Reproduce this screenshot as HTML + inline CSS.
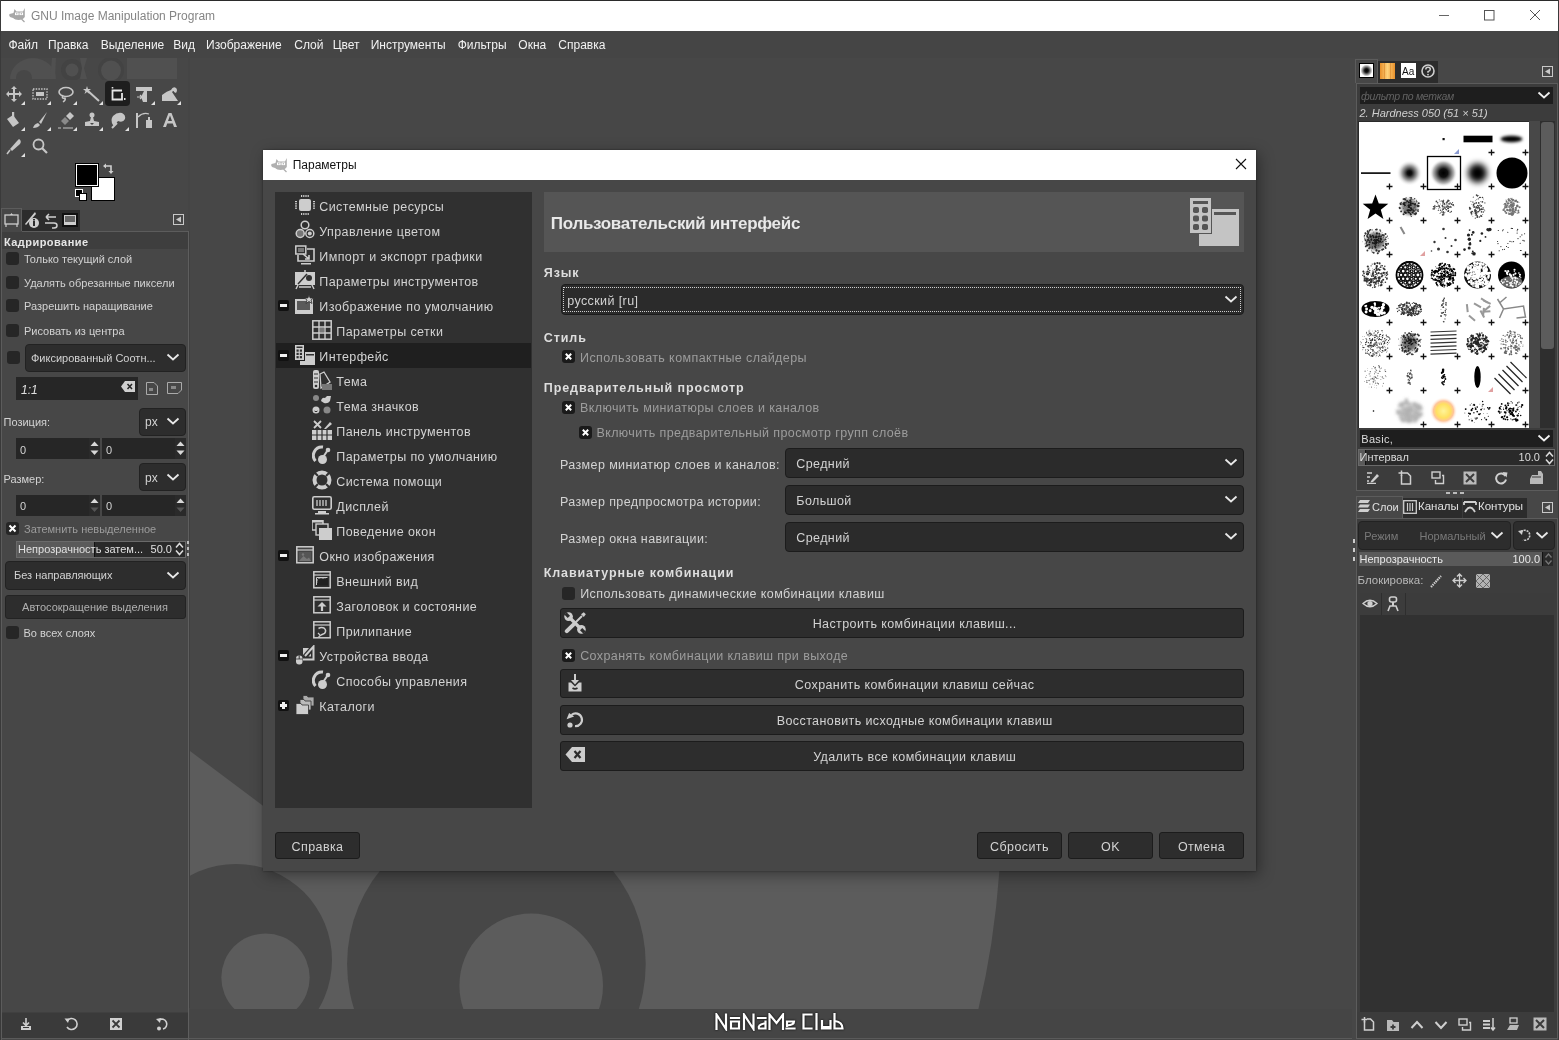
<!DOCTYPE html>
<html><head><meta charset="utf-8"><title>GIMP</title>
<style>
html,body{margin:0;padding:0;width:1559px;height:1040px;overflow:hidden;background:#454545;}
body{position:relative;font-family:"Liberation Sans", sans-serif;}
.t{position:absolute;white-space:pre;line-height:1;font-family:"Liberation Sans", sans-serif;-webkit-font-smoothing:antialiased;}
body{filter:grayscale(0.0001);}
.r{position:absolute;}
</style></head><body>
<div class="r" style="left:0px;top:0px;width:1559px;height:1040px;background:#454545;"></div><div class="r" style="left:0px;top:0px;width:1559px;height:1px;background:#2b2b2b;"></div><div class="r" style="left:0px;top:0px;width:1px;height:1040px;background:#3a3a3a;"></div><div class="r" style="left:1558px;top:0px;width:1px;height:1040px;background:#3a3a3a;"></div><div class="r" style="left:1px;top:1px;width:1557px;height:30px;background:#ffffff;"></div><svg class="r" style="left:8px;top:7px;" width="18" height="16" viewBox="0 0 18 16"><path d="M6.5 2 L8.5 4.5 L15 4.5 L16.8 1 L16.8 10 Q15 13 10.5 13 Q7 13 5 11 L2 10 Q0.5 8 1.5 7 L5.5 6 Z" fill="#a8a8a8"/><rect x="7" y="5.5" width="3.6" height="2.6" fill="#fff"/><rect x="11.5" y="5.5" width="3.6" height="2.6" fill="#fff"/><rect x="8.3" y="6.3" width="1" height="1" fill="#888"/><rect x="12.8" y="6.3" width="1" height="1" fill="#888"/><path d="M6.5 11.5 Q9 10 11 11.5 M13.5 12 L16.5 15" stroke="#a8a8a8" stroke-width="1.3" fill="none"/></svg><div class="t" style="left:31px;top:9.64px;font-size:12px;color:#858585;">GNU Image Manipulation Program</div><div class="r" style="left:1439px;top:15px;width:10px;height:1px;background:#666;"></div><svg class="r" style="left:1484px;top:10px;" width="11" height="11" viewBox="0 0 11 11"><rect x="0.5" y="0.5" width="9.5" height="9.5" fill="none" stroke="#555" stroke-width="1"/></svg><svg class="r" style="left:1529px;top:9px;" width="12" height="12" viewBox="0 0 12 12"><path d="M1 1 L11 11 M11 1 L1 11" stroke="#555" stroke-width="1" fill="none"/></svg><div class="t" style="left:8.5px;top:38.64px;font-size:12px;color:#f2f2f2;">Файл</div><div class="t" style="left:48px;top:38.64px;font-size:12px;color:#f2f2f2;">Правка</div><div class="t" style="left:100.7px;top:38.64px;font-size:12px;color:#f2f2f2;">Выделение</div><div class="t" style="left:173.3px;top:38.64px;font-size:12px;color:#f2f2f2;">Вид</div><div class="t" style="left:206px;top:38.64px;font-size:12px;color:#f2f2f2;">Изображение</div><div class="t" style="left:294.3px;top:38.64px;font-size:12px;color:#f2f2f2;">Слой</div><div class="t" style="left:332.7px;top:38.64px;font-size:12px;color:#f2f2f2;">Цвет</div><div class="t" style="left:370.7px;top:38.64px;font-size:12px;color:#f2f2f2;">Инструменты</div><div class="t" style="left:457.7px;top:38.64px;font-size:12px;color:#f2f2f2;">Фильтры</div><div class="t" style="left:518.3px;top:38.64px;font-size:12px;color:#f2f2f2;">Окна</div><div class="t" style="left:558.3px;top:38.64px;font-size:12px;color:#f2f2f2;">Справка</div><div class="r" style="left:1px;top:58px;width:187px;height:982px;background:#474747;"></div><div class="r" style="left:188px;top:231px;width:1px;height:809px;background:#5e5e5e;"></div><svg class="r" style="left:10px;top:58px;" width="170" height="22" viewBox="0 0 170 22"><g fill="#434343"><circle cx="62" cy="12" r="11"/><circle cx="101" cy="12" r="13"/></g><g fill="#505050">
<path d="M0 21 A22 20 0 0 1 46 21 Z"/>
<path d="M42 0 L46 0 L45 21 L40 21 Z"/>
<circle cx="62" cy="12" r="6.5"/>
<path d="M70 0 L77 0 L74 10 L77 21 L70 21 L72 10 Z"/>
<circle cx="101" cy="12.5" r="10"/>
<rect x="117" y="0" width="50" height="21"/>
</g><g fill="#474747"><circle cx="14" cy="20" r="8"/></g></svg><div class="r" style="left:105px;top:81px;width:25px;height:25px;background:#1e1e1e;border-radius:4px;"></div><svg class="r" style="left:5px;top:85px;" width="18" height="18" viewBox="0 0 18 18"><path d="M9 1 L12 4 L10 4 L10 8 L14 8 L14 6 L17 9 L14 12 L14 10 L10 10 L10 14 L12 14 L9 17 L6 14 L8 14 L8 10 L4 10 L4 12 L1 9 L4 6 L4 8 L8 8 L8 4 L6 4 Z" fill="#c6c6c6"/></svg><svg class="r" style="left:20.5px;top:100.5px;" width="4" height="4" viewBox="0 0 4 4"><path d="M4 0 L4 4 L0 4 Z" fill="#e0e0e0"/></svg><svg class="r" style="left:31px;top:85px;" width="18" height="18" viewBox="0 0 18 18"><rect x="2" y="4" width="14" height="10" fill="none" stroke="#c6c6c6" stroke-width="1.3" stroke-dasharray="1.5 1.2"/><rect x="5" y="7" width="8" height="4" fill="#c6c6c6"/></svg><svg class="r" style="left:46.5px;top:100.5px;" width="4" height="4" viewBox="0 0 4 4"><path d="M4 0 L4 4 L0 4 Z" fill="#e0e0e0"/></svg><svg class="r" style="left:57px;top:85px;" width="18" height="18" viewBox="0 0 18 18"><ellipse cx="9" cy="7" rx="7" ry="4.5" fill="none" stroke="#c6c6c6" stroke-width="1.6"/><path d="M6 10 Q4 14 8 13 Q9 15 6 17" fill="none" stroke="#c6c6c6" stroke-width="1.5"/></svg><svg class="r" style="left:72.5px;top:100.5px;" width="4" height="4" viewBox="0 0 4 4"><path d="M4 0 L4 4 L0 4 Z" fill="#e0e0e0"/></svg><svg class="r" style="left:83px;top:85px;" width="18" height="18" viewBox="0 0 18 18"><path d="M5 6 L16 16" stroke="#c6c6c6" stroke-width="2"/><path d="M4 1 L5 4 L8 4 L5.5 6 L6.5 9 L4 7 L1.5 9 L2.5 6 L0 4 L3 4 Z" fill="#c6c6c6"/></svg><svg class="r" style="left:98.5px;top:100.5px;" width="4" height="4" viewBox="0 0 4 4"><path d="M4 0 L4 4 L0 4 Z" fill="#e0e0e0"/></svg><svg class="r" style="left:109px;top:85px;" width="18" height="18" viewBox="0 0 18 18"><path d="M3.5 2 L3.5 3.5" stroke="#e6e6e6" stroke-width="1.6"/><path d="M13 5.5 L3.5 5.5 L3.5 14.5 L13 14.5 L13 8" fill="none" stroke="#e6e6e6" stroke-width="1.8"/><rect x="15" y="13" width="1.5" height="2" fill="#e6e6e6"/></svg><svg class="r" style="left:135px;top:85px;" width="18" height="18" viewBox="0 0 18 18"><rect x="1" y="2" width="16" height="4" fill="#c6c6c6"/><path d="M9 6 L12 6 L12 17 L8 17 L6 12 Z" fill="#c6c6c6"/><path d="M2 12 L7 12 M5 10 L7 12 L5 14" stroke="#c6c6c6" stroke-width="1.2" fill="none"/></svg><svg class="r" style="left:150.5px;top:100.5px;" width="4" height="4" viewBox="0 0 4 4"><path d="M4 0 L4 4 L0 4 Z" fill="#e0e0e0"/></svg><svg class="r" style="left:161px;top:85px;" width="18" height="18" viewBox="0 0 18 18"><path d="M1 16 L1 10 Q6 6 10 5 Q12 1 15 3 Q17 5 15 8 L13 7 Q13 5 11 7 L17 16 Z" fill="#c6c6c6"/></svg><svg class="r" style="left:176.5px;top:100.5px;" width="4" height="4" viewBox="0 0 4 4"><path d="M4 0 L4 4 L0 4 Z" fill="#e0e0e0"/></svg><svg class="r" style="left:5px;top:111px;" width="18" height="18" viewBox="0 0 18 18"><path d="M2 8 L8 4 L14 12 L8 16 Z" fill="#c6c6c6"/><rect x="7" y="1" width="2.2" height="9" fill="#c6c6c6"/></svg><svg class="r" style="left:20.5px;top:126.5px;" width="4" height="4" viewBox="0 0 4 4"><path d="M4 0 L4 4 L0 4 Z" fill="#e0e0e0"/></svg><svg class="r" style="left:31px;top:111px;" width="18" height="18" viewBox="0 0 18 18"><path d="M16 1 L8 11 L10 13 Z" fill="#c6c6c6"/><path d="M7 12 Q3 13 2 17 Q7 17 9 14 Z" fill="#c6c6c6"/></svg><svg class="r" style="left:46.5px;top:126.5px;" width="4" height="4" viewBox="0 0 4 4"><path d="M4 0 L4 4 L0 4 Z" fill="#e0e0e0"/></svg><svg class="r" style="left:57px;top:111px;" width="18" height="18" viewBox="0 0 18 18"><path d="M9 5 L13 1 L17 5 L13 9 Z" fill="#c6c6c6"/><path d="M4 10 L8 6 L12 10 L8 14 Z" fill="#8a8a8a"/><path d="M1 17 L4 17 M6 17 L16 17" stroke="#c6c6c6" stroke-width="1.2"/></svg><svg class="r" style="left:72.5px;top:126.5px;" width="4" height="4" viewBox="0 0 4 4"><path d="M4 0 L4 4 L0 4 Z" fill="#e0e0e0"/></svg><svg class="r" style="left:83px;top:111px;" width="18" height="18" viewBox="0 0 18 18"><circle cx="9" cy="4" r="2.5" fill="#c6c6c6"/><path d="M8 6 L10 6 L11 10 L16 11 L16 15 L2 15 L2 11 L7 10 Z" fill="#c6c6c6"/><path d="M7 12 L11 12 L9 14Z" fill="#474747"/></svg><svg class="r" style="left:98.5px;top:126.5px;" width="4" height="4" viewBox="0 0 4 4"><path d="M4 0 L4 4 L0 4 Z" fill="#e0e0e0"/></svg><svg class="r" style="left:109px;top:111px;" width="18" height="18" viewBox="0 0 18 18"><path d="M4 14 Q1 9 4 5 Q8 1 13 2 Q17 4 16 8 Q14 12 9 10 L5 15 Z" fill="#c6c6c6"/><path d="M3 17 L8 12" stroke="#c6c6c6" stroke-width="2"/></svg><svg class="r" style="left:124.5px;top:126.5px;" width="4" height="4" viewBox="0 0 4 4"><path d="M4 0 L4 4 L0 4 Z" fill="#e0e0e0"/></svg><svg class="r" style="left:135px;top:111px;" width="18" height="18" viewBox="0 0 18 18"><rect x="1" y="2" width="2" height="15" fill="#c6c6c6"/><path d="M3 6 Q8 1 14 3" fill="none" stroke="#c6c6c6" stroke-width="1.2"/><rect x="11" y="9" width="6" height="8" fill="#c6c6c6"/><rect x="13" y="6" width="2" height="3" fill="#c6c6c6"/></svg><svg class="r" style="left:161px;top:111px;" width="18" height="18" viewBox="0 0 18 18"><path d="M2 16 L7.5 2 L10.5 2 L16 16 L13 16 L11.8 12.5 L6.2 12.5 L5 16 Z M7 10 L11 10 L9 4.5 Z" fill="#c6c6c6" fill-rule="evenodd"/></svg><svg class="r" style="left:5px;top:137px;" width="18" height="18" viewBox="0 0 18 18"><path d="M14 2 Q17 4 15 7 L7 14 L5 12 L12 4 Z" fill="#c6c6c6"/><path d="M5 13 L2 17" stroke="#c6c6c6" stroke-width="1.5"/></svg><svg class="r" style="left:20.5px;top:152.5px;" width="4" height="4" viewBox="0 0 4 4"><path d="M4 0 L4 4 L0 4 Z" fill="#e0e0e0"/></svg><svg class="r" style="left:31px;top:137px;" width="18" height="18" viewBox="0 0 18 18"><circle cx="7.5" cy="7.5" r="5" fill="none" stroke="#c6c6c6" stroke-width="1.8"/><path d="M11 11 L16 16" stroke="#c6c6c6" stroke-width="2.2"/></svg><div class="r" style="left:91px;top:177px;width:24px;height:24px;background:#000;"></div><div class="r" style="left:92px;top:178px;width:22px;height:22px;background:#fff;"></div><div class="r" style="left:75px;top:163px;width:24px;height:24px;background:#000;"></div><div class="r" style="left:76px;top:164px;width:22px;height:22px;background:#fff;"></div><div class="r" style="left:77px;top:165px;width:20px;height:20px;background:#000;"></div><div class="r" style="left:75px;top:189px;width:8px;height:8px;background:#fff;"></div><div class="r" style="left:76px;top:190px;width:6px;height:6px;background:#000;"></div><div class="r" style="left:79px;top:193px;width:8px;height:8px;background:#000;"></div><div class="r" style="left:80px;top:194px;width:6px;height:6px;background:#fff;"></div><svg class="r" style="left:103px;top:163px;" width="13" height="12" viewBox="0 0 13 12"><path d="M2 3 L8 3 L8 9" fill="none" stroke="#cfcfcf" stroke-width="1.6"/><path d="M0 3 L3 0.5 L3 5.5 Z M5.5 8 L10.5 8 L8 11 Z" fill="#cfcfcf"/></svg><div class="r" style="left:22px;top:210px;width:58px;height:21px;background:#2c2c2c;"></div><div class="r" style="left:1px;top:208px;width:21px;height:1px;background:#5c5c5c;"></div><div class="r" style="left:1px;top:208px;width:1px;height:832px;background:#5c5c5c;"></div><div class="r" style="left:21px;top:208px;width:1px;height:23px;background:#5c5c5c;"></div><div class="r" style="left:22px;top:231px;width:166px;height:1px;background:#5c5c5c;"></div><svg class="r" style="left:3px;top:211px;" width="18" height="18" viewBox="0 0 18 18"><rect x="2" y="4" width="13" height="9" fill="none" stroke="#cfcfcf" stroke-width="1.3"/><path d="M7 4 L8.5 2 L10 4Z" fill="#cfcfcf"/><path d="M3 13 L3 16 M14 13 L14 16" stroke="#cfcfcf" stroke-width="1.2"/></svg><svg class="r" style="left:23px;top:211px;" width="18" height="18" viewBox="0 0 18 18"><path d="M12 1 L2 13 L3 14 L13 3 Z" fill="#cfcfcf"/><circle cx="11" cy="12" r="5" fill="#cfcfcf"/><rect x="10" y="10" width="2" height="5" fill="#2c2c2c"/><rect x="10" y="8" width="2" height="1.5" fill="#2c2c2c"/></svg><svg class="r" style="left:42px;top:211px;" width="18" height="18" viewBox="0 0 18 18"><path d="M14 6 L4 6 M4 6 L7 3 M4 6 L7 9" stroke="#cfcfcf" stroke-width="1.5" fill="none"/><path d="M3 12 L12 12 Q15 12 15 14.5 Q15 17 12 17 L10 17" stroke="#cfcfcf" stroke-width="1.5" fill="none"/></svg><svg class="r" style="left:61px;top:211px;" width="18" height="18" viewBox="0 0 18 18"><rect x="1" y="2" width="16" height="14" fill="#111"/><rect x="3" y="4" width="12" height="10" fill="#cfcfcf"/><rect x="4" y="5" width="10" height="6" fill="#666"/></svg><svg class="r" style="left:173px;top:214px;" width="11" height="11" viewBox="0 0 11 11"><rect x="0.5" y="0.5" width="10" height="10" fill="none" stroke="#c8c8c8"/><path d="M3 5.5 L8 2.5 L8 8.5Z" fill="#c8c8c8"/></svg><div class="r" style="left:2px;top:232px;width:186px;height:17px;background:#3e3e3e;"></div><div class="t" style="left:4px;top:236.69px;font-size:11px;color:#e6e6e6;font-weight:700;letter-spacing:0.45px;">Кадрирование</div><div class="r" style="left:6px;top:252px;width:13px;height:13px;background:#262626;border-radius:3px;"></div><div class="t" style="left:24px;top:254.19px;font-size:11px;color:#d3d3d3;">Только текущий слой</div><div class="r" style="left:6px;top:275.5px;width:13px;height:13px;background:#262626;border-radius:3px;"></div><div class="t" style="left:24px;top:277.69px;font-size:11px;color:#d3d3d3;">Удалять обрезанные пиксели</div><div class="r" style="left:6px;top:298.6px;width:13px;height:13px;background:#262626;border-radius:3px;"></div><div class="t" style="left:24px;top:300.79px;font-size:11px;color:#d3d3d3;">Разрешить наращивание</div><div class="r" style="left:6px;top:323.6px;width:13px;height:13px;background:#262626;border-radius:3px;"></div><div class="t" style="left:24px;top:325.79px;font-size:11px;color:#d3d3d3;">Рисовать из центра</div><div class="r" style="left:7px;top:351px;width:13px;height:13px;background:#262626;border-radius:3px;"></div><div class="r" style="left:25px;top:343.5px;width:161px;height:28px;background:#2d2d2d;border-radius:4px;box-sizing:border-box;border:1px solid #222;"></div><div class="t" style="left:31px;top:352.65px;font-size:11px;color:#d3d3d3;">Фиксированный Соотн...</div><svg class="r" style="left:166px;top:353px;" width="14" height="8" viewBox="0 0 14 8"><path d="M1.5 1.5 L7 6.5 L12.5 1.5" fill="none" stroke="#e8e8e8" stroke-width="1.8"/></svg><div class="r" style="left:16px;top:377px;width:122px;height:23px;background:#262626;"></div><div class="t" style="left:21px;top:383.94px;font-size:12px;color:#e0e0e0;font-style:italic;">1:1</div><svg class="r" style="left:121px;top:381px;" width="14" height="11" viewBox="0 0 14 11"><path d="M4 0 L14 0 L14 11 L4 11 L0 5.5 Z" fill="#d0d0d0"/><path d="M6.5 3 L11 8 M11 3 L6.5 8" stroke="#262626" stroke-width="1.5"/></svg><svg class="r" style="left:146px;top:382px;" width="12" height="13" viewBox="0 0 12 13"><path d="M0.5 0.5 L8 0.5 L11.5 4 L11.5 12.5 L0.5 12.5 Z" fill="none" stroke="#aaa"/><rect x="3" y="6" width="4" height="3" fill="#888"/></svg><svg class="r" style="left:167px;top:382px;" width="15" height="12" viewBox="0 0 15 12"><path d="M0.5 0.5 L14.5 0.5 L14.5 8 L11 11.5 L0.5 11.5 Z" fill="none" stroke="#aaa"/><rect x="4" y="4" width="5" height="3" fill="#888"/></svg><div class="t" style="left:3.5px;top:417.19px;font-size:11px;color:#d3d3d3;">Позиция:</div><div class="r" style="left:139px;top:407.5px;width:47px;height:28px;background:#2d2d2d;border-radius:4px;box-sizing:border-box;border:1px solid #222;"></div><div class="t" style="left:145px;top:416.16px;font-size:12px;color:#d3d3d3;">px</div><svg class="r" style="left:166px;top:417px;" width="14" height="8" viewBox="0 0 14 8"><path d="M1.5 1.5 L7 6.5 L12.5 1.5" fill="none" stroke="#e8e8e8" stroke-width="1.8"/></svg><div class="r" style="left:16px;top:438px;width:84px;height:21px;background:#262626;"></div><div class="t" style="left:20px;top:444.69px;font-size:11px;color:#d3d3d3;">0</div><div class="r" style="left:89px;top:438px;width:11px;height:21px;background:#2a2a2a;"></div><svg class="r" style="left:89px;top:438px;" width="11" height="21" viewBox="0 0 11 21"><path d="M1.5 8 L5.5 3.5 L9.5 8Z" fill="#d8d8d8"/><path d="M1.5 12.5 L5.5 17 L9.5 12.5Z" fill="#d8d8d8"/></svg><div class="r" style="left:102px;top:438px;width:84px;height:21px;background:#262626;"></div><div class="t" style="left:106px;top:444.69px;font-size:11px;color:#d3d3d3;">0</div><div class="r" style="left:175px;top:438px;width:11px;height:21px;background:#2a2a2a;"></div><svg class="r" style="left:175px;top:438px;" width="11" height="21" viewBox="0 0 11 21"><path d="M1.5 8 L5.5 3.5 L9.5 8Z" fill="#d8d8d8"/><path d="M1.5 12.5 L5.5 17 L9.5 12.5Z" fill="#d8d8d8"/></svg><div class="t" style="left:3.5px;top:473.69px;font-size:11px;color:#d3d3d3;">Размер:</div><div class="r" style="left:139px;top:463px;width:47px;height:28px;background:#2d2d2d;border-radius:4px;box-sizing:border-box;border:1px solid #222;"></div><div class="t" style="left:145px;top:471.66px;font-size:12px;color:#d3d3d3;">px</div><svg class="r" style="left:166px;top:473px;" width="14" height="8" viewBox="0 0 14 8"><path d="M1.5 1.5 L7 6.5 L12.5 1.5" fill="none" stroke="#e8e8e8" stroke-width="1.8"/></svg><div class="r" style="left:16px;top:494.5px;width:84px;height:21px;background:#262626;"></div><div class="t" style="left:20px;top:501.19px;font-size:11px;color:#d3d3d3;">0</div><div class="r" style="left:89px;top:494.5px;width:11px;height:21px;background:#2a2a2a;"></div><svg class="r" style="left:89px;top:494.5px;" width="11" height="21" viewBox="0 0 11 21"><path d="M1.5 8 L5.5 3.5 L9.5 8Z" fill="#d8d8d8"/><path d="M1.5 12.5 L5.5 17 L9.5 12.5Z" fill="#555"/></svg><div class="r" style="left:102px;top:494.5px;width:84px;height:21px;background:#262626;"></div><div class="t" style="left:106px;top:501.19px;font-size:11px;color:#d3d3d3;">0</div><div class="r" style="left:175px;top:494.5px;width:11px;height:21px;background:#2a2a2a;"></div><svg class="r" style="left:175px;top:494.5px;" width="11" height="21" viewBox="0 0 11 21"><path d="M1.5 8 L5.5 3.5 L9.5 8Z" fill="#d8d8d8"/><path d="M1.5 12.5 L5.5 17 L9.5 12.5Z" fill="#555"/></svg><div class="r" style="left:6px;top:522px;width:13px;height:13px;background:#262626;border-radius:3px;"></div><svg class="r" style="left:6px;top:522px;" width="13" height="13" viewBox="0 0 13 13"><path d="M3.5 3.5 L9.5 9.5 M9.5 3.5 L3.5 9.5" stroke="#fff" stroke-width="2"/></svg><div class="t" style="left:24px;top:523.79px;font-size:11px;color:#9c9c9c;">Затемнить невыделенное</div><div class="r" style="left:16px;top:540.5px;width:170px;height:17px;background:#2a2a2a;box-sizing:border-box;border:1px solid #6a6a6a;"></div><div class="r" style="left:17px;top:541.5px;width:77px;height:15px;background:#5a5a5a;"></div><div class="r" style="left:94px;top:541.5px;width:1px;height:15px;background:#111;"></div><div class="t" style="left:18px;top:544.19px;font-size:11px;color:#e0e0e0;">Непрозрачность затем...</div><div class="t" style="left:-228px;width:400px;text-align:right;top:544.19px;font-size:11px;color:#e0e0e0;">50.0</div><svg class="r" style="left:174px;top:541px;" width="11" height="16" viewBox="0 0 11 16"><path d="M2 6.5 L5.5 2.5 L9 6.5 M2 9.5 L5.5 13.5 L9 9.5" fill="none" stroke="#ddd" stroke-width="1.5"/></svg><svg class="r" style="left:187px;top:540px;" width="3" height="18" viewBox="0 0 3 18"><rect x="0" y="1" width="2" height="3" fill="#bbb"/><rect x="0" y="7" width="2" height="3" fill="#bbb"/><rect x="0" y="13" width="2" height="3" fill="#bbb"/></svg><div class="r" style="left:4.5px;top:561px;width:181px;height:28.5px;background:#2d2d2d;border-radius:4px;box-sizing:border-box;border:1px solid #222;"></div><div class="t" style="left:14px;top:570.40px;font-size:11px;color:#d3d3d3;">Без направляющих</div><svg class="r" style="left:165.5px;top:571px;" width="14" height="8" viewBox="0 0 14 8"><path d="M1.5 1.5 L7 6.5 L12.5 1.5" fill="none" stroke="#e8e8e8" stroke-width="1.8"/></svg><div class="r" style="left:4.5px;top:594.5px;width:181px;height:24.5px;background:#2d2d2d;border-radius:3px;box-sizing:border-box;border:1px solid #232323;"></div><div class="t" style="left:-205px;width:600px;text-align:center;top:601.69px;font-size:11px;color:#b0b0b0;">Автосокращение выделения</div><div class="r" style="left:6px;top:626px;width:13px;height:13px;background:#262626;border-radius:3px;"></div><div class="t" style="left:23.5px;top:628.19px;font-size:11px;color:#d3d3d3;">Во всех слоях</div><div class="r" style="left:2px;top:1012px;width:186px;height:1px;background:#404040;"></div><div class="r" style="left:2px;top:1013px;width:186px;height:25px;background:#3a3a3a;"></div><div class="r" style="left:2px;top:1038px;width:186px;height:1px;background:#5a5a5a;"></div><svg class="r" style="left:18px;top:1016px;" width="16" height="16" viewBox="0 0 16 16"><path d="M8 2 L8 9 M5 6.5 L8 9.5 L11 6.5" stroke="#d0d0d0" stroke-width="1.6" fill="none"/><rect x="3" y="10" width="10" height="4" fill="#d0d0d0"/><rect x="5" y="11" width="6" height="1" fill="#3a3a3a"/></svg><svg class="r" style="left:63px;top:1016px;" width="16" height="16" viewBox="0 0 16 16"><path d="M4 5 A5.5 5.5 0 1 1 4 11" stroke="#d0d0d0" stroke-width="1.6" fill="none" transform="rotate(0)"/><path d="M1.5 2.5 L6.5 2.5 L5 7Z" fill="#d0d0d0"/></svg><svg class="r" style="left:108px;top:1016px;" width="16" height="16" viewBox="0 0 16 16"><rect x="2" y="2" width="12" height="12" fill="#d0d0d0"/><path d="M4.5 4.5 L11.5 11.5 M11.5 4.5 L4.5 11.5" stroke="#3a3a3a" stroke-width="1.8"/></svg><svg class="r" style="left:154px;top:1016px;" width="16" height="16" viewBox="0 0 16 16"><path d="M5 4 A5 5 0 1 1 9 13" stroke="#d0d0d0" stroke-width="1.6" fill="none"/><path d="M2 3 L7 2 L6 7Z" fill="#d0d0d0"/><circle cx="5" cy="12.5" r="2" fill="#d0d0d0"/></svg><div class="r" style="left:189px;top:231px;width:1px;height:777px;background:#404040;"></div><svg class="r" style="left:190px;top:58px;" width="1162" height="951" viewBox="0 0 1162 951"><defs><clipPath id="cc"><rect x="190" y="58" width="1162" height="951"/></clipPath></defs>
<rect x="0" y="0" width="1162" height="951" fill="#474747"/>
<g clip-path="url(#cc)" transform="translate(-190,-58)">
<path d="M190 751 L262 805 L300 833 L1003 833 L999.4 871 Q994 945 978.4 1009 L190 1009 Z" fill="#5c5c5c"/>
<circle cx="236" cy="960" r="96" fill="#474747"/>
<circle cx="496.4" cy="964" r="149.3" fill="#474747"/>
<circle cx="265.5" cy="977.6" r="44.2" fill="#5c5c5c"/>
<circle cx="531.2" cy="985.4" r="71.8" fill="#5c5c5c"/>
</g></svg><div class="r" style="left:189px;top:1009px;width:1163px;height:29px;background:#454545;"></div><div class="r" style="left:189px;top:1038px;width:1163px;height:1px;background:#5a5a5a;"></div><svg class="r" style="left:715px;top:1013px;filter:drop-shadow(0 0 1px #000);" width="130" height="18" viewBox="0 0 130 18"><g fill="none" stroke="#fff" stroke-width="2.2" stroke-linecap="square">
<path d="M1.5 16 L1.5 1.5 L11 16 L11 1.5"/>
<path d="M16 5 L24 5 M16 8.5 L24 8.5 L24 15.5 L16 15.5 Z"/>
<path d="M29 16 L29 1.5 L38.5 16 L38.5 1.5"/>
<path d="M43 5 L50.5 5 M50.5 8.5 L50.5 15.5 L44 15.5 Q42.5 12 49 10.5"/>
<path d="M54.5 16 L54.5 1.5 L61.5 10 L68 1.5 L68 16"/>
<path d="M71.5 15.5 L79.5 15.5 M72 13 L72 8.5 L79 8.5 Q79 12 72 12.5"/>
<path d="M96.5 1.5 L88.5 1.5 L88.5 15.5 L96.5 15.5"/>
<path d="M101.5 1 L101.5 16"/>
<path d="M107 8 L107 15.5 L115.5 15.5 L115.5 8 M107 14 L115.5 14"/>
<path d="M119.5 1 L119.5 15.5 L127.5 15.5 Q127.5 9 120 8"/>
</g></svg><div class="r" style="left:263px;top:150px;width:993px;height:721px;background:#474747;box-shadow:3px 4px 14px rgba(0,0,0,0.38), 0 0 2px rgba(0,0,0,0.4);"></div><div class="r" style="left:263px;top:150px;width:993px;height:30px;background:#ffffff;"></div><svg class="r" style="left:270px;top:157px;" width="18" height="16" viewBox="0 0 18 16"><path d="M6.5 2 L8.5 4.5 L15 4.5 L16.8 1 L16.8 10 Q15 13 10.5 13 Q7 13 5 11 L2 10 Q0.5 8 1.5 7 L5.5 6 Z" fill="#b0b0b0"/><rect x="7" y="5.5" width="3.6" height="2.6" fill="#fff"/><rect x="11.5" y="5.5" width="3.6" height="2.6" fill="#fff"/><rect x="8.3" y="6.3" width="1" height="1" fill="#888"/><rect x="12.8" y="6.3" width="1" height="1" fill="#888"/><path d="M6.5 11.5 Q9 10 11 11.5 M13.5 12 L16.5 15" stroke="#b0b0b0" stroke-width="1.3" fill="none"/></svg><div class="t" style="left:292.7px;top:158.84px;font-size:12px;color:#111111;">Параметры</div><svg class="r" style="left:1235px;top:158px;" width="12" height="12" viewBox="0 0 12 12"><path d="M1 1 L11 11 M11 1 L1 11" stroke="#111" stroke-width="1.1" fill="none"/></svg><div class="r" style="left:275px;top:192px;width:257px;height:616px;background:#303030;"></div><div class="r" style="left:276px;top:343px;width:255px;height:25px;background:#1f1f1f;"></div><svg class="r" style="left:295px;top:195px;" width="20" height="20" viewBox="0 0 20 20"><rect x="6.0" y="0" width="1.2" height="2" fill="#cdcdcd"/><rect x="6.0" y="18" width="1.2" height="2" fill="#cdcdcd"/><rect x="0" y="6.0" width="2" height="1.2" fill="#cdcdcd"/><rect x="18" y="6.0" width="2" height="1.2" fill="#cdcdcd"/><rect x="8.2" y="0" width="1.2" height="2" fill="#cdcdcd"/><rect x="8.2" y="18" width="1.2" height="2" fill="#cdcdcd"/><rect x="0" y="8.2" width="2" height="1.2" fill="#cdcdcd"/><rect x="18" y="8.2" width="2" height="1.2" fill="#cdcdcd"/><rect x="10.4" y="0" width="1.2" height="2" fill="#cdcdcd"/><rect x="10.4" y="18" width="1.2" height="2" fill="#cdcdcd"/><rect x="0" y="10.4" width="2" height="1.2" fill="#cdcdcd"/><rect x="18" y="10.4" width="2" height="1.2" fill="#cdcdcd"/><rect x="12.6" y="0" width="1.2" height="2" fill="#cdcdcd"/><rect x="12.6" y="18" width="1.2" height="2" fill="#cdcdcd"/><rect x="0" y="12.6" width="2" height="1.2" fill="#cdcdcd"/><rect x="18" y="12.6" width="2" height="1.2" fill="#cdcdcd"/><rect x="4" y="4" width="12" height="12" rx="2" fill="#cdcdcd"/></svg><div class="t" style="left:319.3px;top:201.12px;font-size:12.5px;color:#d3d3d3;letter-spacing:0.4px;">Системные ресурсы</div><svg class="r" style="left:295px;top:220px;" width="20" height="20" viewBox="0 0 20 20"><circle cx="10" cy="5" r="3.8" fill="none" stroke="#cdcdcd" stroke-width="1.5"/><circle cx="5.2" cy="13.5" r="4" fill="#777" stroke="#cdcdcd" stroke-width="1.5"/><circle cx="14.8" cy="13.5" r="4" fill="none" stroke="#cdcdcd" stroke-width="1.5"/><circle cx="14.8" cy="13.5" r="2" fill="#cdcdcd"/></svg><div class="t" style="left:319.3px;top:226.12px;font-size:12.5px;color:#d3d3d3;letter-spacing:0.4px;">Управление цветом</div><svg class="r" style="left:295px;top:245px;" width="20" height="20" viewBox="0 0 20 20"><rect x="0.8" y="1" width="10" height="8" fill="none" stroke="#cdcdcd" stroke-width="1.5"/><rect x="3" y="3" width="6" height="4" fill="#777"/><path d="M12 4 L19 4 L19 16 L3 16 L3 10" fill="none" stroke="#cdcdcd" stroke-width="1.6"/><path d="M8 9 L14 14 M14 10 L14 14 L10 14" stroke="#cdcdcd" stroke-width="1.6" fill="none"/><rect x="6" y="18" width="10" height="1.5" fill="#cdcdcd"/></svg><div class="t" style="left:319.3px;top:251.12px;font-size:12.5px;color:#d3d3d3;letter-spacing:0.4px;">Импорт и экспорт графики</div><svg class="r" style="left:295px;top:270px;" width="20" height="20" viewBox="0 0 20 20"><rect x="0" y="2" width="20" height="13" fill="#cdcdcd"/><path d="M3 14 L12 4" stroke="#303030" stroke-width="1.5"/><circle cx="14" cy="8" r="3" fill="#303030"/><path d="M3 15 L1 19 M17 15 L19 19 M4 17 L16 17" stroke="#cdcdcd" stroke-width="1.4"/><path d="M10 0 L10 2" stroke="#cdcdcd" stroke-width="1.5"/></svg><div class="t" style="left:319.3px;top:276.12px;font-size:12.5px;color:#d3d3d3;letter-spacing:0.4px;">Параметры инструментов</div><div class="r" style="left:278px;top:300px;width:11px;height:11px;background:#111;border-radius:2px;"></div><div class="r" style="left:280px;top:304px;width:7px;height:2.5px;background:#f0f0f0;"></div><svg class="r" style="left:295px;top:295px;" width="20" height="20" viewBox="0 0 20 20"><rect x="0" y="4" width="18" height="15" fill="#cdcdcd"/><rect x="2" y="6" width="13" height="9" fill="#5a5a5a"/><path d="M14 0 L15.2 3 L18.5 3 L16 5 L17 8.5 L14 6.5 L11 8.5 L12 5 L9.5 3 L12.8 3 Z" fill="#cdcdcd" stroke="#303030" stroke-width="0.8"/></svg><div class="t" style="left:319.3px;top:301.12px;font-size:12.5px;color:#d3d3d3;letter-spacing:0.4px;">Изображение по умолчанию</div><svg class="r" style="left:312px;top:320px;" width="20" height="20" viewBox="0 0 20 20"><rect x="0.8" y="0.8" width="18.4" height="18.4" fill="none" stroke="#cdcdcd" stroke-width="1.5"/><path d="M7 1 L7 19 M13 1 L13 19 M1 7 L19 7 M1 13 L19 13" stroke="#cdcdcd" stroke-width="1.4"/><rect x="8" y="8" width="4" height="4" fill="#777"/></svg><div class="t" style="left:336.3px;top:326.12px;font-size:12.5px;color:#d3d3d3;letter-spacing:0.4px;">Параметры сетки</div><div class="r" style="left:278px;top:350px;width:11px;height:11px;background:#111;border-radius:2px;"></div><div class="r" style="left:280px;top:354px;width:7px;height:2.5px;background:#f0f0f0;"></div><svg class="r" style="left:295px;top:345px;" width="20" height="20" viewBox="0 0 20 20"><rect x="0" y="0" width="9" height="15" fill="#cdcdcd"/><rect x="1.5" y="1.5" width="6" height="1.5" fill="#303030"/><rect x="1.5" y="4.5" width="2.2" height="2.2" fill="#303030"/><rect x="4.8" y="4.5" width="2.2" height="2.2" fill="#303030"/><rect x="1.5" y="7.8" width="2.2" height="2.2" fill="#303030"/><rect x="4.8" y="7.8" width="2.2" height="2.2" fill="#303030"/><rect x="1.5" y="11.1" width="2.2" height="2.2" fill="#303030"/><rect x="4.8" y="11.1" width="2.2" height="2.2" fill="#303030"/><rect x="10" y="7" width="10" height="13" fill="#cdcdcd"/><rect x="5" y="16" width="5" height="4" fill="#cdcdcd"/><rect x="11" y="9" width="8" height="1.5" fill="#303030"/></svg><div class="t" style="left:319.3px;top:351.12px;font-size:12.5px;color:#d3d3d3;letter-spacing:0.4px;">Интерфейс</div><svg class="r" style="left:312px;top:370px;" width="20" height="20" viewBox="0 0 20 20"><rect x="1" y="0" width="6" height="19" rx="2" fill="#cdcdcd"/><path d="M2 4 L6 4 M2 8 L6 8 M2 12 L6 12" stroke="#303030" stroke-width="1"/><circle cx="4" cy="16" r="1.3" fill="#303030"/><path d="M8 4 L12 2 L18 12 L9 18 Z" fill="none" stroke="#cdcdcd" stroke-width="1.3"/><rect x="10" y="14" width="10" height="6" fill="#777"/></svg><div class="t" style="left:336.3px;top:376.12px;font-size:12.5px;color:#d3d3d3;letter-spacing:0.4px;">Тема</div><svg class="r" style="left:312px;top:395px;" width="20" height="20" viewBox="0 0 20 20"><circle cx="4" cy="15" r="3.5" fill="#cdcdcd"/><circle cx="15" cy="15" r="3.5" fill="#888"/><circle cx="4" cy="3" r="3" fill="#888"/><path d="M9 6 Q10 2 13 3 L15 1 L19 1 L18 6 Q16 9 12 8 Z" fill="#cdcdcd"/><path d="M2.5 16 Q4 17.5 5.5 16" stroke="#303030" fill="none"/></svg><div class="t" style="left:336.3px;top:401.12px;font-size:12.5px;color:#d3d3d3;letter-spacing:0.4px;">Тема значков</div><svg class="r" style="left:312px;top:420px;" width="20" height="20" viewBox="0 0 20 20"><rect x="0" y="10" width="20" height="10" fill="#cdcdcd"/><path d="M5 10 L5 20 M10 10 L10 20 M15 10 L15 20 M0 15 L20 15" stroke="#303030" stroke-width="1.2"/><path d="M2 1 L9 8 M2 8 L9 1" stroke="#cdcdcd" stroke-width="1.8"/><path d="M12 9 L18 2 L20 4 L14 9 Z" fill="#cdcdcd"/></svg><div class="t" style="left:336.3px;top:426.12px;font-size:12.5px;color:#d3d3d3;letter-spacing:0.4px;">Панель инструментов</div><svg class="r" style="left:312px;top:445px;" width="20" height="20" viewBox="0 0 20 20"><path d="M11 2 A 8.5 8.5 0 0 0 3.5 16" fill="none" stroke="#cdcdcd" stroke-width="3"/><circle cx="10.5" cy="14.5" r="4.5" fill="#cdcdcd"/><path d="M10.5 13 L15.5 5.5" stroke="#cdcdcd" stroke-width="2"/><circle cx="16" cy="5" r="2.3" fill="#cdcdcd"/></svg><div class="t" style="left:336.3px;top:451.12px;font-size:12.5px;color:#d3d3d3;letter-spacing:0.4px;">Параметры по умолчанию</div><svg class="r" style="left:312px;top:470px;" width="20" height="20" viewBox="0 0 20 20"><circle cx="10" cy="10" r="7.5" fill="none" stroke="#cdcdcd" stroke-width="4"/><path d="M3 3 L6 6 M17 3 L14 6 M3 17 L6 14 M17 17 L14 14" stroke="#303030" stroke-width="2"/></svg><div class="t" style="left:336.3px;top:476.12px;font-size:12.5px;color:#d3d3d3;letter-spacing:0.4px;">Система помощи</div><svg class="r" style="left:312px;top:495px;" width="20" height="20" viewBox="0 0 20 20"><rect x="0.8" y="1.8" width="18.4" height="12.4" rx="1.5" fill="none" stroke="#cdcdcd" stroke-width="1.6"/><path d="M5 5 L5 11 M8 5 L8 11 M11 5 L11 11 M14 5 L14 11" stroke="#cdcdcd" stroke-width="1.3"/><rect x="6" y="16" width="8" height="2" fill="#cdcdcd"/><rect x="3" y="18" width="14" height="1.5" fill="#cdcdcd"/></svg><div class="t" style="left:336.3px;top:501.12px;font-size:12.5px;color:#d3d3d3;letter-spacing:0.4px;">Дисплей</div><svg class="r" style="left:312px;top:520px;" width="20" height="20" viewBox="0 0 20 20"><rect x="0" y="0" width="11" height="10" fill="none" stroke="#cdcdcd" stroke-width="1.5"/><rect x="0" y="0" width="11" height="2.5" fill="#cdcdcd"/><rect x="4" y="4" width="12" height="11" fill="#303030" stroke="#cdcdcd" stroke-width="1.4"/><rect x="7" y="8" width="13" height="12" fill="#cdcdcd"/></svg><div class="t" style="left:336.3px;top:526.12px;font-size:12.5px;color:#d3d3d3;letter-spacing:0.4px;">Поведение окон</div><div class="r" style="left:278px;top:550px;width:11px;height:11px;background:#111;border-radius:2px;"></div><div class="r" style="left:280px;top:554px;width:7px;height:2.5px;background:#f0f0f0;"></div><svg class="r" style="left:295px;top:545px;" width="20" height="20" viewBox="0 0 20 20"><rect x="1.8" y="1.8" width="16.4" height="16" fill="#444" stroke="#cdcdcd" stroke-width="1.5"/><path d="M2 5 L18 5" stroke="#cdcdcd" stroke-width="1.2"/><rect x="4" y="7" width="12" height="9" fill="#555"/><path d="M4 16 L8.5 11 L12 14 L14 12.5 L16 16 Z" fill="#777"/><circle cx="8" cy="9.5" r="1.2" fill="#777"/></svg><div class="t" style="left:319.3px;top:551.12px;font-size:12.5px;color:#d3d3d3;letter-spacing:0.4px;">Окно изображения</div><svg class="r" style="left:312px;top:570px;" width="20" height="20" viewBox="0 0 20 20"><rect x="1.8" y="1.8" width="16.4" height="16" fill="none" stroke="#cdcdcd" stroke-width="1.5"/><path d="M2 5 L18 5" stroke="#cdcdcd" stroke-width="1.2"/><rect x="4" y="7" width="12" height="8.5" fill="#222"/><path d="M4.5 7.5 L15.5 7.5 M4.5 7.5 L4.5 15 M7 7.5 L7 9 M9 7.5 L9 8.5 M11 7.5 L11 9 M13 7.5 L13 8.5 M4.5 10 L6 10 M4.5 12 L5.5 12" stroke="#cdcdcd" stroke-width="1"/></svg><div class="t" style="left:336.3px;top:576.12px;font-size:12.5px;color:#d3d3d3;letter-spacing:0.4px;">Внешний вид</div><svg class="r" style="left:312px;top:595px;" width="20" height="20" viewBox="0 0 20 20"><rect x="1.8" y="1.8" width="16.4" height="16" fill="none" stroke="#cdcdcd" stroke-width="1.5"/><path d="M2 5 L18 5" stroke="#cdcdcd" stroke-width="1.2"/><path d="M10 16 L10 10" stroke="#cdcdcd" stroke-width="2.2"/><path d="M5.5 11.5 L10 7 L14.5 11.5 Z" fill="#cdcdcd"/></svg><div class="t" style="left:336.3px;top:601.12px;font-size:12.5px;color:#d3d3d3;letter-spacing:0.4px;">Заголовок и состояние</div><svg class="r" style="left:312px;top:620px;" width="20" height="20" viewBox="0 0 20 20"><rect x="1.8" y="1.8" width="16.4" height="16" fill="none" stroke="#cdcdcd" stroke-width="1.5"/><path d="M2 5 L18 5" stroke="#cdcdcd" stroke-width="1.2"/><path d="M6.5 8.5 Q9 7 12 8 Q15 10.5 12.5 13.5 L9 15" stroke="#cdcdcd" stroke-width="1.5" fill="none"/><path d="M6 13 L8.5 15.5 L6.5 17" stroke="#cdcdcd" stroke-width="1.2" fill="none"/></svg><div class="t" style="left:336.3px;top:626.12px;font-size:12.5px;color:#d3d3d3;letter-spacing:0.4px;">Прилипание</div><div class="r" style="left:278px;top:650px;width:11px;height:11px;background:#111;border-radius:2px;"></div><div class="r" style="left:280px;top:654px;width:7px;height:2.5px;background:#f0f0f0;"></div><svg class="r" style="left:295px;top:645px;" width="20" height="20" viewBox="0 0 20 20"><path d="M10 11 L18.5 1.5 L18.5 14.5 L8 14.5" fill="none" stroke="#cdcdcd" stroke-width="2"/><path d="M8 3 L14 3 L8 10 Z" fill="#cdcdcd"/><path d="M13.5 11.5 L16 8.5 L16 11.5Z" fill="#cdcdcd"/><rect x="1" y="10.5" width="6.5" height="9" rx="3" fill="#cdcdcd"/><path d="M4.2 10.5 L4.2 14" stroke="#303030" stroke-width="1"/><path d="M1 14 L7.5 14" stroke="#303030" stroke-width="0.8"/></svg><div class="t" style="left:319.3px;top:651.12px;font-size:12.5px;color:#d3d3d3;letter-spacing:0.4px;">Устройства ввода</div><svg class="r" style="left:312px;top:670px;" width="20" height="20" viewBox="0 0 20 20"><path d="M11 2 A 8.5 8.5 0 0 0 3.5 16" fill="none" stroke="#cdcdcd" stroke-width="3"/><circle cx="10.5" cy="14.5" r="4.5" fill="#cdcdcd"/><path d="M10.5 13 L15.5 5.5" stroke="#cdcdcd" stroke-width="2"/><circle cx="16" cy="5" r="2.3" fill="#cdcdcd"/></svg><div class="t" style="left:336.3px;top:676.12px;font-size:12.5px;color:#d3d3d3;letter-spacing:0.4px;">Способы управления</div><div class="r" style="left:278px;top:700px;width:11px;height:11px;background:#111;border-radius:2px;"></div><div class="r" style="left:280px;top:704px;width:7px;height:2.5px;background:#f0f0f0;"></div><div class="r" style="left:282.25px;top:702px;width:2.5px;height:7px;background:#f0f0f0;"></div><svg class="r" style="left:295px;top:695px;" width="20" height="20" viewBox="0 0 20 20"><path d="M8 0.5 L12 0.5 L13 2 L19 2 L19 11 L8 11 Z" fill="#aaa" stroke="#303030" stroke-width="0.8"/><path d="M5 4.5 L9 4.5 L10 6 L16 6 L16 15 L5 15 Z" fill="#bbb" stroke="#303030" stroke-width="0.8"/><path d="M1 8.5 L6 8.5 L7 10 L13.5 10 L13.5 19.5 L1 19.5 Z" fill="#cdcdcd" stroke="#303030" stroke-width="0.8"/></svg><div class="t" style="left:319.3px;top:701.12px;font-size:12.5px;color:#d3d3d3;letter-spacing:0.4px;">Каталоги</div><div class="r" style="left:544px;top:192px;width:700px;height:60px;background:#555555;"></div><div class="t" style="left:550.8px;top:214.71px;font-size:17px;color:#e8e8e8;font-weight:700;letter-spacing:-0.3px;">Пользовательский интерфейс</div><svg class="r" style="left:1190px;top:197px;" width="50" height="50" viewBox="0 0 50 50"><rect x="0" y="1" width="21" height="35" fill="#c4c4c4"/><rect x="3" y="4" width="15" height="3" fill="#555"/><rect x="3" y="10.0" width="6" height="6" rx="1.8" fill="#555"/><rect x="12" y="10.0" width="6" height="6" rx="1.8" fill="#555"/><rect x="3" y="18.5" width="6" height="6" rx="1.8" fill="#555"/><rect x="12" y="18.5" width="6" height="6" rx="1.8" fill="#555"/><rect x="3" y="27.0" width="6" height="6" rx="1.8" fill="#555"/><rect x="12" y="27.0" width="6" height="6" rx="1.8" fill="#555"/><path d="M22 12 L49 12 L49 49 L9 49 L9 37 L22 37 Z" fill="#c4c4c4"/><rect x="24" y="15" width="22" height="3" fill="#555"/></svg><div class="t" style="left:543.8px;top:267.42px;font-size:12.5px;color:#dedede;font-weight:700;letter-spacing:0.9px;">Язык</div><div class="r" style="left:560.5px;top:284px;width:683px;height:31px;background:#2b2b2b;border-radius:4px;box-sizing:border-box;border:1px solid #1c1c1c;"></div><div class="r" style="left:563px;top:287px;width:678px;height:25px;background:transparent;box-sizing:border-box;border:1px dotted #cfcfcf;"></div><div class="t" style="left:567.2px;top:295.02px;font-size:12.5px;color:#d3d3d3;letter-spacing:0.4px;">русский [ru]</div><svg class="r" style="left:1223.5px;top:295px;" width="14" height="8" viewBox="0 0 14 8"><path d="M1.5 1.5 L7 6.5 L12.5 1.5" fill="none" stroke="#e8e8e8" stroke-width="1.8"/></svg><div class="t" style="left:543.8px;top:331.62px;font-size:12.5px;color:#dedede;font-weight:700;letter-spacing:0.9px;">Стиль</div><div class="r" style="left:561.5px;top:350.3px;width:13px;height:13px;background:#1a1a1a;border-radius:3px;"></div><svg class="r" style="left:561.5px;top:350.3px;" width="13" height="13" viewBox="0 0 13 13"><path d="M3.8 3.8 L9.2 9.2 M9.2 3.8 L3.8 9.2" stroke="#fff" stroke-width="2"/></svg><div class="t" style="left:580px;top:351.82px;font-size:12.5px;color:#9d9d9d;letter-spacing:0.4px;">Использовать компактные слайдеры</div><div class="t" style="left:543.8px;top:382.32px;font-size:12.5px;color:#dedede;font-weight:700;letter-spacing:0.9px;">Предварительный просмотр</div><div class="r" style="left:561.5px;top:400.6px;width:13px;height:13px;background:#1a1a1a;border-radius:3px;"></div><svg class="r" style="left:561.5px;top:400.6px;" width="13" height="13" viewBox="0 0 13 13"><path d="M3.8 3.8 L9.2 9.2 M9.2 3.8 L3.8 9.2" stroke="#fff" stroke-width="2"/></svg><div class="t" style="left:580px;top:401.52px;font-size:12.5px;color:#9d9d9d;letter-spacing:0.4px;">Включить миниатюры слоев и каналов</div><div class="r" style="left:578.5px;top:426px;width:13px;height:13px;background:#1a1a1a;border-radius:3px;"></div><svg class="r" style="left:578.5px;top:426px;" width="13" height="13" viewBox="0 0 13 13"><path d="M3.8 3.8 L9.2 9.2 M9.2 3.8 L3.8 9.2" stroke="#fff" stroke-width="2"/></svg><div class="t" style="left:596.4px;top:427.32px;font-size:12.5px;color:#9d9d9d;letter-spacing:0.4px;">Включить предварительный просмотр групп слоёв</div><div class="t" style="left:559.9px;top:458.82px;font-size:12.5px;color:#d3d3d3;letter-spacing:0.4px;">Размер миниатюр слоев и каналов:</div><div class="r" style="left:784.8px;top:447.7px;width:459px;height:30px;background:#2b2b2b;border-radius:4px;box-sizing:border-box;border:1px solid #1c1c1c;"></div><div class="t" style="left:796.3px;top:458.32px;font-size:12.5px;color:#d3d3d3;letter-spacing:0.4px;">Средний</div><svg class="r" style="left:1223.5px;top:458px;" width="14" height="8" viewBox="0 0 14 8"><path d="M1.5 1.5 L7 6.5 L12.5 1.5" fill="none" stroke="#e8e8e8" stroke-width="1.8"/></svg><div class="t" style="left:559.9px;top:495.82px;font-size:12.5px;color:#d3d3d3;letter-spacing:0.4px;">Размер предпросмотра истории:</div><div class="r" style="left:784.8px;top:484.7px;width:459px;height:30px;background:#2b2b2b;border-radius:4px;box-sizing:border-box;border:1px solid #1c1c1c;"></div><div class="t" style="left:796.3px;top:495.32px;font-size:12.5px;color:#d3d3d3;letter-spacing:0.4px;">Большой</div><svg class="r" style="left:1223.5px;top:495px;" width="14" height="8" viewBox="0 0 14 8"><path d="M1.5 1.5 L7 6.5 L12.5 1.5" fill="none" stroke="#e8e8e8" stroke-width="1.8"/></svg><div class="t" style="left:559.9px;top:532.72px;font-size:12.5px;color:#d3d3d3;letter-spacing:0.4px;">Размер окна навигации:</div><div class="r" style="left:784.8px;top:521.6px;width:459px;height:30px;background:#2b2b2b;border-radius:4px;box-sizing:border-box;border:1px solid #1c1c1c;"></div><div class="t" style="left:796.3px;top:532.22px;font-size:12.5px;color:#d3d3d3;letter-spacing:0.4px;">Средний</div><svg class="r" style="left:1223.5px;top:532px;" width="14" height="8" viewBox="0 0 14 8"><path d="M1.5 1.5 L7 6.5 L12.5 1.5" fill="none" stroke="#e8e8e8" stroke-width="1.8"/></svg><div class="t" style="left:543.7px;top:567.32px;font-size:12.5px;color:#dedede;font-weight:700;letter-spacing:0.9px;">Клавиатурные комбинации</div><div class="r" style="left:562px;top:587.2px;width:13px;height:13px;background:#262626;border-radius:3px;"></div><div class="t" style="left:580.2px;top:588.12px;font-size:12.5px;color:#d3d3d3;letter-spacing:0.4px;">Использовать динамические комбинации клавиш</div><div class="r" style="left:0px;top:0px;width:0px;height:0px;background:#000;"></div><div class="r" style="left:560px;top:608.0px;width:684px;height:29.8px;background:#2d2d2d;border-radius:3px;box-sizing:border-box;border:1px solid #1c1c1c;"></div><div class="t" style="left:614.7px;width:600px;text-align:center;top:618.22px;font-size:12.5px;color:#d3d3d3;letter-spacing:0.4px;">Настроить комбинации клавиш...</div><svg class="r" style="left:564px;top:612px;" width="22" height="22" viewBox="0 0 22 22"><path d="M5 5 L17 17" stroke="#cdcdcd" stroke-width="3.2"/><circle cx="4.6" cy="4.6" r="4.3" fill="#cdcdcd"/><circle cx="17.4" cy="17.4" r="4.3" fill="#cdcdcd"/><path d="M0.3 2.6 L2.6 0.3 L6 3.7 L3.7 6 Z" fill="#2d2d2d"/><path d="M21.7 19.4 L19.4 21.7 L16 18.3 L18.3 16 Z" fill="#2d2d2d"/><path d="M2.8 19.2 L9.2 12.8" stroke="#cdcdcd" stroke-width="4" stroke-linecap="round"/><path d="M9 13 L18 4" stroke="#cdcdcd" stroke-width="2"/><path d="M17 2.2 L19.8 0.2 L21.8 2.2 L19.8 5 Z" fill="#cdcdcd"/><path d="M9 13 L13 9" stroke="#2d2d2d" stroke-width="0.8" opacity="0"/></svg><div class="r" style="left:562px;top:648.6px;width:13px;height:13px;background:#1a1a1a;border-radius:3px;"></div><svg class="r" style="left:562px;top:648.6px;" width="13" height="13" viewBox="0 0 13 13"><path d="M3.8 3.8 L9.2 9.2 M9.2 3.8 L3.8 9.2" stroke="#fff" stroke-width="2"/></svg><div class="t" style="left:580.2px;top:649.72px;font-size:12.5px;color:#9d9d9d;letter-spacing:0.4px;">Сохранять комбинации клавиш при выходе</div><div class="r" style="left:560px;top:668.7px;width:684px;height:29.8px;background:#2d2d2d;border-radius:3px;box-sizing:border-box;border:1px solid #1c1c1c;"></div><div class="t" style="left:614.7px;width:600px;text-align:center;top:678.92px;font-size:12.5px;color:#d3d3d3;letter-spacing:0.4px;">Сохранить комбинации клавиш сейчас</div><svg class="r" style="left:565px;top:673px;" width="20" height="20" viewBox="0 0 20 20"><path d="M10 1 L10 9" stroke="#cdcdcd" stroke-width="2"/><path d="M6 7 L14 7 L10 11.5 Z" fill="#cdcdcd"/><path d="M3.5 9.5 L6 9.5 L10 13.5 L14 9.5 L16.5 9.5 L16.5 18.5 L3.5 18.5 Z" fill="#cdcdcd"/><path d="M7.5 15 Q10 16.8 12.5 15" stroke="#2d2d2d" stroke-width="1.6" fill="none"/></svg><div class="r" style="left:560px;top:704.8px;width:684px;height:29.8px;background:#2d2d2d;border-radius:3px;box-sizing:border-box;border:1px solid #1c1c1c;"></div><div class="t" style="left:614.7px;width:600px;text-align:center;top:715.02px;font-size:12.5px;color:#d3d3d3;letter-spacing:0.4px;">Восстановить исходные комбинации клавиш</div><svg class="r" style="left:565px;top:709px;" width="20" height="20" viewBox="0 0 20 20"><path d="M6.5 6 A6.3 6.3 0 1 1 10 17" stroke="#cdcdcd" stroke-width="2.2" fill="none"/><path d="M1 9 L9 9 L5.5 4 Z" fill="#cdcdcd" transform="rotate(-20 5 8)"/><circle cx="5" cy="16" r="2.6" fill="#cdcdcd"/></svg><div class="r" style="left:560px;top:741.3px;width:684px;height:29.3px;background:#2d2d2d;border-radius:3px;box-sizing:border-box;border:1px solid #1c1c1c;"></div><div class="t" style="left:614.7px;width:600px;text-align:center;top:751.27px;font-size:12.5px;color:#d3d3d3;letter-spacing:0.4px;">Удалить все комбинации клавиш</div><svg class="r" style="left:565px;top:745px;" width="20" height="20" viewBox="0 0 20 20"><path d="M7 2 L20 2 L20 17 L7 17 L0.5 9.5 Z" fill="#cdcdcd"/><path d="M9.5 6 L15.5 13 M15.5 6 L9.5 13" stroke="#2d2d2d" stroke-width="2.2"/></svg><div class="r" style="left:275px;top:832px;width:85px;height:27px;background:#2d2d2d;border-radius:3px;box-sizing:border-box;border:1px solid #1c1c1c;"></div><div class="t" style="left:17.5px;width:600px;text-align:center;top:840.92px;font-size:12.5px;color:#d3d3d3;letter-spacing:0.4px;">Справка</div><div class="r" style="left:977px;top:832px;width:85px;height:27px;background:#2d2d2d;border-radius:3px;box-sizing:border-box;border:1px solid #1c1c1c;"></div><div class="t" style="left:719.5px;width:600px;text-align:center;top:840.92px;font-size:12.5px;color:#d3d3d3;letter-spacing:0.4px;">Сбросить</div><div class="r" style="left:1068px;top:832px;width:85px;height:27px;background:#2d2d2d;border-radius:3px;box-sizing:border-box;border:1px solid #1c1c1c;"></div><div class="t" style="left:810.5px;width:600px;text-align:center;top:840.92px;font-size:12.5px;color:#d3d3d3;letter-spacing:0.4px;">OK</div><div class="r" style="left:1159px;top:832px;width:85px;height:27px;background:#2d2d2d;border-radius:3px;box-sizing:border-box;border:1px solid #1c1c1c;"></div><div class="t" style="left:901.5px;width:600px;text-align:center;top:840.92px;font-size:12.5px;color:#d3d3d3;letter-spacing:0.4px;">Отмена</div><div class="r" style="left:1352px;top:58px;width:206px;height:982px;background:#474747;"></div><div class="r" style="left:1377px;top:61px;width:61px;height:22px;background:#2c2c2c;"></div><div class="r" style="left:1355px;top:59px;width:23px;height:1px;background:#5c5c5c;"></div><div class="r" style="left:1355px;top:59px;width:1px;height:24px;background:#5c5c5c;"></div><div class="r" style="left:1377px;top:59px;width:1px;height:24px;background:#5c5c5c;"></div><div class="r" style="left:1356px;top:83px;width:201px;height:1px;background:#5c5c5c;"></div><div class="r" style="left:1356px;top:83px;width:1px;height:408px;background:#5c5c5c;"></div><div class="r" style="left:1557px;top:83px;width:1px;height:408px;background:#5c5c5c;"></div><div class="r" style="left:1356px;top:490px;width:202px;height:1px;background:#5c5c5c;"></div><div class="r" style="left:1357px;top:84px;width:200px;height:406px;background:#3c3c3c;"></div><div class="r" style="left:1359px;top:63px;width:15px;height:15px;background:#000;"></div><svg class="r" style="left:1360px;top:64px;" width="13" height="13" viewBox="0 0 13 13"><defs><radialGradient id="bg1"><stop offset="0" stop-color="#000"/><stop offset="0.3" stop-color="#111"/><stop offset="1" stop-color="#fff"/></radialGradient></defs><rect width="13" height="13" fill="#fff"/><circle cx="6.5" cy="6.5" r="6" fill="url(#bg1)"/></svg><svg class="r" style="left:1380px;top:63px;" width="15" height="16" viewBox="0 0 15 16"><defs><linearGradient id="og" x1="0" x2="1"><stop offset="0" stop-color="#e8902a"/><stop offset="0.5" stop-color="#ffd27a"/><stop offset="1" stop-color="#e8902a"/></linearGradient></defs><rect width="15" height="16" fill="url(#og)"/><rect x="4" y="0" width="1" height="16" fill="#d07a20" opacity="0.5"/><rect x="10" y="0" width="1" height="16" fill="#d07a20" opacity="0.5"/></svg><div class="r" style="left:1401px;top:63px;width:15px;height:15px;background:#fff;"></div><div class="t" style="left:1402px;top:66.53px;font-size:10px;color:#111;">Aa</div><svg class="r" style="left:1421px;top:64px;" width="14" height="14" viewBox="0 0 14 14"><circle cx="7" cy="7" r="6" fill="none" stroke="#cfcfcf" stroke-width="1.6"/><path d="M4.8 5.5 Q4.8 3.3 7 3.3 Q9.3 3.3 9.3 5.3 Q9.3 6.8 7 7.6 L7 8.8" fill="none" stroke="#cfcfcf" stroke-width="1.5"/><circle cx="7" cy="10.6" r="0.9" fill="#cfcfcf"/></svg><svg class="r" style="left:1542px;top:66px;" width="11" height="11" viewBox="0 0 11 11"><rect x="0.5" y="0.5" width="10" height="10" fill="none" stroke="#c8c8c8"/><path d="M3 5.5 L8 2.5 L8 8.5Z" fill="#c8c8c8"/></svg><div class="r" style="left:1360px;top:87px;width:193px;height:17px;background:#1e1e1e;"></div><div class="t" style="left:1361px;top:91.11px;font-size:10.5px;color:#626262;letter-spacing:-0.3px;font-style:italic;">фильтр по меткам</div><svg class="r" style="left:1537px;top:91px;" width="14" height="8" viewBox="0 0 14 8"><path d="M1.5 1.5 L7 6.5 L12.5 1.5" fill="none" stroke="#f0f0f0" stroke-width="1.8"/></svg><div class="t" style="left:1359.5px;top:108.19px;font-size:11px;color:#d0d0d0;font-style:italic;">2. Hardness 050 (51 × 51)</div><div class="r" style="left:1358px;top:121px;width:172px;height:307px;background:#2a2a2a;"></div><div class="r" style="left:1529px;top:121px;width:11px;height:307px;background:#484848;"></div><div class="r" style="left:1540px;top:121px;width:15px;height:307px;background:#2e2e2e;"></div><div class="r" style="left:1541px;top:122px;width:13px;height:227px;background:#5c5c5c;border-radius:3px;"></div><svg class="r" style="left:1359px;top:122px;" width="170" height="306" viewBox="0 0 170 306"><rect x="0" y="0" width="170" height="306" fill="#fff"/><defs><filter id="bl1" x="-50%" y="-50%" width="200%" height="200%"><feGaussianBlur stdDeviation="3"/></filter><filter id="bl2" x="-50%" y="-50%" width="200%" height="200%"><feGaussianBlur stdDeviation="1.6"/></filter><filter id="bl05" x="-50%" y="-50%" width="200%" height="200%"><feGaussianBlur stdDeviation="0.6"/></filter><radialGradient id="sd1"><stop offset="0" stop-color="#000"/><stop offset="0.18" stop-color="#111"/><stop offset="0.6" stop-color="#aaa"/><stop offset="1" stop-color="#fff" stop-opacity="0"/></radialGradient><radialGradient id="sd2"><stop offset="0" stop-color="#000"/><stop offset="0.3" stop-color="#111"/><stop offset="0.75" stop-color="#bbb"/><stop offset="1" stop-color="#fff" stop-opacity="0"/></radialGradient><radialGradient id="sd3"><stop offset="0" stop-color="#000"/><stop offset="0.55" stop-color="#111"/><stop offset="0.85" stop-color="#888"/><stop offset="1" stop-color="#fff" stop-opacity="0"/></radialGradient><radialGradient id="glow"><stop offset="0" stop-color="#fff49a"/><stop offset="0.5" stop-color="#ffe060"/><stop offset="0.72" stop-color="#ffc49a"/><stop offset="1" stop-color="#fff" stop-opacity="0"/></radialGradient></defs><rect x="83.5" y="16.0" width="2.2" height="2.2" fill="#111"/><rect x="104.5" y="13.7" width="29" height="6.6" fill="#000"/><ellipse cx="152.5" cy="17.0" rx="11" ry="3.2" fill="#000" filter="url(#bl2)"/><rect x="2.0" y="50.3" width="29.5" height="1.6" fill="#000"/><circle cx="50.5" cy="51.0" r="13" fill="url(#sd1)"/><circle cx="84.5" cy="51.0" r="14" fill="url(#sd2)"/><circle cx="118.5" cy="51.0" r="9.5" fill="#000" filter="url(#bl1)"/><circle cx="153.0" cy="51.0" r="15.5" fill="#000"/><polygon points="16.5,72.5 19.8,81.5 29.3,81.8 21.8,87.7 24.4,96.9 16.5,91.6 8.6,96.9 11.2,87.7 3.7,81.8 13.2,81.5" fill="#000"/><circle cx="50.5" cy="85.0" r="8" fill="#444" filter="url(#bl2)" opacity="0.7"/><g fill="#000" opacity="0.8"><circle cx="49.1" cy="87.9" r="0.82"/><circle cx="56.7" cy="88.0" r="0.59"/><circle cx="56.7" cy="87.4" r="0.33"/><circle cx="48.6" cy="85.8" r="0.37"/><circle cx="42.6" cy="89.1" r="0.40"/><circle cx="51.8" cy="92.5" r="1.06"/><circle cx="45.4" cy="82.3" r="1.08"/><circle cx="59.2" cy="87.6" r="0.53"/><circle cx="52.2" cy="87.2" r="0.55"/><circle cx="51.9" cy="81.7" r="0.77"/><circle cx="46.9" cy="80.8" r="0.74"/><circle cx="52.2" cy="85.7" r="0.46"/><circle cx="48.0" cy="79.6" r="0.55"/><circle cx="45.2" cy="81.8" r="0.54"/><circle cx="52.7" cy="77.2" r="0.50"/><circle cx="44.4" cy="81.9" r="1.00"/><circle cx="49.9" cy="80.3" r="1.08"/><circle cx="54.9" cy="89.0" r="0.91"/><circle cx="54.3" cy="90.3" r="0.33"/><circle cx="46.3" cy="77.6" r="0.76"/><circle cx="54.0" cy="81.5" r="0.86"/><circle cx="44.5" cy="81.0" r="0.66"/><circle cx="55.7" cy="76.8" r="0.68"/><circle cx="49.5" cy="83.4" r="0.86"/><circle cx="44.5" cy="77.1" r="0.96"/><circle cx="49.3" cy="90.5" r="0.83"/><circle cx="56.7" cy="85.9" r="0.43"/><circle cx="51.9" cy="86.2" r="0.91"/><circle cx="53.5" cy="88.1" r="0.61"/><circle cx="52.0" cy="83.4" r="0.66"/><circle cx="41.7" cy="82.2" r="0.96"/><circle cx="53.5" cy="81.5" r="0.63"/><circle cx="44.6" cy="92.2" r="1.07"/><circle cx="52.6" cy="87.9" r="0.49"/><circle cx="51.2" cy="91.4" r="0.77"/><circle cx="50.5" cy="85.4" r="0.64"/><circle cx="45.7" cy="90.2" r="1.06"/><circle cx="48.0" cy="78.7" r="0.79"/><circle cx="49.7" cy="83.4" r="1.02"/><circle cx="52.2" cy="75.9" r="0.94"/><circle cx="46.0" cy="88.6" r="0.38"/><circle cx="49.2" cy="83.6" r="0.35"/><circle cx="51.4" cy="88.2" r="0.57"/><circle cx="50.6" cy="85.0" r="0.42"/><circle cx="54.9" cy="88.2" r="0.32"/><circle cx="55.8" cy="79.7" r="0.42"/><circle cx="50.4" cy="90.3" r="0.59"/><circle cx="57.0" cy="91.3" r="1.09"/><circle cx="44.2" cy="86.4" r="0.37"/><circle cx="54.7" cy="88.1" r="0.51"/><circle cx="52.1" cy="82.1" r="0.32"/><circle cx="57.0" cy="82.9" r="0.42"/><circle cx="49.4" cy="84.7" r="0.72"/><circle cx="59.6" cy="83.8" r="0.86"/><circle cx="50.1" cy="90.5" r="0.43"/><circle cx="51.4" cy="78.2" r="0.92"/><circle cx="48.5" cy="88.6" r="0.95"/><circle cx="59.5" cy="84.1" r="0.94"/><circle cx="54.0" cy="77.4" r="0.48"/><circle cx="45.2" cy="84.4" r="0.32"/><circle cx="55.1" cy="85.8" r="0.51"/><circle cx="47.1" cy="75.9" r="0.66"/><circle cx="59.7" cy="81.2" r="1.06"/><circle cx="47.8" cy="88.0" r="0.48"/><circle cx="51.8" cy="88.6" r="0.80"/><circle cx="57.8" cy="79.7" r="0.68"/><circle cx="45.5" cy="77.8" r="0.37"/><circle cx="45.5" cy="77.0" r="0.93"/><circle cx="50.5" cy="78.6" r="0.44"/><circle cx="51.8" cy="80.0" r="0.94"/><circle cx="56.1" cy="84.0" r="0.62"/><circle cx="58.3" cy="82.3" r="0.44"/><circle cx="52.7" cy="87.3" r="1.02"/><circle cx="51.6" cy="82.0" r="0.96"/><circle cx="58.2" cy="84.0" r="0.58"/><circle cx="47.7" cy="84.1" r="0.31"/><circle cx="58.1" cy="83.6" r="0.72"/><circle cx="56.0" cy="82.5" r="1.00"/><circle cx="52.3" cy="81.5" r="0.50"/><circle cx="49.4" cy="89.1" r="0.77"/><circle cx="50.2" cy="90.9" r="0.40"/><circle cx="55.0" cy="82.1" r="0.67"/><circle cx="42.3" cy="80.3" r="0.64"/><circle cx="56.2" cy="81.7" r="0.73"/><circle cx="49.6" cy="84.9" r="0.65"/><circle cx="50.6" cy="85.3" r="0.94"/><circle cx="53.5" cy="90.6" r="0.88"/><circle cx="45.7" cy="83.2" r="0.71"/><circle cx="42.4" cy="82.1" r="0.38"/><circle cx="46.5" cy="83.4" r="0.52"/><circle cx="51.4" cy="78.4" r="0.75"/><circle cx="51.1" cy="75.6" r="0.65"/><circle cx="45.5" cy="80.7" r="0.71"/><circle cx="48.3" cy="79.2" r="0.73"/><circle cx="40.9" cy="86.3" r="0.86"/><circle cx="57.4" cy="78.2" r="0.51"/><circle cx="41.5" cy="81.5" r="0.97"/><circle cx="52.3" cy="87.1" r="0.65"/><circle cx="54.3" cy="86.9" r="0.36"/><circle cx="46.3" cy="77.4" r="1.02"/><circle cx="55.1" cy="91.8" r="0.83"/><circle cx="56.3" cy="92.3" r="1.07"/><circle cx="52.3" cy="94.5" r="0.62"/><circle cx="40.6" cy="85.8" r="0.97"/><circle cx="53.7" cy="90.1" r="0.71"/><circle cx="48.5" cy="88.2" r="0.55"/><circle cx="50.3" cy="84.1" r="0.74"/><circle cx="49.7" cy="85.3" r="0.57"/><circle cx="45.7" cy="80.3" r="0.35"/><circle cx="59.1" cy="84.2" r="1.08"/><circle cx="54.1" cy="87.8" r="0.33"/><circle cx="51.3" cy="80.5" r="0.40"/><circle cx="42.1" cy="89.4" r="0.96"/><circle cx="50.3" cy="88.2" r="1.04"/><circle cx="43.2" cy="81.5" r="0.37"/><circle cx="58.0" cy="87.8" r="0.64"/><circle cx="59.1" cy="89.2" r="0.81"/><circle cx="51.2" cy="82.9" r="0.98"/><circle cx="58.9" cy="88.7" r="0.66"/><circle cx="46.8" cy="90.9" r="1.04"/></g><g fill="#000" opacity="0.75"><circle cx="84.1" cy="87.3" r="0.62"/><circle cx="84.7" cy="87.1" r="0.40"/><circle cx="88.5" cy="86.0" r="0.49"/><circle cx="81.3" cy="91.4" r="0.47"/><circle cx="80.6" cy="85.0" r="0.51"/><circle cx="89.3" cy="85.4" r="0.31"/><circle cx="83.7" cy="79.4" r="0.41"/><circle cx="74.1" cy="86.2" r="0.36"/><circle cx="87.3" cy="80.6" r="0.60"/><circle cx="87.7" cy="81.1" r="0.60"/><circle cx="80.3" cy="77.7" r="0.51"/><circle cx="88.9" cy="79.4" r="0.68"/><circle cx="79.7" cy="87.4" r="0.33"/><circle cx="86.0" cy="86.2" r="0.74"/><circle cx="84.4" cy="87.7" r="0.35"/><circle cx="90.0" cy="78.8" r="0.70"/><circle cx="83.6" cy="88.3" r="0.48"/><circle cx="81.0" cy="85.7" r="0.57"/><circle cx="83.6" cy="92.8" r="0.88"/><circle cx="80.0" cy="84.0" r="0.88"/><circle cx="82.3" cy="89.0" r="0.30"/><circle cx="79.3" cy="88.5" r="0.60"/><circle cx="86.7" cy="90.1" r="0.30"/><circle cx="84.3" cy="86.9" r="0.54"/><circle cx="85.6" cy="85.2" r="0.48"/><circle cx="85.4" cy="90.8" r="0.62"/><circle cx="84.5" cy="78.8" r="0.73"/><circle cx="89.0" cy="81.9" r="0.50"/><circle cx="88.0" cy="84.8" r="0.73"/><circle cx="83.5" cy="84.0" r="0.80"/><circle cx="91.0" cy="81.2" r="0.74"/><circle cx="85.8" cy="82.7" r="0.61"/><circle cx="74.6" cy="84.8" r="0.78"/><circle cx="88.2" cy="79.9" r="0.84"/><circle cx="80.9" cy="79.1" r="0.44"/><circle cx="87.7" cy="85.5" r="0.52"/><circle cx="92.3" cy="89.4" r="0.64"/><circle cx="78.7" cy="80.7" r="0.71"/><circle cx="84.1" cy="85.0" r="0.78"/><circle cx="84.4" cy="79.7" r="0.62"/><circle cx="83.3" cy="83.7" r="0.74"/><circle cx="84.5" cy="86.7" r="0.46"/><circle cx="83.9" cy="81.9" r="0.74"/><circle cx="91.6" cy="84.2" r="0.53"/><circle cx="75.8" cy="85.8" r="0.76"/><circle cx="78.2" cy="80.9" r="0.35"/><circle cx="87.4" cy="87.8" r="0.75"/><circle cx="81.9" cy="90.4" r="0.31"/><circle cx="89.1" cy="86.4" r="0.70"/><circle cx="81.4" cy="79.1" r="0.47"/><circle cx="77.6" cy="84.5" r="0.58"/><circle cx="92.1" cy="90.1" r="0.42"/><circle cx="95.0" cy="83.9" r="0.31"/><circle cx="75.1" cy="86.8" r="0.88"/><circle cx="79.8" cy="86.1" r="0.43"/><circle cx="88.6" cy="83.9" r="0.65"/><circle cx="89.2" cy="89.2" r="0.87"/><circle cx="91.1" cy="90.3" r="0.61"/><circle cx="91.2" cy="80.8" r="0.44"/><circle cx="90.2" cy="81.9" r="0.31"/><circle cx="91.7" cy="85.1" r="0.57"/><circle cx="83.4" cy="87.3" r="0.51"/><circle cx="80.5" cy="91.6" r="0.30"/><circle cx="84.5" cy="77.8" r="0.37"/><circle cx="92.5" cy="82.1" r="0.84"/><circle cx="83.0" cy="89.3" r="0.54"/><circle cx="92.5" cy="85.0" r="0.52"/><circle cx="79.9" cy="86.6" r="0.33"/><circle cx="92.4" cy="89.3" r="0.47"/><circle cx="88.9" cy="83.6" r="0.46"/><circle cx="80.5" cy="84.8" r="0.52"/><circle cx="94.3" cy="83.0" r="0.79"/><circle cx="77.4" cy="79.4" r="0.86"/><circle cx="75.9" cy="83.0" r="0.33"/><circle cx="83.7" cy="80.1" r="0.75"/><circle cx="81.3" cy="82.0" r="0.33"/><circle cx="87.4" cy="84.0" r="0.58"/><circle cx="81.5" cy="88.2" r="0.74"/><circle cx="89.3" cy="84.5" r="0.69"/><circle cx="82.1" cy="90.3" r="0.54"/><circle cx="86.3" cy="87.3" r="0.42"/><circle cx="90.5" cy="82.1" r="0.43"/><circle cx="93.6" cy="80.6" r="0.57"/><circle cx="87.1" cy="87.3" r="0.35"/><circle cx="83.1" cy="86.6" r="0.44"/><circle cx="84.1" cy="90.7" r="0.83"/><circle cx="84.5" cy="80.3" r="0.55"/><circle cx="78.4" cy="84.3" r="0.50"/><circle cx="89.2" cy="86.4" r="0.88"/><circle cx="89.6" cy="88.8" r="0.68"/><circle cx="87.4" cy="82.6" r="0.46"/><circle cx="84.6" cy="89.6" r="0.57"/><circle cx="94.1" cy="82.9" r="0.82"/><circle cx="85.9" cy="85.1" r="0.73"/><circle cx="90.1" cy="81.9" r="0.65"/><circle cx="90.8" cy="85.0" r="0.86"/><circle cx="89.1" cy="78.5" r="0.88"/><circle cx="84.5" cy="87.1" r="0.39"/><circle cx="75.8" cy="84.1" r="0.86"/><circle cx="83.0" cy="78.9" r="0.76"/><circle cx="77.1" cy="86.5" r="0.32"/><circle cx="85.4" cy="81.7" r="0.85"/><circle cx="81.2" cy="81.9" r="0.38"/><circle cx="84.4" cy="91.1" r="0.72"/><circle cx="86.2" cy="86.1" r="0.61"/><circle cx="79.1" cy="82.7" r="0.43"/><circle cx="83.9" cy="84.7" r="0.48"/><circle cx="74.1" cy="86.9" r="0.69"/><circle cx="89.7" cy="81.6" r="0.44"/><circle cx="84.7" cy="92.8" r="0.72"/></g><g fill="#000" opacity="0.75"><circle cx="118.2" cy="86.1" r="0.60"/><circle cx="116.3" cy="78.7" r="0.45"/><circle cx="114.7" cy="75.1" r="0.44"/><circle cx="122.6" cy="86.3" r="0.55"/><circle cx="117.3" cy="80.9" r="0.78"/><circle cx="118.1" cy="77.1" r="0.42"/><circle cx="122.4" cy="83.9" r="0.79"/><circle cx="118.9" cy="89.8" r="0.76"/><circle cx="116.3" cy="96.2" r="0.60"/><circle cx="119.7" cy="89.5" r="0.55"/><circle cx="114.6" cy="75.0" r="0.39"/><circle cx="116.0" cy="87.9" r="0.88"/><circle cx="119.4" cy="86.6" r="0.34"/><circle cx="112.6" cy="92.0" r="0.83"/><circle cx="117.6" cy="73.1" r="0.86"/><circle cx="117.1" cy="88.8" r="0.86"/><circle cx="118.5" cy="83.5" r="0.70"/><circle cx="115.3" cy="89.6" r="0.50"/><circle cx="118.6" cy="85.3" r="0.47"/><circle cx="113.9" cy="94.4" r="0.37"/><circle cx="121.5" cy="84.0" r="0.51"/><circle cx="121.6" cy="75.4" r="0.56"/><circle cx="123.4" cy="87.3" r="0.52"/><circle cx="121.1" cy="82.8" r="0.52"/><circle cx="119.3" cy="84.1" r="0.55"/><circle cx="121.1" cy="75.5" r="0.32"/><circle cx="120.0" cy="85.5" r="0.85"/><circle cx="118.2" cy="95.1" r="0.84"/><circle cx="116.6" cy="89.7" r="0.87"/><circle cx="115.8" cy="81.4" r="0.73"/><circle cx="117.0" cy="90.1" r="0.30"/><circle cx="118.8" cy="73.6" r="0.68"/><circle cx="119.3" cy="84.6" r="0.44"/><circle cx="110.8" cy="86.8" r="0.87"/><circle cx="115.9" cy="88.4" r="0.56"/><circle cx="110.9" cy="85.5" r="0.41"/><circle cx="120.7" cy="75.5" r="0.79"/><circle cx="119.3" cy="76.2" r="0.50"/><circle cx="116.7" cy="90.9" r="0.77"/><circle cx="121.2" cy="87.2" r="0.75"/><circle cx="118.5" cy="87.3" r="0.32"/><circle cx="114.6" cy="83.0" r="0.89"/><circle cx="124.4" cy="77.0" r="0.46"/><circle cx="120.2" cy="86.5" r="0.60"/><circle cx="117.3" cy="77.8" r="0.44"/><circle cx="113.3" cy="89.5" r="0.70"/><circle cx="118.4" cy="74.1" r="0.70"/><circle cx="123.7" cy="92.5" r="0.48"/><circle cx="114.5" cy="82.3" r="0.74"/><circle cx="119.6" cy="89.9" r="0.45"/><circle cx="122.7" cy="94.2" r="0.65"/><circle cx="116.4" cy="91.1" r="0.90"/><circle cx="115.2" cy="84.8" r="0.79"/><circle cx="114.0" cy="75.2" r="0.36"/><circle cx="111.5" cy="86.7" r="0.80"/><circle cx="119.5" cy="84.1" r="0.48"/><circle cx="120.7" cy="88.0" r="0.88"/><circle cx="111.9" cy="79.3" r="0.52"/><circle cx="121.8" cy="79.5" r="0.46"/><circle cx="119.8" cy="73.6" r="0.36"/><circle cx="113.6" cy="79.9" r="0.43"/><circle cx="116.8" cy="87.7" r="0.42"/><circle cx="118.3" cy="93.8" r="0.69"/><circle cx="118.7" cy="85.8" r="0.50"/><circle cx="117.2" cy="81.1" r="0.49"/><circle cx="120.5" cy="95.0" r="0.63"/><circle cx="120.4" cy="86.2" r="0.54"/><circle cx="112.7" cy="82.2" r="0.35"/><circle cx="121.8" cy="93.3" r="0.55"/><circle cx="117.7" cy="90.8" r="0.87"/><circle cx="116.3" cy="92.9" r="0.51"/><circle cx="112.2" cy="90.5" r="0.90"/><circle cx="116.5" cy="88.4" r="0.74"/><circle cx="118.6" cy="85.5" r="0.84"/><circle cx="112.2" cy="89.9" r="0.54"/><circle cx="122.2" cy="79.9" r="0.40"/><circle cx="124.1" cy="85.8" r="0.68"/><circle cx="120.1" cy="83.5" r="0.67"/><circle cx="114.8" cy="90.8" r="0.39"/><circle cx="117.4" cy="92.9" r="0.86"/><circle cx="122.5" cy="89.9" r="0.78"/><circle cx="121.5" cy="84.1" r="0.38"/><circle cx="125.9" cy="80.9" r="0.59"/><circle cx="125.7" cy="88.8" r="0.53"/><circle cx="123.5" cy="79.9" r="0.79"/><circle cx="122.2" cy="93.8" r="0.43"/><circle cx="112.5" cy="91.1" r="0.80"/><circle cx="119.8" cy="89.4" r="0.54"/><circle cx="114.0" cy="84.2" r="0.37"/><circle cx="118.6" cy="94.9" r="0.84"/><circle cx="124.0" cy="87.2" r="0.75"/><circle cx="125.5" cy="87.6" r="0.37"/><circle cx="114.0" cy="80.1" r="0.68"/><circle cx="116.9" cy="91.7" r="0.65"/><circle cx="112.9" cy="89.2" r="0.57"/><circle cx="117.7" cy="85.5" r="0.67"/><circle cx="115.1" cy="85.3" r="0.76"/><circle cx="119.4" cy="77.6" r="0.41"/><circle cx="116.4" cy="85.5" r="0.38"/><circle cx="116.8" cy="86.2" r="0.57"/><circle cx="117.3" cy="84.9" r="0.68"/><circle cx="124.3" cy="89.9" r="0.77"/><circle cx="117.1" cy="84.8" r="0.60"/><circle cx="112.9" cy="93.1" r="0.38"/><circle cx="123.5" cy="75.6" r="0.74"/><circle cx="119.7" cy="80.9" r="0.89"/><circle cx="110.7" cy="85.6" r="0.85"/><circle cx="122.0" cy="94.0" r="0.86"/><circle cx="122.4" cy="87.6" r="0.75"/><circle cx="122.6" cy="94.4" r="0.46"/></g><g filter="url(#bl05)"><g fill="#000" opacity="0.55"><circle cx="153.6" cy="82.4" r="0.80"/><circle cx="155.6" cy="83.3" r="0.56"/><circle cx="148.0" cy="84.8" r="0.34"/><circle cx="153.7" cy="87.7" r="1.24"/><circle cx="148.9" cy="77.4" r="0.47"/><circle cx="153.0" cy="82.6" r="0.83"/><circle cx="149.3" cy="81.3" r="1.17"/><circle cx="146.4" cy="82.8" r="1.18"/><circle cx="159.6" cy="90.5" r="0.93"/><circle cx="146.3" cy="89.8" r="0.56"/><circle cx="159.0" cy="84.6" r="0.66"/><circle cx="153.0" cy="79.5" r="0.48"/><circle cx="152.4" cy="83.5" r="1.12"/><circle cx="152.3" cy="91.9" r="1.28"/><circle cx="146.5" cy="81.4" r="0.61"/><circle cx="153.7" cy="85.0" r="0.45"/><circle cx="148.4" cy="81.4" r="0.81"/><circle cx="154.6" cy="83.4" r="0.53"/><circle cx="152.0" cy="84.2" r="0.30"/><circle cx="151.1" cy="86.9" r="0.66"/><circle cx="153.5" cy="91.4" r="0.89"/><circle cx="154.4" cy="91.5" r="0.77"/><circle cx="158.2" cy="91.5" r="0.54"/><circle cx="153.8" cy="86.8" r="0.94"/><circle cx="157.9" cy="79.4" r="0.70"/><circle cx="152.4" cy="85.6" r="0.94"/><circle cx="148.1" cy="83.2" r="0.95"/><circle cx="144.4" cy="88.0" r="1.03"/><circle cx="152.6" cy="93.5" r="0.34"/><circle cx="147.4" cy="84.0" r="0.54"/><circle cx="159.7" cy="87.8" r="0.31"/><circle cx="144.3" cy="82.3" r="0.44"/><circle cx="154.6" cy="91.3" r="0.81"/><circle cx="147.5" cy="78.8" r="0.47"/><circle cx="150.9" cy="89.1" r="0.35"/><circle cx="158.5" cy="80.0" r="1.02"/><circle cx="160.6" cy="85.3" r="1.05"/><circle cx="145.2" cy="86.6" r="0.75"/><circle cx="152.9" cy="87.3" r="0.53"/><circle cx="157.0" cy="86.1" r="1.05"/><circle cx="149.7" cy="77.3" r="1.01"/><circle cx="151.9" cy="91.3" r="0.74"/><circle cx="154.0" cy="79.1" r="0.57"/><circle cx="147.0" cy="78.1" r="0.52"/><circle cx="153.0" cy="84.5" r="0.56"/><circle cx="153.2" cy="92.5" r="1.24"/><circle cx="152.4" cy="80.4" r="1.18"/><circle cx="150.7" cy="88.4" r="1.21"/><circle cx="147.6" cy="79.7" r="0.97"/><circle cx="158.2" cy="84.2" r="1.14"/><circle cx="149.8" cy="77.2" r="0.74"/><circle cx="151.5" cy="78.7" r="0.61"/><circle cx="154.1" cy="91.6" r="0.38"/><circle cx="154.9" cy="83.5" r="0.33"/><circle cx="159.2" cy="90.3" r="0.64"/><circle cx="153.2" cy="85.8" r="0.34"/><circle cx="150.1" cy="78.6" r="1.00"/><circle cx="152.4" cy="83.2" r="0.89"/><circle cx="147.3" cy="91.0" r="1.12"/><circle cx="153.9" cy="83.9" r="1.17"/><circle cx="160.0" cy="80.5" r="0.41"/><circle cx="153.2" cy="87.3" r="0.33"/><circle cx="157.1" cy="78.5" r="0.93"/><circle cx="155.6" cy="78.9" r="0.59"/><circle cx="154.3" cy="86.3" r="1.06"/><circle cx="153.8" cy="89.4" r="0.72"/><circle cx="156.4" cy="85.5" r="0.58"/><circle cx="151.4" cy="80.2" r="0.62"/><circle cx="158.3" cy="83.7" r="1.15"/><circle cx="151.7" cy="84.2" r="0.71"/><circle cx="145.4" cy="88.0" r="0.65"/><circle cx="150.8" cy="79.0" r="0.52"/><circle cx="153.9" cy="83.4" r="1.12"/><circle cx="152.6" cy="85.1" r="0.50"/><circle cx="153.2" cy="76.1" r="0.30"/><circle cx="146.6" cy="85.3" r="1.10"/><circle cx="154.9" cy="90.4" r="0.65"/><circle cx="154.5" cy="81.5" r="1.24"/><circle cx="151.7" cy="88.5" r="1.00"/><circle cx="150.1" cy="85.0" r="0.94"/><circle cx="159.3" cy="88.8" r="1.00"/><circle cx="154.1" cy="78.4" r="0.66"/><circle cx="148.3" cy="88.0" r="1.19"/><circle cx="159.7" cy="89.3" r="0.33"/><circle cx="153.6" cy="88.9" r="1.20"/><circle cx="147.5" cy="85.0" r="1.18"/><circle cx="153.1" cy="90.6" r="0.83"/><circle cx="152.7" cy="77.4" r="0.95"/><circle cx="149.8" cy="88.7" r="0.46"/><circle cx="156.4" cy="79.1" r="1.04"/><circle cx="155.2" cy="89.8" r="1.07"/><circle cx="150.2" cy="83.8" r="0.76"/><circle cx="155.4" cy="82.5" r="0.49"/><circle cx="150.2" cy="91.9" r="1.14"/><circle cx="154.2" cy="87.4" r="0.55"/><circle cx="149.7" cy="90.4" r="0.46"/><circle cx="150.9" cy="87.9" r="1.28"/><circle cx="152.2" cy="82.7" r="1.26"/><circle cx="156.6" cy="88.0" r="1.28"/><circle cx="154.6" cy="77.8" r="0.73"/><circle cx="154.8" cy="91.5" r="0.41"/><circle cx="153.9" cy="89.9" r="0.33"/><circle cx="146.2" cy="89.6" r="0.99"/><circle cx="145.7" cy="85.0" r="0.76"/><circle cx="156.7" cy="90.2" r="0.70"/><circle cx="152.0" cy="76.5" r="0.73"/><circle cx="145.7" cy="81.6" r="0.72"/><circle cx="153.5" cy="92.3" r="1.18"/><circle cx="153.6" cy="77.8" r="1.15"/><circle cx="149.5" cy="78.8" r="0.75"/></g></g><circle cx="16.5" cy="119.0" r="9" fill="#333" filter="url(#bl2)" opacity="0.7"/><g fill="#000" opacity="0.8"><circle cx="12.7" cy="128.1" r="0.38"/><circle cx="6.7" cy="124.4" r="0.87"/><circle cx="12.6" cy="114.9" r="0.64"/><circle cx="7.1" cy="121.7" r="0.63"/><circle cx="10.9" cy="107.9" r="0.45"/><circle cx="10.2" cy="109.8" r="0.61"/><circle cx="3.7" cy="119.8" r="0.33"/><circle cx="12.3" cy="117.8" r="0.93"/><circle cx="24.7" cy="115.8" r="0.38"/><circle cx="8.5" cy="114.9" r="0.87"/><circle cx="6.6" cy="118.2" r="0.96"/><circle cx="9.0" cy="118.0" r="1.06"/><circle cx="19.1" cy="129.0" r="0.61"/><circle cx="16.8" cy="115.3" r="1.09"/><circle cx="15.1" cy="120.8" r="0.52"/><circle cx="15.7" cy="119.6" r="0.63"/><circle cx="7.3" cy="124.0" r="0.58"/><circle cx="16.0" cy="124.3" r="0.89"/><circle cx="24.7" cy="115.7" r="0.48"/><circle cx="18.9" cy="112.0" r="0.47"/><circle cx="24.2" cy="127.1" r="0.95"/><circle cx="11.0" cy="112.8" r="0.75"/><circle cx="18.4" cy="131.6" r="0.58"/><circle cx="9.1" cy="110.2" r="0.95"/><circle cx="10.4" cy="120.2" r="0.74"/><circle cx="24.7" cy="127.3" r="0.58"/><circle cx="20.0" cy="114.2" r="0.60"/><circle cx="16.3" cy="126.8" r="0.45"/><circle cx="27.2" cy="119.2" r="0.52"/><circle cx="16.7" cy="125.3" r="0.68"/><circle cx="7.6" cy="123.3" r="0.83"/><circle cx="8.4" cy="128.5" r="0.98"/><circle cx="27.4" cy="123.1" r="1.02"/><circle cx="17.3" cy="115.1" r="0.97"/><circle cx="15.8" cy="118.2" r="0.31"/><circle cx="26.1" cy="116.0" r="0.50"/><circle cx="19.7" cy="121.4" r="0.49"/><circle cx="17.6" cy="112.2" r="0.42"/><circle cx="25.8" cy="112.6" r="0.43"/><circle cx="24.0" cy="112.9" r="0.93"/><circle cx="10.5" cy="108.4" r="0.93"/><circle cx="19.1" cy="114.8" r="0.85"/><circle cx="5.8" cy="116.9" r="0.65"/><circle cx="23.3" cy="112.9" r="0.51"/><circle cx="16.9" cy="123.0" r="0.69"/><circle cx="24.2" cy="122.0" r="0.42"/><circle cx="8.0" cy="119.5" r="0.73"/><circle cx="16.9" cy="118.5" r="0.97"/><circle cx="7.5" cy="120.8" r="0.83"/><circle cx="20.4" cy="112.9" r="0.64"/><circle cx="19.2" cy="118.3" r="0.81"/><circle cx="15.5" cy="117.8" r="0.79"/><circle cx="11.4" cy="107.6" r="0.56"/><circle cx="25.1" cy="118.0" r="0.69"/><circle cx="17.9" cy="118.0" r="0.87"/><circle cx="11.7" cy="114.2" r="0.99"/><circle cx="11.0" cy="125.2" r="0.72"/><circle cx="17.2" cy="113.9" r="0.65"/><circle cx="8.4" cy="123.3" r="0.96"/><circle cx="13.4" cy="130.2" r="0.62"/><circle cx="10.6" cy="118.9" r="0.71"/><circle cx="26.5" cy="117.4" r="0.93"/><circle cx="13.3" cy="124.7" r="0.54"/><circle cx="8.0" cy="113.9" r="0.93"/><circle cx="26.9" cy="121.7" r="1.01"/><circle cx="14.4" cy="118.4" r="0.54"/><circle cx="21.3" cy="119.2" r="1.04"/><circle cx="8.7" cy="112.6" r="0.93"/><circle cx="24.7" cy="113.8" r="0.79"/><circle cx="9.2" cy="111.5" r="0.78"/><circle cx="14.3" cy="114.3" r="0.83"/><circle cx="5.8" cy="121.9" r="0.38"/><circle cx="17.3" cy="120.6" r="0.92"/><circle cx="25.2" cy="113.8" r="0.60"/><circle cx="21.5" cy="108.9" r="0.75"/><circle cx="16.2" cy="125.3" r="0.64"/><circle cx="13.2" cy="126.1" r="0.81"/><circle cx="18.6" cy="118.1" r="0.75"/><circle cx="20.0" cy="119.9" r="0.95"/><circle cx="5.5" cy="113.4" r="0.66"/><circle cx="23.8" cy="119.7" r="0.77"/><circle cx="28.4" cy="114.1" r="0.68"/><circle cx="13.7" cy="120.7" r="0.82"/><circle cx="17.5" cy="123.1" r="0.31"/><circle cx="26.8" cy="119.3" r="0.40"/><circle cx="19.5" cy="118.4" r="1.00"/><circle cx="17.3" cy="119.8" r="0.88"/><circle cx="17.0" cy="129.8" r="0.45"/><circle cx="27.1" cy="122.5" r="0.87"/><circle cx="23.1" cy="110.5" r="0.37"/><circle cx="9.2" cy="111.4" r="0.67"/><circle cx="21.7" cy="116.6" r="1.07"/><circle cx="16.3" cy="118.1" r="0.31"/><circle cx="9.8" cy="109.7" r="0.36"/><circle cx="12.5" cy="129.0" r="0.43"/><circle cx="21.9" cy="112.5" r="0.35"/><circle cx="10.2" cy="125.9" r="0.65"/><circle cx="14.7" cy="115.3" r="0.94"/><circle cx="10.0" cy="126.6" r="0.80"/><circle cx="10.1" cy="122.6" r="0.93"/><circle cx="27.1" cy="115.2" r="0.75"/><circle cx="15.9" cy="121.3" r="1.08"/><circle cx="13.1" cy="107.9" r="0.57"/><circle cx="6.4" cy="111.1" r="0.97"/><circle cx="11.3" cy="115.2" r="0.64"/><circle cx="22.0" cy="114.3" r="0.85"/><circle cx="6.7" cy="111.7" r="0.95"/><circle cx="16.4" cy="119.3" r="0.51"/><circle cx="8.2" cy="123.4" r="0.95"/><circle cx="18.0" cy="117.7" r="0.97"/><circle cx="21.0" cy="108.0" r="0.76"/><circle cx="14.7" cy="130.7" r="0.95"/><circle cx="11.6" cy="107.7" r="0.58"/><circle cx="24.3" cy="123.6" r="0.94"/><circle cx="19.9" cy="129.4" r="1.05"/><circle cx="17.5" cy="128.6" r="0.84"/><circle cx="11.6" cy="120.1" r="0.50"/><circle cx="16.6" cy="107.7" r="0.67"/><circle cx="26.2" cy="125.0" r="0.92"/><circle cx="17.5" cy="128.3" r="1.02"/><circle cx="23.1" cy="113.2" r="0.68"/><circle cx="12.4" cy="116.5" r="0.45"/><circle cx="20.9" cy="128.5" r="0.59"/><circle cx="9.6" cy="116.0" r="0.71"/><circle cx="17.7" cy="120.6" r="1.10"/><circle cx="14.1" cy="121.4" r="0.81"/><circle cx="17.5" cy="114.9" r="0.78"/><circle cx="11.6" cy="126.3" r="0.32"/><circle cx="29.1" cy="121.7" r="0.99"/><circle cx="7.3" cy="119.8" r="0.51"/><circle cx="17.9" cy="111.3" r="1.06"/><circle cx="17.7" cy="107.5" r="1.07"/><circle cx="16.5" cy="120.8" r="0.46"/><circle cx="17.7" cy="121.7" r="0.34"/><circle cx="5.3" cy="114.8" r="0.67"/><circle cx="28.1" cy="115.0" r="0.35"/><circle cx="10.4" cy="114.7" r="0.40"/><circle cx="22.1" cy="117.5" r="0.75"/><circle cx="8.5" cy="109.2" r="0.84"/><circle cx="10.2" cy="124.0" r="0.43"/><circle cx="29.1" cy="116.2" r="0.48"/><circle cx="22.1" cy="120.4" r="0.58"/><circle cx="26.5" cy="112.0" r="0.97"/><circle cx="27.3" cy="122.3" r="0.87"/><circle cx="8.7" cy="108.7" r="0.34"/><circle cx="23.2" cy="127.7" r="1.05"/><circle cx="13.7" cy="113.4" r="0.77"/><circle cx="16.7" cy="115.6" r="0.56"/><circle cx="16.3" cy="122.7" r="0.69"/><circle cx="19.2" cy="123.8" r="0.41"/><circle cx="16.1" cy="118.2" r="0.87"/><circle cx="17.1" cy="120.7" r="1.04"/><circle cx="18.8" cy="131.3" r="0.99"/><circle cx="19.6" cy="116.4" r="0.66"/><circle cx="26.7" cy="126.1" r="0.97"/><circle cx="10.9" cy="113.2" r="0.57"/><circle cx="20.2" cy="111.5" r="0.80"/><circle cx="19.8" cy="123.1" r="0.35"/><circle cx="14.4" cy="110.1" r="0.42"/><circle cx="20.5" cy="114.7" r="0.63"/></g><path d="M41.5 105.0 L45.5 112.0" stroke="#888" stroke-width="2"/><circle cx="84.5" cy="107.0" r="1.3" fill="#333"/><circle cx="75.5" cy="120.0" r="1.2" fill="#333"/><circle cx="86.5" cy="116.0" r="1" fill="#333"/><circle cx="96.5" cy="118.0" r="1.3" fill="#333"/><circle cx="79.5" cy="127.0" r="1.5" fill="#333"/><circle cx="88.5" cy="130.0" r="1.3" fill="#333"/><circle cx="92.5" cy="124.0" r="1" fill="#333"/><circle cx="72.5" cy="129.0" r="0.8" fill="#333"/><circle cx="109.5" cy="113.0" r="1.6" fill="#222"/><circle cx="114.2" cy="110.4" r="1.3" fill="#222"/><circle cx="113.8" cy="129.5" r="0.9" fill="#222"/><circle cx="130.9" cy="107.5" r="1.7" fill="#222"/><circle cx="122.9" cy="111.5" r="1.3" fill="#222"/><circle cx="112.9" cy="112.7" r="1.0" fill="#222"/><circle cx="115.0" cy="131.8" r="1.8" fill="#222"/><circle cx="129.6" cy="108.5" r="1.1" fill="#222"/><circle cx="128.8" cy="107.5" r="1.5" fill="#222"/><circle cx="113.1" cy="131.4" r="0.8" fill="#222"/><circle cx="126.5" cy="114.9" r="0.9" fill="#222"/><circle cx="105.5" cy="127.6" r="1.3" fill="#222"/><circle cx="110.3" cy="117.3" r="1.7" fill="#222"/><circle cx="111.2" cy="120.9" r="0.9" fill="#222"/><circle cx="110.2" cy="126.0" r="1.5" fill="#222"/><circle cx="110.6" cy="108.1" r="0.9" fill="#222"/><circle cx="121.3" cy="118.9" r="1.1" fill="#222"/><circle cx="110.9" cy="121.9" r="1.5" fill="#222"/><circle cx="161.2" cy="121.2" r="0.55" fill="#111"/><circle cx="144.2" cy="107.7" r="0.55" fill="#111"/><circle cx="159.0" cy="116.6" r="0.55" fill="#111"/><circle cx="158.7" cy="107.4" r="0.55" fill="#111"/><circle cx="161.2" cy="114.7" r="0.55" fill="#111"/><circle cx="162.1" cy="128.5" r="0.55" fill="#111"/><circle cx="152.3" cy="106.4" r="0.55" fill="#111"/><circle cx="164.0" cy="118.4" r="0.55" fill="#111"/><circle cx="162.9" cy="112.9" r="0.55" fill="#111"/><circle cx="143.7" cy="127.6" r="0.55" fill="#111"/><circle cx="148.8" cy="110.3" r="0.55" fill="#111"/><circle cx="148.9" cy="121.5" r="0.55" fill="#111"/><circle cx="138.6" cy="119.5" r="0.55" fill="#111"/><circle cx="151.0" cy="119.4" r="0.55" fill="#111"/><circle cx="141.9" cy="124.6" r="0.55" fill="#111"/><circle cx="161.4" cy="128.5" r="0.55" fill="#111"/><circle cx="147.5" cy="124.5" r="0.55" fill="#111"/><circle cx="149.2" cy="125.5" r="0.55" fill="#111"/><circle cx="140.2" cy="128.7" r="0.55" fill="#111"/><circle cx="165.2" cy="118.9" r="0.55" fill="#111"/><circle cx="152.9" cy="119.8" r="0.55" fill="#111"/><circle cx="153.5" cy="106.5" r="0.55" fill="#111"/><circle cx="165.6" cy="111.8" r="0.55" fill="#111"/><circle cx="143.6" cy="108.7" r="0.55" fill="#111"/><circle cx="145.5" cy="127.2" r="0.55" fill="#111"/><circle cx="139.3" cy="108.5" r="0.55" fill="#111"/><circle cx="158.1" cy="111.1" r="0.55" fill="#111"/><circle cx="139.0" cy="121.6" r="0.55" fill="#111"/><circle cx="154.6" cy="119.6" r="0.55" fill="#111"/><circle cx="158.2" cy="108.7" r="0.55" fill="#111"/><g fill="#000" opacity="0.8"><circle cx="23.8" cy="145.2" r="0.34"/><circle cx="22.6" cy="158.9" r="0.75"/><circle cx="15.8" cy="156.6" r="0.67"/><circle cx="22.7" cy="160.2" r="1.07"/><circle cx="22.1" cy="160.4" r="0.97"/><circle cx="22.4" cy="163.0" r="1.14"/><circle cx="10.6" cy="158.0" r="1.06"/><circle cx="9.1" cy="151.8" r="1.15"/><circle cx="17.6" cy="146.3" r="0.52"/><circle cx="12.5" cy="159.8" r="1.18"/><circle cx="20.6" cy="141.4" r="1.03"/><circle cx="17.8" cy="151.2" r="0.77"/><circle cx="28.5" cy="149.7" r="0.52"/><circle cx="7.8" cy="157.6" r="0.63"/><circle cx="13.9" cy="152.5" r="0.69"/><circle cx="15.2" cy="153.0" r="0.43"/><circle cx="27.5" cy="150.9" r="1.14"/><circle cx="8.8" cy="144.5" r="1.10"/><circle cx="17.8" cy="151.9" r="0.88"/><circle cx="15.5" cy="163.2" r="0.55"/><circle cx="4.5" cy="149.7" r="0.86"/><circle cx="16.5" cy="161.8" r="0.69"/><circle cx="22.4" cy="151.1" r="0.57"/><circle cx="14.3" cy="150.1" r="0.83"/><circle cx="24.9" cy="150.6" r="0.54"/><circle cx="7.8" cy="154.9" r="0.43"/><circle cx="19.2" cy="155.7" r="0.56"/><circle cx="11.4" cy="156.4" r="0.52"/><circle cx="24.2" cy="157.7" r="1.06"/><circle cx="9.3" cy="147.1" r="0.89"/><circle cx="19.7" cy="163.1" r="0.71"/><circle cx="7.2" cy="150.1" r="0.72"/><circle cx="14.4" cy="158.2" r="0.50"/><circle cx="9.2" cy="152.4" r="0.83"/><circle cx="23.4" cy="153.5" r="1.08"/><circle cx="17.2" cy="162.1" r="0.74"/><circle cx="13.7" cy="165.6" r="0.57"/><circle cx="17.1" cy="148.7" r="0.36"/><circle cx="22.0" cy="147.3" r="0.36"/><circle cx="10.4" cy="158.1" r="0.96"/><circle cx="20.6" cy="156.4" r="1.16"/><circle cx="16.2" cy="148.8" r="0.60"/><circle cx="10.3" cy="161.2" r="0.85"/><circle cx="23.3" cy="143.7" r="0.77"/><circle cx="15.7" cy="142.1" r="0.98"/><circle cx="5.4" cy="154.7" r="0.94"/><circle cx="19.7" cy="151.1" r="1.08"/><circle cx="27.6" cy="153.3" r="0.83"/><circle cx="3.8" cy="153.2" r="0.81"/><circle cx="6.7" cy="158.5" r="1.09"/><circle cx="10.8" cy="148.5" r="0.71"/><circle cx="6.2" cy="155.8" r="0.56"/><circle cx="9.4" cy="158.8" r="0.65"/><circle cx="11.6" cy="163.1" r="1.06"/><circle cx="8.5" cy="153.0" r="0.47"/><circle cx="15.1" cy="156.8" r="0.82"/><circle cx="13.9" cy="151.5" r="1.13"/><circle cx="11.2" cy="163.5" r="1.05"/><circle cx="21.3" cy="151.7" r="0.68"/><circle cx="17.2" cy="152.5" r="0.34"/><circle cx="8.7" cy="149.6" r="1.13"/><circle cx="17.8" cy="144.1" r="1.20"/><circle cx="7.8" cy="152.0" r="0.92"/><circle cx="11.1" cy="157.5" r="0.84"/><circle cx="9.0" cy="163.1" r="0.91"/><circle cx="13.3" cy="152.5" r="0.64"/><circle cx="9.0" cy="158.4" r="0.82"/><circle cx="25.8" cy="144.3" r="0.74"/><circle cx="7.4" cy="156.6" r="1.20"/><circle cx="11.6" cy="160.4" r="1.03"/><circle cx="19.6" cy="158.7" r="1.18"/><circle cx="20.5" cy="145.3" r="0.40"/><circle cx="24.7" cy="146.6" r="1.04"/><circle cx="28.6" cy="152.3" r="0.68"/><circle cx="19.9" cy="158.1" r="0.76"/><circle cx="11.7" cy="152.9" r="0.46"/><circle cx="9.9" cy="146.0" r="0.62"/><circle cx="26.4" cy="152.6" r="0.34"/><circle cx="6.9" cy="159.0" r="0.58"/><circle cx="16.3" cy="152.6" r="0.57"/><circle cx="21.7" cy="145.1" r="0.90"/><circle cx="19.3" cy="161.1" r="0.80"/><circle cx="15.5" cy="163.0" r="0.78"/><circle cx="25.8" cy="152.8" r="0.67"/><circle cx="19.6" cy="156.0" r="0.98"/><circle cx="19.1" cy="155.0" r="0.45"/><circle cx="5.0" cy="151.4" r="0.85"/><circle cx="17.4" cy="150.7" r="0.31"/><circle cx="17.3" cy="146.5" r="0.94"/><circle cx="13.8" cy="156.6" r="0.54"/><circle cx="26.4" cy="160.2" r="0.82"/><circle cx="11.8" cy="159.5" r="0.65"/><circle cx="27.9" cy="157.1" r="0.82"/><circle cx="24.2" cy="151.0" r="0.86"/><circle cx="16.5" cy="155.0" r="1.14"/><circle cx="20.5" cy="147.9" r="1.11"/><circle cx="19.1" cy="147.2" r="0.84"/><circle cx="24.8" cy="150.9" r="1.15"/><circle cx="16.8" cy="160.4" r="0.95"/><circle cx="17.6" cy="159.3" r="1.09"/><circle cx="5.2" cy="154.1" r="0.52"/><circle cx="19.7" cy="159.2" r="0.47"/><circle cx="22.6" cy="151.9" r="0.81"/><circle cx="23.2" cy="158.9" r="0.65"/><circle cx="14.4" cy="154.4" r="0.41"/><circle cx="19.7" cy="146.8" r="0.52"/><circle cx="18.7" cy="158.7" r="0.51"/><circle cx="26.4" cy="155.2" r="0.61"/><circle cx="22.4" cy="161.8" r="0.38"/><circle cx="15.1" cy="164.6" r="0.42"/><circle cx="5.6" cy="157.1" r="1.02"/><circle cx="20.3" cy="158.9" r="0.95"/><circle cx="7.4" cy="161.9" r="0.49"/><circle cx="24.7" cy="150.4" r="0.50"/><circle cx="12.8" cy="154.1" r="0.94"/><circle cx="15.7" cy="165.2" r="0.83"/><circle cx="12.7" cy="157.1" r="0.85"/><circle cx="19.3" cy="164.6" r="0.41"/><circle cx="7.5" cy="152.3" r="0.54"/><circle cx="17.5" cy="145.7" r="0.89"/><circle cx="10.6" cy="150.3" r="0.65"/><circle cx="20.4" cy="155.4" r="1.07"/><circle cx="12.1" cy="162.2" r="0.40"/><circle cx="10.0" cy="150.3" r="0.75"/><circle cx="15.8" cy="155.4" r="0.58"/><circle cx="17.1" cy="156.7" r="0.95"/><circle cx="15.0" cy="160.4" r="1.12"/><circle cx="18.4" cy="141.1" r="1.08"/><circle cx="20.6" cy="157.4" r="0.33"/><circle cx="12.1" cy="143.8" r="0.62"/><circle cx="7.9" cy="158.3" r="0.93"/><circle cx="16.6" cy="164.8" r="0.62"/><circle cx="13.3" cy="149.6" r="0.40"/><circle cx="25.7" cy="147.4" r="0.94"/><circle cx="18.3" cy="153.5" r="0.45"/><circle cx="18.5" cy="159.0" r="0.64"/><circle cx="22.8" cy="154.6" r="0.87"/><circle cx="21.5" cy="163.6" r="0.81"/><circle cx="15.3" cy="147.4" r="0.69"/><circle cx="13.7" cy="146.7" r="0.30"/><circle cx="22.1" cy="143.4" r="0.56"/><circle cx="27.9" cy="156.2" r="0.85"/><circle cx="21.8" cy="154.6" r="0.40"/><circle cx="17.8" cy="148.1" r="1.12"/><circle cx="16.5" cy="150.0" r="0.93"/><circle cx="7.9" cy="159.8" r="1.05"/><circle cx="15.9" cy="156.0" r="1.15"/><circle cx="5.4" cy="158.7" r="0.92"/><circle cx="15.7" cy="141.4" r="0.87"/><circle cx="14.3" cy="153.7" r="0.93"/><circle cx="8.7" cy="156.8" r="1.14"/><circle cx="24.2" cy="160.9" r="0.34"/><circle cx="13.2" cy="142.1" r="0.54"/><circle cx="4.3" cy="149.3" r="0.87"/><circle cx="11.1" cy="151.5" r="0.35"/><circle cx="11.7" cy="158.9" r="0.48"/><circle cx="15.0" cy="156.7" r="0.94"/><circle cx="13.9" cy="148.2" r="0.52"/><circle cx="8.5" cy="152.2" r="1.14"/><circle cx="12.7" cy="158.1" r="1.10"/></g><circle cx="50.5" cy="153.0" r="13" fill="#fff" stroke="#000" stroke-width="1.8"/><g fill="none" stroke="#111" stroke-width="1.3"><circle cx="40.0" cy="149.2" r="1.5"/><circle cx="40.0" cy="156.8" r="1.8"/><circle cx="42.1" cy="145.4" r="1.6"/><circle cx="44.2" cy="149.2" r="2.0"/><circle cx="42.1" cy="153.0" r="1.8"/><circle cx="44.2" cy="156.8" r="1.9"/><circle cx="42.1" cy="160.6" r="1.5"/><circle cx="48.4" cy="141.6" r="1.9"/><circle cx="46.3" cy="145.4" r="1.8"/><circle cx="48.4" cy="149.2" r="1.7"/><circle cx="46.3" cy="153.0" r="1.9"/><circle cx="48.4" cy="156.8" r="2.0"/><circle cx="46.3" cy="160.6" r="1.5"/><circle cx="48.4" cy="164.4" r="1.6"/><circle cx="52.6" cy="141.6" r="1.7"/><circle cx="50.5" cy="145.4" r="1.5"/><circle cx="52.6" cy="149.2" r="1.4"/><circle cx="50.5" cy="153.0" r="1.6"/><circle cx="52.6" cy="156.8" r="1.5"/><circle cx="50.5" cy="160.6" r="1.9"/><circle cx="52.6" cy="164.4" r="1.7"/><circle cx="54.7" cy="145.4" r="1.5"/><circle cx="56.8" cy="149.2" r="1.6"/><circle cx="54.7" cy="153.0" r="1.7"/><circle cx="56.8" cy="156.8" r="1.7"/><circle cx="54.7" cy="160.6" r="1.5"/><circle cx="58.9" cy="145.4" r="1.5"/><circle cx="61.0" cy="149.2" r="1.4"/><circle cx="58.9" cy="153.0" r="2.1"/><circle cx="61.0" cy="156.8" r="1.9"/><circle cx="58.9" cy="160.6" r="1.5"/></g><g fill="#000" opacity="1.0"><circle cx="81.9" cy="141.4" r="0.75"/><circle cx="91.1" cy="157.9" r="0.65"/><circle cx="87.8" cy="160.7" r="0.31"/><circle cx="93.2" cy="148.5" r="0.80"/><circle cx="93.7" cy="149.3" r="0.50"/><circle cx="84.6" cy="156.7" r="0.32"/><circle cx="86.3" cy="142.3" r="0.54"/><circle cx="88.4" cy="161.4" r="0.98"/><circle cx="88.5" cy="151.2" r="0.93"/><circle cx="89.8" cy="144.2" r="0.56"/><circle cx="89.1" cy="162.8" r="0.56"/><circle cx="78.3" cy="159.2" r="0.60"/><circle cx="87.2" cy="148.6" r="0.33"/><circle cx="75.5" cy="149.3" r="0.96"/><circle cx="81.1" cy="142.1" r="1.06"/><circle cx="75.9" cy="153.3" r="0.43"/><circle cx="81.6" cy="161.2" r="0.36"/><circle cx="82.8" cy="149.3" r="0.65"/><circle cx="87.5" cy="152.5" r="0.33"/><circle cx="80.0" cy="154.6" r="0.88"/><circle cx="96.2" cy="153.2" r="0.98"/><circle cx="86.3" cy="146.0" r="0.53"/><circle cx="79.9" cy="146.2" r="0.64"/><circle cx="80.3" cy="159.2" r="0.83"/><circle cx="90.1" cy="143.0" r="0.43"/><circle cx="82.2" cy="160.1" r="0.75"/><circle cx="81.7" cy="156.7" r="0.37"/><circle cx="80.9" cy="159.7" r="1.08"/><circle cx="94.5" cy="147.0" r="1.08"/><circle cx="94.0" cy="150.9" r="0.95"/><circle cx="94.1" cy="156.5" r="0.79"/><circle cx="81.8" cy="161.2" r="1.06"/><circle cx="74.6" cy="154.1" r="0.54"/><circle cx="77.8" cy="162.3" r="0.32"/><circle cx="88.4" cy="161.8" r="0.66"/><circle cx="93.2" cy="157.8" r="0.60"/><circle cx="77.8" cy="149.6" r="0.72"/><circle cx="77.6" cy="150.3" r="0.39"/><circle cx="89.6" cy="163.1" r="0.74"/><circle cx="93.6" cy="160.1" r="0.50"/><circle cx="91.9" cy="157.6" r="0.50"/><circle cx="75.4" cy="153.6" r="0.48"/><circle cx="81.3" cy="151.6" r="0.71"/><circle cx="82.1" cy="151.6" r="0.63"/><circle cx="91.6" cy="156.3" r="0.99"/><circle cx="74.4" cy="149.9" r="0.91"/><circle cx="94.2" cy="160.9" r="0.88"/><circle cx="93.8" cy="159.4" r="0.61"/><circle cx="90.5" cy="163.3" r="0.75"/><circle cx="85.1" cy="149.4" r="0.92"/><circle cx="89.6" cy="154.8" r="0.60"/><circle cx="94.0" cy="153.8" r="0.47"/><circle cx="81.2" cy="162.3" r="0.64"/><circle cx="92.0" cy="147.2" r="1.00"/><circle cx="73.1" cy="148.6" r="1.00"/><circle cx="89.9" cy="161.8" r="0.57"/><circle cx="85.4" cy="143.5" r="0.96"/><circle cx="89.7" cy="157.6" r="0.89"/><circle cx="94.6" cy="149.8" r="0.33"/><circle cx="81.9" cy="151.2" r="0.74"/><circle cx="85.6" cy="149.9" r="1.04"/><circle cx="81.9" cy="148.3" r="0.45"/><circle cx="73.5" cy="156.5" r="0.77"/><circle cx="85.5" cy="153.8" r="0.39"/><circle cx="86.0" cy="148.9" r="0.74"/><circle cx="81.9" cy="162.3" r="0.60"/><circle cx="91.9" cy="161.7" r="0.73"/><circle cx="80.3" cy="143.2" r="1.06"/><circle cx="91.3" cy="153.5" r="0.42"/><circle cx="72.5" cy="152.9" r="0.94"/><circle cx="89.1" cy="154.0" r="0.95"/><circle cx="81.3" cy="146.8" r="0.68"/><circle cx="90.9" cy="162.1" r="0.61"/><circle cx="91.3" cy="146.6" r="0.36"/><circle cx="82.0" cy="157.2" r="1.02"/><circle cx="82.8" cy="152.0" r="0.44"/><circle cx="79.2" cy="158.8" r="0.76"/><circle cx="79.2" cy="157.2" r="0.30"/><circle cx="78.6" cy="150.0" r="0.32"/><circle cx="72.0" cy="156.0" r="0.34"/><circle cx="90.7" cy="160.5" r="0.52"/><circle cx="83.2" cy="160.8" r="0.51"/><circle cx="76.5" cy="149.6" r="1.07"/><circle cx="86.2" cy="152.9" r="0.75"/><circle cx="86.1" cy="142.0" r="0.92"/><circle cx="77.9" cy="146.2" r="0.59"/><circle cx="82.3" cy="163.3" r="1.00"/><circle cx="94.1" cy="149.4" r="0.54"/><circle cx="85.4" cy="143.0" r="0.71"/><circle cx="79.9" cy="148.2" r="0.74"/><circle cx="82.5" cy="154.2" r="0.57"/><circle cx="78.8" cy="163.7" r="0.69"/><circle cx="80.8" cy="156.8" r="0.49"/><circle cx="82.2" cy="155.9" r="0.31"/><circle cx="90.1" cy="147.6" r="0.66"/><circle cx="78.7" cy="150.6" r="0.44"/><circle cx="90.3" cy="155.4" r="0.55"/><circle cx="83.2" cy="144.7" r="1.05"/><circle cx="77.8" cy="162.6" r="0.77"/><circle cx="88.6" cy="155.1" r="0.76"/><circle cx="91.5" cy="152.5" r="0.92"/><circle cx="73.7" cy="157.8" r="0.35"/><circle cx="72.4" cy="154.1" r="0.52"/><circle cx="84.4" cy="154.2" r="0.43"/><circle cx="83.3" cy="162.7" r="0.47"/><circle cx="80.5" cy="155.7" r="0.78"/><circle cx="91.1" cy="146.0" r="0.46"/><circle cx="83.2" cy="141.3" r="0.78"/><circle cx="94.6" cy="158.1" r="1.00"/><circle cx="82.4" cy="156.1" r="0.45"/><circle cx="72.8" cy="150.5" r="0.81"/><circle cx="89.0" cy="150.8" r="0.56"/><circle cx="84.5" cy="143.7" r="0.62"/><circle cx="81.6" cy="147.4" r="0.35"/><circle cx="82.8" cy="154.0" r="0.80"/><circle cx="80.2" cy="159.8" r="0.78"/><circle cx="84.1" cy="160.6" r="0.31"/><circle cx="92.7" cy="149.1" r="1.09"/><circle cx="93.6" cy="156.1" r="0.88"/><circle cx="83.0" cy="155.5" r="0.42"/><circle cx="91.4" cy="161.0" r="0.37"/><circle cx="87.5" cy="146.4" r="0.73"/><circle cx="76.7" cy="148.6" r="0.83"/><circle cx="79.1" cy="149.3" r="0.89"/><circle cx="84.0" cy="162.8" r="0.91"/><circle cx="85.5" cy="147.1" r="0.92"/><circle cx="92.5" cy="151.9" r="0.52"/><circle cx="72.1" cy="151.3" r="0.41"/><circle cx="92.8" cy="153.4" r="0.82"/><circle cx="85.6" cy="146.5" r="1.09"/><circle cx="86.0" cy="163.1" r="0.37"/><circle cx="88.3" cy="153.6" r="0.35"/><circle cx="75.4" cy="152.9" r="0.45"/><circle cx="91.1" cy="150.6" r="0.42"/><circle cx="89.3" cy="162.0" r="1.04"/><circle cx="85.3" cy="154.2" r="0.92"/><circle cx="85.1" cy="164.9" r="0.70"/><circle cx="80.0" cy="148.2" r="0.94"/><circle cx="78.1" cy="154.5" r="1.02"/><circle cx="92.9" cy="159.2" r="0.35"/><circle cx="79.9" cy="147.5" r="0.99"/><circle cx="93.1" cy="156.1" r="0.63"/><circle cx="95.5" cy="147.4" r="0.80"/><circle cx="85.4" cy="158.2" r="0.51"/><circle cx="79.6" cy="155.0" r="0.46"/><circle cx="85.1" cy="143.8" r="0.54"/><circle cx="89.7" cy="152.8" r="0.76"/><circle cx="91.1" cy="162.2" r="1.00"/><circle cx="83.3" cy="163.1" r="0.96"/><circle cx="83.1" cy="159.1" r="0.69"/><circle cx="87.9" cy="150.5" r="0.85"/><circle cx="77.9" cy="148.7" r="0.76"/><circle cx="88.3" cy="149.8" r="1.01"/><circle cx="77.3" cy="160.9" r="0.99"/><circle cx="89.4" cy="163.0" r="1.10"/><circle cx="84.1" cy="154.2" r="0.39"/><circle cx="85.3" cy="152.9" r="1.03"/><circle cx="90.8" cy="161.1" r="0.38"/><circle cx="89.6" cy="161.3" r="0.37"/><circle cx="77.9" cy="162.6" r="0.87"/><circle cx="94.0" cy="145.0" r="0.33"/><circle cx="85.6" cy="163.4" r="0.85"/><circle cx="92.9" cy="154.9" r="0.49"/><circle cx="81.5" cy="154.3" r="0.32"/><circle cx="91.0" cy="152.7" r="1.00"/><circle cx="90.6" cy="158.4" r="0.41"/><circle cx="80.3" cy="154.9" r="0.85"/><circle cx="91.0" cy="161.0" r="0.70"/><circle cx="89.8" cy="157.2" r="0.70"/><circle cx="90.5" cy="149.9" r="0.47"/><circle cx="96.3" cy="150.7" r="0.89"/><circle cx="83.8" cy="157.2" r="0.51"/><circle cx="86.3" cy="153.8" r="0.71"/><circle cx="76.8" cy="157.6" r="0.59"/><circle cx="94.9" cy="153.6" r="0.82"/><circle cx="75.8" cy="150.7" r="0.85"/><circle cx="96.4" cy="151.8" r="0.87"/><circle cx="79.2" cy="156.6" r="0.64"/><circle cx="91.7" cy="151.8" r="0.61"/><circle cx="81.1" cy="155.0" r="1.10"/><circle cx="94.1" cy="153.3" r="1.04"/><circle cx="84.2" cy="161.9" r="0.60"/><circle cx="84.8" cy="157.5" r="0.39"/><circle cx="90.7" cy="144.4" r="1.03"/><circle cx="94.4" cy="156.0" r="0.56"/><circle cx="79.0" cy="146.3" r="0.55"/><circle cx="84.7" cy="153.0" r="0.90"/><circle cx="89.8" cy="146.6" r="0.77"/><circle cx="89.9" cy="152.8" r="0.80"/><circle cx="84.2" cy="146.3" r="0.87"/><circle cx="77.6" cy="158.1" r="0.79"/><circle cx="81.6" cy="147.5" r="0.80"/><circle cx="79.4" cy="151.7" r="0.79"/><circle cx="83.4" cy="164.3" r="0.68"/><circle cx="82.9" cy="145.0" r="0.68"/><circle cx="85.2" cy="156.7" r="1.04"/><circle cx="75.8" cy="151.5" r="0.72"/><circle cx="86.6" cy="148.3" r="0.44"/><circle cx="88.1" cy="146.2" r="0.81"/><circle cx="90.2" cy="143.1" r="0.99"/><circle cx="91.5" cy="154.8" r="0.97"/><circle cx="86.0" cy="149.9" r="0.42"/><circle cx="84.5" cy="156.1" r="0.59"/><circle cx="87.4" cy="145.3" r="0.66"/><circle cx="90.8" cy="156.6" r="1.10"/><circle cx="81.8" cy="146.0" r="0.68"/><circle cx="87.8" cy="143.3" r="0.42"/><circle cx="81.5" cy="147.0" r="0.72"/><circle cx="85.1" cy="159.6" r="0.57"/><circle cx="83.7" cy="153.7" r="0.46"/><circle cx="82.4" cy="152.1" r="0.44"/><circle cx="83.3" cy="147.6" r="0.56"/><circle cx="85.1" cy="163.7" r="0.37"/><circle cx="76.7" cy="144.7" r="0.46"/><circle cx="74.5" cy="157.8" r="0.79"/><circle cx="83.1" cy="154.3" r="0.65"/><circle cx="77.4" cy="160.3" r="0.54"/><circle cx="76.1" cy="158.1" r="0.95"/><circle cx="80.1" cy="158.4" r="0.76"/><circle cx="88.8" cy="151.0" r="1.08"/><circle cx="82.8" cy="146.6" r="0.83"/><circle cx="83.2" cy="155.2" r="0.90"/><circle cx="78.1" cy="158.6" r="0.70"/><circle cx="93.5" cy="147.1" r="0.32"/><circle cx="77.7" cy="148.8" r="0.67"/><circle cx="88.6" cy="147.0" r="0.68"/><circle cx="90.6" cy="148.3" r="0.69"/><circle cx="73.0" cy="152.2" r="0.84"/><circle cx="84.0" cy="146.1" r="0.33"/><circle cx="80.6" cy="145.4" r="0.92"/><circle cx="84.9" cy="149.7" r="0.48"/><circle cx="94.7" cy="158.0" r="0.38"/><circle cx="93.8" cy="158.3" r="0.75"/><circle cx="94.2" cy="156.2" r="0.87"/><circle cx="82.2" cy="153.2" r="0.85"/><circle cx="76.3" cy="157.3" r="1.10"/><circle cx="89.4" cy="142.9" r="0.42"/><circle cx="80.1" cy="160.0" r="0.30"/><circle cx="90.5" cy="152.6" r="0.51"/><circle cx="82.3" cy="157.9" r="0.99"/><circle cx="76.3" cy="150.3" r="0.64"/><circle cx="90.5" cy="154.9" r="0.99"/><circle cx="88.3" cy="142.6" r="0.51"/><circle cx="85.2" cy="154.9" r="0.73"/><circle cx="78.7" cy="158.4" r="0.69"/><circle cx="78.4" cy="149.7" r="0.94"/><circle cx="88.3" cy="163.9" r="0.74"/><circle cx="90.7" cy="154.9" r="0.73"/><circle cx="76.7" cy="157.6" r="0.56"/><circle cx="82.8" cy="163.4" r="0.53"/><circle cx="81.7" cy="142.8" r="0.77"/><circle cx="72.5" cy="156.2" r="0.66"/><circle cx="86.2" cy="151.5" r="0.65"/><circle cx="83.1" cy="151.5" r="0.99"/><circle cx="93.1" cy="156.8" r="0.44"/><circle cx="92.6" cy="149.0" r="0.94"/><circle cx="74.2" cy="153.1" r="0.84"/><circle cx="83.1" cy="157.5" r="0.97"/><circle cx="92.0" cy="162.0" r="0.47"/><circle cx="87.1" cy="154.7" r="0.93"/></g><circle cx="118.5" cy="153.0" r="13.5" fill="#111"/><g fill="#fff" opacity="1.0"><circle cx="125.5" cy="150.8" r="1.19"/><circle cx="117.9" cy="164.8" r="1.22"/><circle cx="119.8" cy="154.8" r="1.23"/><circle cx="129.3" cy="155.9" r="0.86"/><circle cx="119.5" cy="162.0" r="0.89"/><circle cx="114.7" cy="151.5" r="1.42"/><circle cx="113.4" cy="163.1" r="0.74"/><circle cx="122.3" cy="141.2" r="0.95"/><circle cx="125.3" cy="154.4" r="1.18"/><circle cx="119.9" cy="161.6" r="0.68"/><circle cx="108.4" cy="155.3" r="0.99"/><circle cx="117.0" cy="149.9" r="1.35"/><circle cx="127.1" cy="161.3" r="1.50"/><circle cx="126.4" cy="149.8" r="0.86"/><circle cx="112.4" cy="161.6" r="1.05"/><circle cx="121.2" cy="151.7" r="1.04"/><circle cx="124.5" cy="146.1" r="1.09"/><circle cx="121.8" cy="155.0" r="0.84"/><circle cx="127.3" cy="146.0" r="0.80"/><circle cx="119.9" cy="152.3" r="1.14"/><circle cx="125.0" cy="151.7" r="1.45"/><circle cx="117.4" cy="151.3" r="0.90"/><circle cx="113.4" cy="154.7" r="1.27"/><circle cx="123.2" cy="162.8" r="0.87"/><circle cx="126.5" cy="156.7" r="0.69"/><circle cx="108.2" cy="149.6" r="1.14"/><circle cx="116.9" cy="153.4" r="1.06"/><circle cx="126.4" cy="158.5" r="0.72"/><circle cx="112.6" cy="149.9" r="0.94"/><circle cx="116.3" cy="149.4" r="0.75"/><circle cx="124.5" cy="150.7" r="1.36"/><circle cx="124.1" cy="147.3" r="0.73"/><circle cx="128.1" cy="159.4" r="0.71"/><circle cx="109.9" cy="153.2" r="0.71"/><circle cx="114.4" cy="153.8" r="1.08"/><circle cx="111.7" cy="152.7" r="0.78"/><circle cx="114.5" cy="155.7" r="0.71"/><circle cx="119.2" cy="164.5" r="1.05"/><circle cx="119.3" cy="152.4" r="1.45"/><circle cx="107.7" cy="153.8" r="1.11"/><circle cx="116.6" cy="148.2" r="1.28"/><circle cx="121.7" cy="157.6" r="0.63"/><circle cx="111.9" cy="158.2" r="0.86"/><circle cx="120.7" cy="151.2" r="1.12"/><circle cx="119.4" cy="162.1" r="1.31"/><circle cx="117.9" cy="150.7" r="0.82"/><circle cx="108.5" cy="145.8" r="0.64"/><circle cx="111.1" cy="146.2" r="1.33"/><circle cx="112.5" cy="162.2" r="1.02"/><circle cx="119.2" cy="152.6" r="1.45"/><circle cx="112.3" cy="156.8" r="0.68"/><circle cx="118.8" cy="163.4" r="1.21"/><circle cx="122.3" cy="158.4" r="0.73"/><circle cx="120.1" cy="157.8" r="0.90"/><circle cx="130.8" cy="151.1" r="1.31"/><circle cx="110.3" cy="154.0" r="1.30"/><circle cx="127.3" cy="147.2" r="1.17"/><circle cx="121.5" cy="162.0" r="1.36"/><circle cx="119.2" cy="150.1" r="1.25"/><circle cx="116.1" cy="156.4" r="1.47"/><circle cx="113.6" cy="143.7" r="0.72"/><circle cx="124.2" cy="142.4" r="1.41"/><circle cx="118.1" cy="141.8" r="1.32"/><circle cx="112.1" cy="148.9" r="1.34"/><circle cx="121.0" cy="141.8" r="0.87"/><circle cx="126.8" cy="150.9" r="1.45"/><circle cx="127.7" cy="161.2" r="1.31"/><circle cx="118.4" cy="164.2" r="0.81"/><circle cx="121.0" cy="160.4" r="0.81"/><circle cx="106.7" cy="153.5" r="1.22"/><circle cx="116.7" cy="146.1" r="1.31"/><circle cx="121.2" cy="143.4" r="1.45"/><circle cx="121.8" cy="146.5" r="0.68"/><circle cx="112.0" cy="143.8" r="0.91"/><circle cx="109.2" cy="146.7" r="1.31"/><circle cx="126.6" cy="153.2" r="0.61"/><circle cx="127.0" cy="160.1" r="0.98"/><circle cx="112.3" cy="148.2" r="0.90"/><circle cx="120.0" cy="159.5" r="1.36"/><circle cx="114.1" cy="148.9" r="0.68"/><circle cx="117.2" cy="163.0" r="1.00"/><circle cx="112.7" cy="143.7" r="0.71"/><circle cx="117.7" cy="151.3" r="1.34"/><circle cx="120.8" cy="158.2" r="1.46"/><circle cx="115.2" cy="156.9" r="1.40"/><circle cx="109.5" cy="145.5" r="0.95"/><circle cx="106.3" cy="153.0" r="1.06"/><circle cx="123.1" cy="152.7" r="1.35"/><circle cx="123.0" cy="160.3" r="0.60"/><circle cx="124.0" cy="163.8" r="1.01"/><circle cx="120.5" cy="147.9" r="0.92"/><circle cx="125.6" cy="158.2" r="1.38"/><circle cx="111.6" cy="152.4" r="1.44"/><circle cx="126.2" cy="146.9" r="0.67"/><circle cx="113.0" cy="147.6" r="1.46"/><circle cx="112.2" cy="160.4" r="1.17"/><circle cx="112.5" cy="159.0" r="1.21"/><circle cx="125.4" cy="148.5" r="0.93"/><circle cx="120.7" cy="152.7" r="1.35"/><circle cx="114.9" cy="145.0" r="1.00"/><circle cx="118.6" cy="141.3" r="1.26"/><circle cx="118.5" cy="151.3" r="0.89"/><circle cx="126.4" cy="162.2" r="1.40"/><circle cx="124.1" cy="160.2" r="1.12"/><circle cx="125.3" cy="155.1" r="1.27"/><circle cx="114.8" cy="148.5" r="1.29"/><circle cx="116.3" cy="161.4" r="0.98"/><circle cx="128.1" cy="151.7" r="1.32"/><circle cx="115.4" cy="146.7" r="1.47"/><circle cx="116.0" cy="143.3" r="0.85"/><circle cx="123.2" cy="160.6" r="1.34"/><circle cx="120.3" cy="146.6" r="0.73"/><circle cx="107.0" cy="151.8" r="0.75"/><circle cx="118.2" cy="148.7" r="0.88"/><circle cx="124.2" cy="155.0" r="0.94"/><circle cx="130.5" cy="150.5" r="0.77"/><circle cx="114.1" cy="164.2" r="0.78"/><circle cx="115.2" cy="159.9" r="0.70"/><circle cx="118.0" cy="160.1" r="0.95"/><circle cx="124.0" cy="151.7" r="0.78"/><circle cx="125.0" cy="148.8" r="1.35"/><circle cx="111.5" cy="144.8" r="0.88"/><circle cx="124.6" cy="161.6" r="1.02"/><circle cx="109.3" cy="149.5" r="1.28"/><circle cx="117.4" cy="159.7" r="1.43"/><circle cx="112.7" cy="151.9" r="1.17"/><circle cx="117.8" cy="163.7" r="0.64"/><circle cx="122.6" cy="145.1" r="0.92"/><circle cx="123.7" cy="150.9" r="0.82"/><circle cx="126.4" cy="156.7" r="1.28"/><circle cx="115.3" cy="146.4" r="1.33"/><circle cx="123.2" cy="157.0" r="1.18"/><circle cx="127.8" cy="151.1" r="1.22"/><circle cx="119.6" cy="145.9" r="1.45"/><circle cx="118.2" cy="146.4" r="0.95"/><circle cx="120.8" cy="146.7" r="0.77"/><circle cx="124.4" cy="146.8" r="1.07"/><circle cx="112.8" cy="142.7" r="0.72"/><circle cx="117.2" cy="155.1" r="0.97"/><circle cx="107.1" cy="152.8" r="1.20"/><circle cx="112.1" cy="149.6" r="1.12"/><circle cx="116.8" cy="164.2" r="1.31"/><circle cx="120.6" cy="149.6" r="1.20"/><circle cx="118.7" cy="144.8" r="1.41"/><circle cx="126.9" cy="146.8" r="1.34"/><circle cx="111.6" cy="143.7" r="0.72"/><circle cx="115.6" cy="143.3" r="1.15"/><circle cx="118.1" cy="155.4" r="1.14"/><circle cx="121.1" cy="147.9" r="0.79"/><circle cx="119.0" cy="156.0" r="1.21"/><circle cx="129.3" cy="151.3" r="0.92"/><circle cx="117.7" cy="150.5" r="1.35"/><circle cx="118.3" cy="153.4" r="1.17"/><circle cx="122.2" cy="157.4" r="0.65"/><circle cx="110.2" cy="155.9" r="1.33"/><circle cx="129.3" cy="155.7" r="0.70"/><circle cx="120.0" cy="162.3" r="0.91"/><circle cx="114.2" cy="160.8" r="0.80"/><circle cx="119.8" cy="148.3" r="1.36"/><circle cx="121.6" cy="145.0" r="0.63"/><circle cx="118.8" cy="151.5" r="1.05"/><circle cx="116.4" cy="154.1" r="1.17"/><circle cx="117.1" cy="144.1" r="0.96"/><circle cx="109.4" cy="152.3" r="0.80"/><circle cx="126.9" cy="143.8" r="1.32"/><circle cx="124.7" cy="151.5" r="1.49"/><circle cx="125.7" cy="156.5" r="0.72"/><circle cx="109.0" cy="155.8" r="1.24"/><circle cx="112.2" cy="154.8" r="0.77"/><circle cx="113.7" cy="156.4" r="0.77"/><circle cx="117.8" cy="144.6" r="0.99"/><circle cx="121.8" cy="162.6" r="0.78"/><circle cx="117.6" cy="161.8" r="1.23"/><circle cx="128.8" cy="151.2" r="1.45"/><circle cx="127.5" cy="148.0" r="1.25"/><circle cx="123.0" cy="154.9" r="0.61"/><circle cx="125.2" cy="145.2" r="1.17"/><circle cx="117.9" cy="159.7" r="0.75"/><circle cx="110.1" cy="143.8" r="0.88"/><circle cx="122.7" cy="154.2" r="0.92"/><circle cx="127.3" cy="146.5" r="1.01"/><circle cx="121.1" cy="155.0" r="0.74"/><circle cx="119.9" cy="145.2" r="1.49"/><circle cx="127.8" cy="147.3" r="1.03"/><circle cx="120.1" cy="149.7" r="0.70"/><circle cx="110.8" cy="149.8" r="0.79"/><circle cx="118.5" cy="154.2" r="1.42"/><circle cx="115.5" cy="141.3" r="1.48"/><circle cx="108.9" cy="157.0" r="0.95"/><circle cx="122.8" cy="142.6" r="0.72"/><circle cx="123.4" cy="153.4" r="1.13"/><circle cx="118.0" cy="153.5" r="1.35"/><circle cx="120.3" cy="145.3" r="0.64"/><circle cx="125.1" cy="147.5" r="0.66"/><circle cx="114.3" cy="161.4" r="1.40"/><circle cx="109.0" cy="153.9" r="0.79"/><circle cx="119.0" cy="164.8" r="0.94"/><circle cx="125.7" cy="158.5" r="0.71"/><circle cx="120.9" cy="160.4" r="1.13"/><circle cx="111.9" cy="145.3" r="1.00"/><circle cx="127.9" cy="157.2" r="0.65"/><circle cx="111.4" cy="154.3" r="1.21"/><circle cx="117.3" cy="147.8" r="1.18"/><circle cx="115.7" cy="145.6" r="0.73"/><circle cx="126.2" cy="148.0" r="0.66"/><circle cx="119.4" cy="165.4" r="0.81"/><circle cx="110.1" cy="159.8" r="1.34"/><circle cx="111.5" cy="145.2" r="0.63"/><circle cx="128.7" cy="159.8" r="1.32"/><circle cx="120.5" cy="153.5" r="0.82"/><circle cx="123.1" cy="150.9" r="1.20"/><circle cx="127.2" cy="149.0" r="1.43"/><circle cx="118.2" cy="157.0" r="0.62"/><circle cx="118.6" cy="149.8" r="1.48"/><circle cx="117.4" cy="148.6" r="1.33"/><circle cx="122.9" cy="160.1" r="0.70"/><circle cx="121.2" cy="141.7" r="1.42"/><circle cx="129.8" cy="153.2" r="1.10"/><circle cx="122.1" cy="145.5" r="1.16"/><circle cx="109.4" cy="146.9" r="0.67"/><circle cx="126.7" cy="155.9" r="0.86"/><circle cx="118.0" cy="153.4" r="1.27"/><circle cx="129.5" cy="154.7" r="1.33"/><circle cx="115.1" cy="153.9" r="1.19"/><circle cx="120.5" cy="160.3" r="0.70"/><circle cx="127.1" cy="151.7" r="0.92"/><circle cx="127.1" cy="158.8" r="1.36"/><circle cx="120.3" cy="150.4" r="0.93"/><circle cx="115.0" cy="163.0" r="0.73"/><circle cx="108.8" cy="145.4" r="1.29"/></g><circle cx="152.5" cy="153.0" r="13.5" fill="#000"/><ellipse cx="152.5" cy="160.0" rx="11" ry="6" fill="#aaa" opacity="0.6"/><g fill="#fff" opacity="1.0"><circle cx="154.8" cy="156.1" r="0.49"/><circle cx="149.6" cy="149.8" r="0.82"/><circle cx="146.3" cy="157.4" r="0.89"/><circle cx="146.3" cy="149.1" r="0.99"/><circle cx="155.5" cy="147.8" r="1.07"/><circle cx="152.2" cy="154.9" r="0.94"/><circle cx="156.4" cy="151.6" r="1.10"/><circle cx="157.0" cy="163.9" r="0.75"/><circle cx="151.2" cy="152.2" r="0.64"/><circle cx="149.3" cy="159.7" r="0.48"/><circle cx="142.3" cy="159.1" r="0.92"/><circle cx="161.0" cy="152.8" r="1.07"/><circle cx="161.8" cy="155.7" r="0.62"/><circle cx="152.5" cy="161.3" r="0.42"/><circle cx="153.7" cy="164.3" r="1.14"/><circle cx="148.0" cy="162.8" r="1.02"/><circle cx="159.9" cy="151.0" r="0.83"/><circle cx="160.3" cy="160.9" r="0.65"/><circle cx="148.3" cy="152.5" r="0.83"/><circle cx="156.1" cy="155.4" r="0.82"/><circle cx="148.0" cy="151.0" r="1.15"/><circle cx="143.8" cy="160.7" r="0.95"/><circle cx="155.0" cy="155.6" r="0.57"/><circle cx="150.1" cy="164.3" r="0.41"/><circle cx="151.9" cy="163.3" r="1.19"/><circle cx="155.5" cy="160.9" r="0.95"/><circle cx="149.1" cy="149.0" r="1.00"/><circle cx="152.5" cy="160.0" r="0.42"/><circle cx="150.9" cy="152.7" r="0.61"/><circle cx="160.7" cy="154.5" r="0.87"/><circle cx="148.0" cy="150.5" r="0.96"/><circle cx="151.8" cy="157.6" r="0.45"/><circle cx="158.4" cy="156.4" r="0.51"/><circle cx="158.0" cy="159.8" r="1.18"/><circle cx="150.6" cy="152.2" r="1.02"/><circle cx="153.7" cy="158.0" r="0.64"/><circle cx="145.1" cy="159.9" r="0.76"/><circle cx="152.1" cy="153.8" r="1.15"/><circle cx="147.1" cy="162.7" r="0.42"/><circle cx="154.6" cy="152.8" r="1.08"/><circle cx="155.3" cy="149.3" r="0.62"/><circle cx="156.6" cy="156.2" r="1.12"/><circle cx="157.2" cy="161.9" r="0.87"/><circle cx="150.4" cy="153.3" r="0.51"/><circle cx="161.4" cy="161.1" r="0.71"/><circle cx="148.0" cy="150.8" r="0.58"/><circle cx="153.3" cy="156.3" r="1.08"/><circle cx="159.9" cy="162.4" r="0.69"/><circle cx="151.9" cy="153.3" r="1.03"/><circle cx="152.4" cy="160.9" r="0.82"/><circle cx="156.1" cy="158.5" r="1.04"/><circle cx="151.1" cy="160.9" r="1.01"/><circle cx="153.2" cy="159.3" r="0.58"/><circle cx="148.0" cy="159.3" r="0.91"/><circle cx="142.5" cy="157.5" r="0.44"/><circle cx="147.4" cy="149.1" r="0.59"/><circle cx="159.1" cy="157.0" r="0.49"/><circle cx="143.8" cy="157.8" r="0.47"/><circle cx="157.7" cy="159.9" r="0.54"/><circle cx="153.3" cy="161.5" r="0.49"/></g><ellipse cx="16.5" cy="187.0" rx="14" ry="8" fill="#000"/><g fill="#fff" opacity="1.0"><circle cx="22.4" cy="188.3" r="1.27"/><circle cx="24.3" cy="185.4" r="0.87"/><circle cx="18.2" cy="192.0" r="1.36"/><circle cx="24.5" cy="182.7" r="1.66"/><circle cx="25.4" cy="190.7" r="1.32"/><circle cx="16.8" cy="189.1" r="1.66"/><circle cx="17.1" cy="188.3" r="1.07"/><circle cx="23.2" cy="185.3" r="1.53"/><circle cx="23.2" cy="188.7" r="1.12"/><circle cx="19.1" cy="191.5" r="1.16"/><circle cx="25.2" cy="191.1" r="1.28"/><circle cx="16.8" cy="187.4" r="1.45"/><circle cx="15.2" cy="186.9" r="1.27"/><circle cx="16.0" cy="182.9" r="1.03"/><circle cx="7.6" cy="187.0" r="1.45"/><circle cx="22.9" cy="191.2" r="1.75"/><circle cx="15.8" cy="181.5" r="1.17"/><circle cx="20.0" cy="185.8" r="1.03"/><circle cx="7.3" cy="183.7" r="0.88"/><circle cx="16.8" cy="187.8" r="1.24"/><circle cx="19.3" cy="188.7" r="1.55"/><circle cx="6.5" cy="184.1" r="1.20"/><circle cx="16.1" cy="186.6" r="1.75"/><circle cx="17.3" cy="190.8" r="1.31"/><circle cx="23.9" cy="185.7" r="1.79"/><circle cx="13.0" cy="185.3" r="1.63"/><circle cx="20.1" cy="192.7" r="1.26"/><circle cx="18.2" cy="192.8" r="1.12"/><circle cx="11.2" cy="188.7" r="1.47"/><circle cx="23.1" cy="187.5" r="0.96"/><circle cx="16.5" cy="187.0" r="1.41"/><circle cx="16.1" cy="190.7" r="1.36"/><circle cx="15.6" cy="185.2" r="1.04"/><circle cx="25.0" cy="191.0" r="0.95"/><circle cx="21.8" cy="190.1" r="1.38"/><circle cx="18.1" cy="186.3" r="1.03"/><circle cx="20.8" cy="190.8" r="1.25"/><circle cx="7.1" cy="190.0" r="1.46"/><circle cx="24.0" cy="182.5" r="1.07"/><circle cx="23.0" cy="185.8" r="0.85"/></g><g opacity="0.8"><g fill="#000" opacity="1.0"><circle cx="53.4" cy="186.1" r="0.31"/><circle cx="49.0" cy="190.2" r="0.98"/><circle cx="55.8" cy="184.0" r="0.67"/><circle cx="57.1" cy="182.0" r="0.76"/><circle cx="46.9" cy="186.8" r="0.47"/><circle cx="45.3" cy="182.7" r="0.86"/><circle cx="60.7" cy="182.9" r="0.43"/><circle cx="61.3" cy="190.0" r="0.70"/><circle cx="54.8" cy="192.1" r="0.48"/><circle cx="51.1" cy="190.8" r="0.67"/><circle cx="49.3" cy="185.7" r="0.82"/><circle cx="44.6" cy="183.9" r="0.77"/><circle cx="50.7" cy="186.6" r="0.63"/><circle cx="45.9" cy="181.9" r="0.75"/><circle cx="55.9" cy="193.2" r="0.85"/><circle cx="51.3" cy="191.2" r="0.97"/><circle cx="52.5" cy="190.9" r="0.97"/><circle cx="54.9" cy="185.3" r="0.81"/><circle cx="44.0" cy="191.2" r="0.84"/><circle cx="54.2" cy="189.0" r="0.45"/><circle cx="50.3" cy="187.9" r="0.40"/><circle cx="44.1" cy="189.3" r="0.35"/><circle cx="39.6" cy="183.7" r="0.70"/><circle cx="44.0" cy="191.5" r="0.61"/><circle cx="54.3" cy="191.0" r="0.31"/><circle cx="48.6" cy="184.9" r="0.56"/><circle cx="61.3" cy="185.6" r="0.88"/><circle cx="44.3" cy="182.9" r="0.79"/><circle cx="55.3" cy="186.4" r="0.84"/><circle cx="48.7" cy="189.9" r="0.88"/><circle cx="41.0" cy="183.2" r="0.91"/><circle cx="46.3" cy="185.6" r="0.31"/><circle cx="40.0" cy="185.7" r="0.49"/><circle cx="51.0" cy="187.1" r="0.42"/><circle cx="50.3" cy="186.8" r="0.46"/><circle cx="49.5" cy="192.7" r="0.99"/><circle cx="54.0" cy="187.2" r="0.95"/><circle cx="54.6" cy="186.6" r="0.53"/><circle cx="44.0" cy="186.5" r="0.59"/><circle cx="44.8" cy="187.4" r="0.34"/><circle cx="54.3" cy="188.2" r="0.36"/><circle cx="43.1" cy="183.0" r="0.48"/><circle cx="53.3" cy="181.4" r="0.54"/><circle cx="45.7" cy="187.1" r="0.95"/><circle cx="48.5" cy="186.6" r="0.41"/><circle cx="47.9" cy="183.3" r="0.80"/><circle cx="52.0" cy="193.1" r="0.86"/><circle cx="58.3" cy="189.8" r="0.43"/><circle cx="47.5" cy="181.1" r="0.85"/><circle cx="50.9" cy="188.7" r="0.76"/><circle cx="46.9" cy="186.2" r="0.43"/><circle cx="47.5" cy="186.1" r="0.74"/><circle cx="50.8" cy="190.1" r="0.60"/><circle cx="40.0" cy="185.8" r="0.32"/><circle cx="49.7" cy="184.2" r="0.50"/><circle cx="43.8" cy="182.7" r="0.73"/><circle cx="54.6" cy="185.4" r="0.52"/><circle cx="47.5" cy="184.3" r="0.41"/><circle cx="52.2" cy="192.9" r="0.88"/><circle cx="47.8" cy="180.3" r="0.86"/><circle cx="48.1" cy="190.3" r="0.80"/><circle cx="59.6" cy="188.8" r="0.36"/><circle cx="58.8" cy="188.4" r="0.41"/><circle cx="61.4" cy="184.3" r="0.62"/><circle cx="51.7" cy="188.9" r="0.65"/><circle cx="43.5" cy="186.5" r="0.80"/><circle cx="39.5" cy="185.9" r="0.37"/><circle cx="57.2" cy="188.7" r="0.64"/><circle cx="50.3" cy="192.5" r="0.46"/><circle cx="47.0" cy="191.1" r="0.80"/><circle cx="51.4" cy="183.2" r="0.61"/><circle cx="61.7" cy="184.0" r="0.73"/><circle cx="56.9" cy="189.7" r="0.75"/><circle cx="50.2" cy="188.0" r="0.99"/><circle cx="53.7" cy="185.9" r="0.63"/><circle cx="45.9" cy="184.7" r="0.35"/><circle cx="50.5" cy="181.0" r="0.61"/><circle cx="56.9" cy="189.1" r="0.37"/><circle cx="52.6" cy="186.7" r="0.50"/><circle cx="50.9" cy="184.9" r="0.37"/><circle cx="54.5" cy="188.0" r="0.67"/><circle cx="52.7" cy="184.9" r="0.42"/><circle cx="51.2" cy="182.8" r="0.54"/><circle cx="54.5" cy="189.1" r="0.98"/><circle cx="54.8" cy="189.1" r="0.82"/><circle cx="60.0" cy="182.9" r="0.63"/><circle cx="59.7" cy="185.6" r="0.50"/><circle cx="40.1" cy="188.2" r="0.81"/><circle cx="53.8" cy="188.9" r="0.97"/><circle cx="59.5" cy="190.9" r="0.54"/><circle cx="50.6" cy="190.1" r="0.63"/><circle cx="54.6" cy="186.9" r="0.90"/><circle cx="48.5" cy="189.2" r="0.82"/><circle cx="47.9" cy="189.2" r="0.59"/><circle cx="55.7" cy="181.2" r="0.70"/><circle cx="61.5" cy="187.4" r="0.72"/><circle cx="60.7" cy="183.0" r="0.53"/><circle cx="57.2" cy="181.9" r="0.49"/><circle cx="45.7" cy="189.9" r="0.55"/><circle cx="48.0" cy="188.3" r="0.46"/><circle cx="56.9" cy="184.8" r="0.75"/><circle cx="58.8" cy="183.2" r="0.47"/><circle cx="60.5" cy="184.0" r="0.99"/><circle cx="49.0" cy="181.1" r="0.87"/><circle cx="50.3" cy="192.4" r="0.57"/><circle cx="52.6" cy="185.2" r="0.68"/><circle cx="44.5" cy="192.3" r="0.54"/><circle cx="57.0" cy="181.7" r="0.92"/><circle cx="58.5" cy="192.2" r="0.82"/><circle cx="46.0" cy="182.1" r="0.33"/><circle cx="56.7" cy="183.4" r="0.62"/><circle cx="44.5" cy="192.1" r="0.85"/><circle cx="54.0" cy="185.0" r="0.54"/><circle cx="50.5" cy="188.8" r="0.53"/><circle cx="61.7" cy="188.0" r="0.46"/><circle cx="52.8" cy="187.6" r="0.82"/><circle cx="53.1" cy="191.2" r="0.58"/><circle cx="54.6" cy="180.6" r="0.52"/><circle cx="42.3" cy="182.2" r="0.63"/><circle cx="59.2" cy="183.6" r="0.52"/><circle cx="57.0" cy="183.4" r="0.37"/><circle cx="40.6" cy="183.7" r="0.66"/><circle cx="42.9" cy="187.4" r="0.92"/><circle cx="47.9" cy="184.6" r="0.55"/><circle cx="42.2" cy="192.2" r="0.79"/><circle cx="59.2" cy="191.7" r="0.32"/><circle cx="43.9" cy="184.7" r="0.80"/><circle cx="47.7" cy="187.7" r="0.67"/><circle cx="55.3" cy="181.5" r="0.55"/><circle cx="52.4" cy="192.8" r="0.86"/><circle cx="52.8" cy="193.4" r="0.99"/><circle cx="43.8" cy="188.6" r="0.80"/><circle cx="55.0" cy="185.9" r="0.51"/><circle cx="45.4" cy="192.1" r="0.43"/><circle cx="42.3" cy="185.7" r="0.77"/><circle cx="58.4" cy="192.3" r="1.00"/><circle cx="40.0" cy="184.7" r="0.43"/><circle cx="58.2" cy="184.4" r="0.83"/><circle cx="55.3" cy="184.2" r="0.95"/><circle cx="50.9" cy="187.7" r="0.65"/><circle cx="60.3" cy="183.1" r="0.97"/><circle cx="38.1" cy="186.5" r="0.69"/><circle cx="56.6" cy="191.2" r="0.86"/><circle cx="42.0" cy="189.4" r="0.48"/><circle cx="49.2" cy="191.1" r="0.66"/><circle cx="47.4" cy="187.3" r="0.30"/><circle cx="44.8" cy="191.8" r="0.82"/><circle cx="51.0" cy="190.1" r="0.66"/><circle cx="54.8" cy="191.6" r="0.93"/><circle cx="53.3" cy="191.8" r="0.80"/><circle cx="50.4" cy="181.3" r="0.80"/><circle cx="48.8" cy="193.2" r="0.95"/><circle cx="62.4" cy="189.2" r="0.61"/><circle cx="52.8" cy="187.7" r="0.86"/><circle cx="48.7" cy="185.0" r="0.62"/><circle cx="42.1" cy="181.7" r="0.54"/><circle cx="51.1" cy="184.0" r="0.44"/><circle cx="54.5" cy="190.5" r="0.73"/><circle cx="49.1" cy="189.2" r="0.45"/><circle cx="54.7" cy="188.3" r="0.52"/><circle cx="45.8" cy="186.9" r="0.64"/><circle cx="38.6" cy="189.5" r="0.64"/><circle cx="58.3" cy="185.5" r="0.44"/><circle cx="47.1" cy="185.8" r="0.42"/><circle cx="59.9" cy="189.5" r="0.98"/><circle cx="44.8" cy="189.1" r="0.60"/><circle cx="44.3" cy="191.5" r="0.57"/><circle cx="57.4" cy="192.2" r="0.70"/><circle cx="62.3" cy="187.3" r="0.81"/><circle cx="44.5" cy="191.2" r="0.94"/><circle cx="44.1" cy="189.5" r="0.51"/><circle cx="40.9" cy="185.2" r="0.81"/><circle cx="54.4" cy="186.3" r="0.56"/><circle cx="57.2" cy="182.1" r="0.71"/><circle cx="47.5" cy="183.7" r="0.96"/><circle cx="43.3" cy="185.8" r="0.43"/><circle cx="59.6" cy="191.4" r="0.86"/><circle cx="57.0" cy="187.6" r="0.64"/><circle cx="43.4" cy="187.1" r="0.93"/><circle cx="45.3" cy="190.9" r="0.95"/><circle cx="45.2" cy="183.6" r="0.53"/><circle cx="43.2" cy="190.4" r="0.85"/><circle cx="50.0" cy="190.8" r="0.57"/><circle cx="42.5" cy="192.0" r="0.68"/><circle cx="49.4" cy="190.6" r="0.88"/><circle cx="56.1" cy="191.7" r="0.32"/><circle cx="51.3" cy="188.2" r="0.86"/><circle cx="53.7" cy="189.3" r="0.34"/><circle cx="49.6" cy="192.8" r="0.80"/><circle cx="61.1" cy="183.4" r="0.69"/><circle cx="53.2" cy="186.2" r="0.95"/><circle cx="46.1" cy="188.1" r="0.82"/><circle cx="55.1" cy="183.9" r="0.37"/><circle cx="58.2" cy="182.8" r="0.72"/><circle cx="52.3" cy="186.9" r="0.34"/><circle cx="51.4" cy="187.5" r="0.80"/><circle cx="48.1" cy="185.6" r="0.41"/><circle cx="54.6" cy="191.7" r="0.77"/><circle cx="57.4" cy="186.3" r="0.99"/><circle cx="43.7" cy="188.6" r="0.48"/></g></g><g fill="#000" opacity="0.8"><circle cx="84.8" cy="199.7" r="0.80"/><circle cx="84.2" cy="182.6" r="0.39"/><circle cx="85.4" cy="192.7" r="0.67"/><circle cx="86.4" cy="190.2" r="0.64"/><circle cx="86.3" cy="188.7" r="0.70"/><circle cx="82.8" cy="183.3" r="0.74"/><circle cx="83.2" cy="183.0" r="0.50"/><circle cx="87.1" cy="182.9" r="0.76"/><circle cx="83.6" cy="185.5" r="0.39"/><circle cx="82.7" cy="194.0" r="0.30"/><circle cx="85.3" cy="176.3" r="0.56"/><circle cx="87.1" cy="187.4" r="0.51"/><circle cx="83.5" cy="178.9" r="0.66"/><circle cx="82.0" cy="193.9" r="0.78"/><circle cx="86.5" cy="182.8" r="0.46"/><circle cx="83.5" cy="191.1" r="0.75"/><circle cx="85.2" cy="176.1" r="0.71"/><circle cx="86.9" cy="186.4" r="0.46"/><circle cx="84.6" cy="181.2" r="0.61"/><circle cx="86.0" cy="196.9" r="0.54"/><circle cx="84.1" cy="199.2" r="0.34"/><circle cx="86.8" cy="182.3" r="0.37"/><circle cx="84.6" cy="177.7" r="0.75"/><circle cx="83.0" cy="183.0" r="0.77"/><circle cx="86.7" cy="192.8" r="0.35"/><circle cx="84.4" cy="190.5" r="0.74"/><circle cx="82.2" cy="190.8" r="0.43"/><circle cx="84.2" cy="177.0" r="0.35"/><circle cx="82.0" cy="187.4" r="0.41"/><circle cx="83.7" cy="182.0" r="0.49"/><circle cx="87.0" cy="180.9" r="0.80"/><circle cx="82.6" cy="191.1" r="0.70"/><circle cx="84.6" cy="178.9" r="0.73"/><circle cx="82.1" cy="194.3" r="0.54"/><circle cx="86.4" cy="194.4" r="0.37"/><circle cx="84.3" cy="185.0" r="0.79"/><circle cx="82.1" cy="184.2" r="0.37"/><circle cx="83.4" cy="181.5" r="0.42"/><circle cx="84.7" cy="185.5" r="0.54"/><circle cx="86.8" cy="193.1" r="0.75"/></g><rect x="104.3" y="185.2" width="8" height="2" fill="#999" transform="rotate(84 108.3 186.2)"/><rect x="119.3" y="191.0" width="8" height="2" fill="#999" transform="rotate(62 123.3 192.0)"/><rect x="124.0" y="179.1" width="8" height="2" fill="#999" transform="rotate(25 128.0 180.1)"/><rect x="121.4" y="177.6" width="8" height="2" fill="#999" transform="rotate(33 125.4 178.6)"/><rect x="114.5" y="182.4" width="8" height="2" fill="#999" transform="rotate(29 118.5 183.4)"/><rect x="124.0" y="185.4" width="8" height="2" fill="#999" transform="rotate(141 128.0 186.4)"/><rect x="109.0" y="195.1" width="8" height="2" fill="#999" transform="rotate(40 113.0 196.1)"/><rect x="123.4" y="188.5" width="8" height="2" fill="#999" transform="rotate(175 127.4 189.5)"/><rect x="120.5" y="188.9" width="8" height="2" fill="#999" transform="rotate(96 124.5 189.9)"/><path d="M138.5 177.0 L144.5 187.0 L164.5 184.0 L166.5 195.0 L157.5 196.0 M144.5 187.0 L140.5 196.0 M140.5 181.0 L147.5 175.0" stroke="#888" stroke-width="1.5" fill="none"/><g fill="#000" opacity="0.85"><circle cx="22.1" cy="214.2" r="0.34"/><circle cx="27.8" cy="214.7" r="0.57"/><circle cx="16.3" cy="215.2" r="0.49"/><circle cx="23.0" cy="208.7" r="0.67"/><circle cx="22.9" cy="230.4" r="0.52"/><circle cx="12.2" cy="223.7" r="0.35"/><circle cx="6.9" cy="222.7" r="0.41"/><circle cx="9.4" cy="228.3" r="0.60"/><circle cx="12.2" cy="218.5" r="0.65"/><circle cx="6.6" cy="231.1" r="0.69"/><circle cx="23.4" cy="228.8" r="0.69"/><circle cx="8.7" cy="227.4" r="0.43"/><circle cx="22.2" cy="222.0" r="0.35"/><circle cx="14.1" cy="231.4" r="0.53"/><circle cx="27.8" cy="217.4" r="0.44"/><circle cx="27.3" cy="217.7" r="0.52"/><circle cx="24.2" cy="212.6" r="0.44"/><circle cx="10.7" cy="216.8" r="0.69"/><circle cx="17.0" cy="234.8" r="0.33"/><circle cx="27.0" cy="221.6" r="0.38"/><circle cx="12.3" cy="220.8" r="0.63"/><circle cx="10.7" cy="211.3" r="0.67"/><circle cx="28.4" cy="220.4" r="0.59"/><circle cx="19.0" cy="221.0" r="0.47"/><circle cx="23.8" cy="219.7" r="0.53"/><circle cx="25.3" cy="221.5" r="0.66"/><circle cx="5.2" cy="214.4" r="0.31"/><circle cx="18.1" cy="225.8" r="0.63"/><circle cx="28.0" cy="229.0" r="0.41"/><circle cx="23.9" cy="214.6" r="0.43"/><circle cx="25.0" cy="219.3" r="0.58"/><circle cx="28.7" cy="226.1" r="0.69"/><circle cx="26.2" cy="228.5" r="0.41"/><circle cx="21.4" cy="227.1" r="0.56"/><circle cx="30.8" cy="217.0" r="0.70"/><circle cx="8.2" cy="213.4" r="0.36"/><circle cx="14.9" cy="211.3" r="0.44"/><circle cx="21.8" cy="217.4" r="0.36"/><circle cx="19.1" cy="224.7" r="0.54"/><circle cx="18.1" cy="216.6" r="0.50"/><circle cx="7.0" cy="216.5" r="0.47"/><circle cx="15.3" cy="220.7" r="0.32"/><circle cx="10.9" cy="223.8" r="0.60"/><circle cx="17.2" cy="233.4" r="0.40"/><circle cx="24.5" cy="225.9" r="0.46"/><circle cx="10.0" cy="231.2" r="0.39"/><circle cx="10.0" cy="210.0" r="0.48"/><circle cx="2.2" cy="220.7" r="0.54"/><circle cx="17.8" cy="223.6" r="0.33"/><circle cx="14.8" cy="223.9" r="0.56"/><circle cx="9.9" cy="224.2" r="0.50"/><circle cx="22.4" cy="218.7" r="0.36"/><circle cx="13.9" cy="227.7" r="0.66"/><circle cx="14.0" cy="212.9" r="0.37"/><circle cx="20.6" cy="222.1" r="0.64"/><circle cx="13.6" cy="217.3" r="0.55"/><circle cx="25.8" cy="224.3" r="0.43"/><circle cx="26.5" cy="228.0" r="0.59"/><circle cx="11.4" cy="220.7" r="0.57"/><circle cx="5.8" cy="225.4" r="0.34"/><circle cx="16.9" cy="220.7" r="0.39"/><circle cx="11.9" cy="224.2" r="0.34"/><circle cx="10.8" cy="208.1" r="0.43"/><circle cx="15.3" cy="232.0" r="0.39"/><circle cx="6.8" cy="227.5" r="0.47"/><circle cx="18.2" cy="223.4" r="0.52"/><circle cx="30.7" cy="220.2" r="0.34"/><circle cx="6.7" cy="220.9" r="0.38"/><circle cx="11.7" cy="213.0" r="0.62"/><circle cx="12.8" cy="234.0" r="0.63"/><circle cx="11.9" cy="221.7" r="0.49"/><circle cx="24.8" cy="229.0" r="0.58"/><circle cx="3.5" cy="214.5" r="0.32"/><circle cx="13.7" cy="209.0" r="0.35"/><circle cx="15.4" cy="223.2" r="0.53"/><circle cx="15.2" cy="213.7" r="0.58"/><circle cx="8.3" cy="229.5" r="0.41"/><circle cx="25.6" cy="219.8" r="0.30"/><circle cx="26.9" cy="227.3" r="0.65"/><circle cx="13.3" cy="217.5" r="0.65"/><circle cx="15.7" cy="217.3" r="0.45"/><circle cx="16.3" cy="220.6" r="0.32"/><circle cx="8.1" cy="231.3" r="0.70"/><circle cx="10.6" cy="233.0" r="0.61"/><circle cx="23.7" cy="213.4" r="0.69"/><circle cx="7.5" cy="210.3" r="0.53"/><circle cx="19.8" cy="229.9" r="0.49"/><circle cx="12.2" cy="227.6" r="0.50"/><circle cx="11.3" cy="218.0" r="0.41"/><circle cx="6.6" cy="220.8" r="0.47"/><circle cx="13.7" cy="216.6" r="0.51"/><circle cx="14.4" cy="232.8" r="0.58"/><circle cx="18.5" cy="211.8" r="0.40"/><circle cx="25.4" cy="216.8" r="0.45"/><circle cx="14.3" cy="228.8" r="0.58"/><circle cx="20.5" cy="212.8" r="0.59"/><circle cx="18.7" cy="229.5" r="0.44"/><circle cx="13.7" cy="228.1" r="0.60"/><circle cx="15.9" cy="215.6" r="0.39"/><circle cx="19.0" cy="210.4" r="0.57"/><circle cx="8.5" cy="212.6" r="0.41"/><circle cx="24.0" cy="223.8" r="0.31"/><circle cx="26.4" cy="218.7" r="0.57"/><circle cx="29.4" cy="218.4" r="0.39"/><circle cx="14.4" cy="224.2" r="0.62"/><circle cx="15.7" cy="211.9" r="0.45"/><circle cx="15.3" cy="230.0" r="0.58"/><circle cx="27.3" cy="213.2" r="0.65"/><circle cx="8.2" cy="224.1" r="0.43"/><circle cx="21.8" cy="220.2" r="0.36"/><circle cx="13.7" cy="234.1" r="0.64"/><circle cx="9.8" cy="232.1" r="0.66"/><circle cx="11.5" cy="223.3" r="0.61"/><circle cx="13.5" cy="223.8" r="0.66"/><circle cx="8.5" cy="224.0" r="0.54"/><circle cx="16.5" cy="222.3" r="0.46"/><circle cx="15.8" cy="221.6" r="0.45"/><circle cx="17.0" cy="213.8" r="0.57"/><circle cx="12.6" cy="217.4" r="0.31"/><circle cx="11.4" cy="211.7" r="0.42"/><circle cx="20.7" cy="233.1" r="0.66"/><circle cx="17.6" cy="231.1" r="0.53"/><circle cx="15.6" cy="222.7" r="0.43"/><circle cx="9.7" cy="212.9" r="0.50"/><circle cx="20.8" cy="224.8" r="0.42"/><circle cx="9.4" cy="224.8" r="0.66"/><circle cx="27.6" cy="230.2" r="0.40"/><circle cx="20.5" cy="216.3" r="0.53"/><circle cx="15.0" cy="222.4" r="0.62"/><circle cx="19.0" cy="215.1" r="0.61"/><circle cx="1.7" cy="222.8" r="0.32"/><circle cx="12.0" cy="224.9" r="0.55"/><circle cx="18.9" cy="208.6" r="0.52"/><circle cx="6.5" cy="229.0" r="0.34"/><circle cx="15.7" cy="232.8" r="0.48"/><circle cx="20.1" cy="220.9" r="0.48"/><circle cx="16.6" cy="221.3" r="0.34"/><circle cx="23.4" cy="225.2" r="0.47"/><circle cx="9.4" cy="220.7" r="0.58"/><circle cx="1.7" cy="219.6" r="0.37"/><circle cx="6.7" cy="220.4" r="0.45"/><circle cx="20.3" cy="216.8" r="0.65"/><circle cx="11.6" cy="226.7" r="0.55"/><circle cx="10.0" cy="218.5" r="0.33"/><circle cx="24.4" cy="218.9" r="0.35"/><circle cx="10.8" cy="213.0" r="0.43"/><circle cx="10.1" cy="232.1" r="0.44"/><circle cx="3.8" cy="227.8" r="0.44"/><circle cx="12.4" cy="223.7" r="0.56"/><circle cx="11.8" cy="213.6" r="0.46"/><circle cx="17.9" cy="233.1" r="0.48"/><circle cx="20.6" cy="214.2" r="0.59"/><circle cx="22.4" cy="222.0" r="0.68"/><circle cx="11.6" cy="210.9" r="0.50"/><circle cx="10.9" cy="221.9" r="0.37"/><circle cx="9.1" cy="212.1" r="0.40"/><circle cx="13.7" cy="217.7" r="0.55"/><circle cx="21.2" cy="229.2" r="0.43"/><circle cx="12.2" cy="219.7" r="0.49"/><circle cx="13.1" cy="218.2" r="0.42"/><circle cx="12.0" cy="212.2" r="0.55"/><circle cx="18.5" cy="211.2" r="0.39"/><circle cx="4.0" cy="225.4" r="0.53"/><circle cx="16.7" cy="213.4" r="0.48"/><circle cx="29.6" cy="218.6" r="0.56"/><circle cx="25.3" cy="227.5" r="0.31"/><circle cx="30.0" cy="215.4" r="0.59"/><circle cx="15.0" cy="233.6" r="0.37"/><circle cx="21.3" cy="212.6" r="0.31"/><circle cx="23.6" cy="215.6" r="0.63"/><circle cx="12.6" cy="212.1" r="0.64"/><circle cx="20.6" cy="233.6" r="0.44"/><circle cx="24.2" cy="222.2" r="0.33"/><circle cx="26.7" cy="225.6" r="0.35"/><circle cx="20.4" cy="226.6" r="0.41"/><circle cx="28.9" cy="214.7" r="0.65"/><circle cx="25.6" cy="220.5" r="0.62"/><circle cx="13.7" cy="234.1" r="0.62"/><circle cx="15.8" cy="215.3" r="0.34"/><circle cx="25.9" cy="216.6" r="0.54"/><circle cx="19.5" cy="217.7" r="0.58"/><circle cx="3.8" cy="223.7" r="0.48"/><circle cx="21.3" cy="233.9" r="0.41"/><circle cx="16.1" cy="208.5" r="0.40"/><circle cx="13.6" cy="213.4" r="0.39"/><circle cx="19.5" cy="234.3" r="0.45"/><circle cx="6.6" cy="220.4" r="0.31"/><circle cx="16.8" cy="209.3" r="0.65"/><circle cx="12.8" cy="225.3" r="0.44"/><circle cx="15.2" cy="210.2" r="0.46"/><circle cx="11.7" cy="220.3" r="0.67"/><circle cx="6.7" cy="222.6" r="0.61"/><circle cx="20.5" cy="231.9" r="0.44"/><circle cx="17.9" cy="217.9" r="0.41"/><circle cx="10.1" cy="214.2" r="0.45"/><circle cx="11.2" cy="218.3" r="0.47"/><circle cx="29.6" cy="221.1" r="0.40"/><circle cx="21.6" cy="212.4" r="0.54"/><circle cx="13.5" cy="218.1" r="0.61"/><circle cx="12.9" cy="233.4" r="0.61"/><circle cx="10.7" cy="209.9" r="0.47"/><circle cx="9.7" cy="208.9" r="0.38"/><circle cx="23.6" cy="225.9" r="0.50"/><circle cx="20.1" cy="225.6" r="0.65"/><circle cx="12.9" cy="223.9" r="0.37"/><circle cx="11.6" cy="218.6" r="0.49"/><circle cx="7.6" cy="219.0" r="0.50"/><circle cx="17.2" cy="220.0" r="0.67"/><circle cx="17.2" cy="222.9" r="0.61"/><circle cx="7.1" cy="216.9" r="0.39"/><circle cx="17.9" cy="214.2" r="0.59"/><circle cx="18.0" cy="230.9" r="0.56"/><circle cx="9.8" cy="227.5" r="0.33"/><circle cx="9.0" cy="212.2" r="0.36"/><circle cx="4.7" cy="217.4" r="0.34"/><circle cx="23.8" cy="210.1" r="0.32"/><circle cx="16.5" cy="224.2" r="0.40"/><circle cx="24.9" cy="225.7" r="0.40"/><circle cx="13.6" cy="229.4" r="0.45"/><circle cx="19.5" cy="209.8" r="0.35"/><circle cx="16.6" cy="221.8" r="0.43"/><circle cx="25.9" cy="228.1" r="0.61"/><circle cx="22.4" cy="220.9" r="0.31"/><circle cx="16.9" cy="212.8" r="0.67"/><circle cx="10.7" cy="225.4" r="0.33"/><circle cx="26.0" cy="218.0" r="0.48"/><circle cx="4.7" cy="225.6" r="0.63"/><circle cx="11.2" cy="221.7" r="0.46"/><circle cx="23.3" cy="215.8" r="0.56"/><circle cx="7.7" cy="217.8" r="0.53"/><circle cx="16.8" cy="230.9" r="0.65"/><circle cx="23.7" cy="224.7" r="0.65"/><circle cx="17.6" cy="220.9" r="0.55"/><circle cx="7.4" cy="211.7" r="0.49"/><circle cx="21.5" cy="226.0" r="0.59"/><circle cx="15.7" cy="215.6" r="0.56"/><circle cx="10.0" cy="211.9" r="0.31"/><circle cx="9.4" cy="223.6" r="0.54"/><circle cx="14.2" cy="224.5" r="0.57"/><circle cx="13.5" cy="232.8" r="0.42"/><circle cx="3.8" cy="217.5" r="0.35"/><circle cx="16.1" cy="218.2" r="0.67"/><circle cx="28.7" cy="222.8" r="0.45"/><circle cx="20.2" cy="228.2" r="0.50"/><circle cx="12.8" cy="223.0" r="0.51"/><circle cx="11.9" cy="234.0" r="0.45"/><circle cx="10.8" cy="223.3" r="0.69"/><circle cx="11.5" cy="230.7" r="0.63"/><circle cx="6.6" cy="228.4" r="0.41"/><circle cx="18.2" cy="222.3" r="0.48"/><circle cx="20.5" cy="217.2" r="0.48"/><circle cx="17.1" cy="214.6" r="0.36"/><circle cx="7.6" cy="220.0" r="0.68"/><circle cx="21.6" cy="217.4" r="0.52"/><circle cx="14.8" cy="221.9" r="0.48"/><circle cx="22.8" cy="217.5" r="0.53"/><circle cx="15.8" cy="218.4" r="0.67"/><circle cx="22.2" cy="225.3" r="0.59"/><circle cx="24.8" cy="221.9" r="0.35"/><circle cx="15.3" cy="221.2" r="0.36"/></g><circle cx="50.5" cy="221.0" r="8" fill="#333" filter="url(#bl2)" opacity="0.7"/><g fill="#000" opacity="0.8"><circle cx="51.0" cy="223.6" r="0.37"/><circle cx="53.3" cy="228.6" r="0.41"/><circle cx="53.6" cy="214.6" r="0.50"/><circle cx="51.1" cy="231.8" r="0.34"/><circle cx="50.4" cy="218.0" r="1.06"/><circle cx="43.1" cy="225.8" r="0.99"/><circle cx="52.4" cy="222.4" r="0.85"/><circle cx="42.1" cy="215.8" r="0.52"/><circle cx="46.1" cy="221.1" r="0.65"/><circle cx="48.8" cy="229.5" r="0.54"/><circle cx="49.1" cy="230.1" r="0.37"/><circle cx="53.0" cy="213.5" r="0.48"/><circle cx="56.5" cy="226.3" r="0.70"/><circle cx="49.2" cy="214.5" r="0.63"/><circle cx="54.8" cy="217.6" r="1.08"/><circle cx="59.8" cy="213.5" r="1.05"/><circle cx="50.0" cy="231.6" r="0.79"/><circle cx="53.9" cy="232.5" r="0.82"/><circle cx="53.6" cy="213.1" r="0.36"/><circle cx="53.3" cy="217.8" r="0.51"/><circle cx="47.2" cy="218.0" r="0.67"/><circle cx="49.8" cy="218.1" r="0.83"/><circle cx="56.6" cy="225.7" r="0.82"/><circle cx="49.8" cy="219.3" r="0.45"/><circle cx="57.1" cy="219.3" r="0.64"/><circle cx="43.7" cy="227.8" r="0.89"/><circle cx="46.4" cy="215.4" r="0.76"/><circle cx="46.1" cy="220.6" r="1.06"/><circle cx="60.6" cy="218.7" r="1.09"/><circle cx="40.0" cy="223.3" r="0.49"/><circle cx="50.1" cy="211.2" r="1.05"/><circle cx="56.1" cy="211.4" r="0.51"/><circle cx="52.3" cy="213.5" r="0.55"/><circle cx="43.4" cy="228.7" r="0.97"/><circle cx="55.8" cy="213.2" r="0.44"/><circle cx="55.3" cy="228.1" r="0.47"/><circle cx="48.9" cy="223.6" r="0.42"/><circle cx="49.5" cy="216.2" r="0.98"/><circle cx="45.3" cy="230.6" r="0.54"/><circle cx="49.7" cy="227.8" r="0.31"/><circle cx="44.3" cy="223.6" r="0.31"/><circle cx="54.8" cy="215.9" r="0.30"/><circle cx="55.3" cy="219.8" r="0.50"/><circle cx="53.5" cy="221.5" r="0.87"/><circle cx="43.6" cy="217.1" r="0.50"/><circle cx="47.8" cy="232.5" r="0.60"/><circle cx="61.6" cy="220.3" r="0.40"/><circle cx="51.2" cy="220.0" r="0.87"/><circle cx="54.0" cy="212.0" r="0.74"/><circle cx="52.0" cy="217.4" r="0.73"/><circle cx="49.8" cy="227.9" r="0.45"/><circle cx="48.3" cy="212.7" r="0.92"/><circle cx="44.4" cy="214.6" r="1.04"/><circle cx="53.8" cy="213.1" r="0.56"/><circle cx="56.5" cy="218.1" r="0.38"/><circle cx="45.6" cy="229.4" r="1.05"/><circle cx="44.8" cy="213.6" r="1.05"/><circle cx="51.8" cy="213.7" r="0.67"/><circle cx="50.9" cy="215.0" r="0.39"/><circle cx="42.8" cy="213.8" r="0.50"/><circle cx="46.0" cy="210.8" r="0.40"/><circle cx="55.7" cy="226.9" r="0.57"/><circle cx="61.9" cy="217.3" r="0.66"/><circle cx="52.9" cy="212.2" r="0.44"/><circle cx="54.6" cy="220.3" r="0.36"/><circle cx="49.5" cy="221.3" r="0.68"/><circle cx="40.6" cy="227.1" r="0.63"/><circle cx="56.6" cy="212.6" r="0.77"/><circle cx="51.0" cy="226.9" r="0.69"/><circle cx="43.2" cy="226.7" r="0.70"/><circle cx="46.6" cy="229.0" r="1.10"/><circle cx="52.3" cy="227.0" r="0.31"/><circle cx="52.3" cy="222.2" r="0.64"/><circle cx="55.5" cy="212.7" r="1.07"/><circle cx="55.0" cy="213.6" r="0.76"/><circle cx="57.2" cy="221.5" r="0.51"/><circle cx="48.8" cy="219.4" r="0.73"/><circle cx="44.9" cy="226.5" r="0.62"/><circle cx="58.5" cy="227.0" r="0.94"/><circle cx="47.8" cy="219.1" r="0.78"/><circle cx="58.7" cy="212.4" r="0.91"/><circle cx="61.1" cy="224.1" r="0.83"/><circle cx="48.6" cy="232.3" r="0.96"/><circle cx="54.6" cy="217.8" r="0.76"/><circle cx="46.3" cy="225.0" r="0.91"/><circle cx="45.9" cy="216.9" r="0.73"/><circle cx="58.2" cy="217.3" r="1.03"/><circle cx="39.6" cy="216.2" r="0.32"/><circle cx="42.4" cy="223.1" r="0.88"/><circle cx="59.4" cy="219.2" r="0.68"/><circle cx="45.0" cy="214.9" r="0.86"/><circle cx="51.4" cy="220.7" r="0.56"/><circle cx="52.1" cy="219.4" r="0.93"/><circle cx="59.6" cy="222.8" r="0.94"/><circle cx="51.0" cy="227.7" r="0.48"/><circle cx="48.2" cy="213.1" r="0.78"/><circle cx="46.5" cy="228.8" r="1.06"/><circle cx="52.6" cy="209.5" r="0.50"/><circle cx="43.8" cy="220.3" r="0.58"/><circle cx="51.9" cy="217.0" r="0.75"/><circle cx="52.2" cy="209.6" r="0.31"/><circle cx="49.5" cy="228.8" r="1.05"/><circle cx="56.1" cy="230.2" r="0.62"/><circle cx="39.5" cy="217.6" r="0.35"/><circle cx="48.6" cy="224.5" r="0.41"/><circle cx="47.3" cy="230.1" r="0.76"/><circle cx="58.1" cy="228.3" r="0.71"/><circle cx="57.1" cy="229.3" r="0.96"/><circle cx="52.9" cy="232.3" r="0.95"/><circle cx="50.5" cy="221.2" r="0.99"/><circle cx="51.9" cy="218.4" r="0.91"/><circle cx="51.8" cy="212.0" r="0.97"/><circle cx="56.6" cy="220.4" r="0.97"/><circle cx="55.8" cy="218.1" r="0.85"/><circle cx="46.1" cy="211.0" r="0.75"/><circle cx="49.7" cy="226.2" r="0.73"/><circle cx="57.7" cy="229.2" r="1.01"/><circle cx="51.0" cy="230.7" r="0.84"/><circle cx="57.9" cy="228.2" r="0.91"/><circle cx="49.5" cy="223.8" r="0.53"/></g><path d="M71.5 210.0 L97.5 209.0" stroke="#333" stroke-width="1.2"/><path d="M71.5 213.7 L97.5 212.7" stroke="#333" stroke-width="1.2"/><path d="M71.5 217.4 L97.5 216.4" stroke="#333" stroke-width="1.2"/><path d="M71.5 221.1 L97.5 220.1" stroke="#333" stroke-width="1.2"/><path d="M71.5 224.8 L97.5 223.8" stroke="#333" stroke-width="1.2"/><path d="M71.5 228.5 L97.5 227.5" stroke="#333" stroke-width="1.2"/><path d="M71.5 232.2 L97.5 231.2" stroke="#333" stroke-width="1.2"/><g fill="#000" opacity="0.85"><circle cx="119.4" cy="214.1" r="1.13"/><circle cx="120.0" cy="223.4" r="0.71"/><circle cx="121.2" cy="218.5" r="0.47"/><circle cx="118.5" cy="218.4" r="1.00"/><circle cx="122.6" cy="223.4" r="1.00"/><circle cx="123.0" cy="216.4" r="0.80"/><circle cx="124.2" cy="222.1" r="0.62"/><circle cx="120.7" cy="212.3" r="1.11"/><circle cx="109.8" cy="219.2" r="0.51"/><circle cx="114.5" cy="224.5" r="0.65"/><circle cx="118.2" cy="216.6" r="0.69"/><circle cx="116.5" cy="230.9" r="0.97"/><circle cx="112.4" cy="221.7" r="1.23"/><circle cx="124.8" cy="218.5" r="0.91"/><circle cx="121.7" cy="217.3" r="0.63"/><circle cx="124.3" cy="225.4" r="1.09"/><circle cx="122.2" cy="226.5" r="1.29"/><circle cx="112.4" cy="221.7" r="1.16"/><circle cx="123.3" cy="217.2" r="0.51"/><circle cx="112.5" cy="214.1" r="1.23"/><circle cx="115.6" cy="216.4" r="0.86"/><circle cx="116.9" cy="227.6" r="0.82"/><circle cx="127.3" cy="215.6" r="1.23"/><circle cx="107.8" cy="222.5" r="0.53"/><circle cx="125.9" cy="217.0" r="1.19"/><circle cx="109.1" cy="226.7" r="0.42"/><circle cx="124.1" cy="213.0" r="0.74"/><circle cx="120.6" cy="217.2" r="1.08"/><circle cx="112.2" cy="222.3" r="0.58"/><circle cx="121.3" cy="212.3" r="0.48"/><circle cx="122.9" cy="220.4" r="0.74"/><circle cx="111.7" cy="225.0" r="1.20"/><circle cx="126.4" cy="218.2" r="0.73"/><circle cx="120.2" cy="222.4" r="0.87"/><circle cx="112.6" cy="217.6" r="1.28"/><circle cx="113.5" cy="224.0" r="0.78"/><circle cx="123.5" cy="230.3" r="0.93"/><circle cx="112.1" cy="219.3" r="0.63"/><circle cx="115.6" cy="227.6" r="0.80"/><circle cx="126.2" cy="220.0" r="0.59"/><circle cx="121.9" cy="222.2" r="0.71"/><circle cx="120.6" cy="211.0" r="0.61"/><circle cx="119.8" cy="214.4" r="0.88"/><circle cx="116.9" cy="220.7" r="0.46"/><circle cx="114.1" cy="213.4" r="0.74"/><circle cx="127.0" cy="216.2" r="0.67"/><circle cx="125.5" cy="224.1" r="0.99"/><circle cx="118.8" cy="222.7" r="0.84"/><circle cx="127.4" cy="223.0" r="0.96"/><circle cx="117.3" cy="227.7" r="0.61"/><circle cx="120.0" cy="224.6" r="1.13"/><circle cx="109.9" cy="223.6" r="0.71"/><circle cx="121.3" cy="213.4" r="0.99"/><circle cx="112.4" cy="225.9" r="0.57"/><circle cx="127.0" cy="219.6" r="0.88"/><circle cx="116.7" cy="218.9" r="0.70"/><circle cx="119.7" cy="230.9" r="0.41"/><circle cx="109.0" cy="224.4" r="1.10"/><circle cx="117.5" cy="215.7" r="0.61"/><circle cx="117.0" cy="215.9" r="1.05"/><circle cx="113.0" cy="228.6" r="0.92"/><circle cx="122.9" cy="211.0" r="0.74"/><circle cx="119.2" cy="220.9" r="1.19"/><circle cx="126.0" cy="222.4" r="0.75"/><circle cx="119.2" cy="215.5" r="0.59"/><circle cx="120.1" cy="213.5" r="1.08"/><circle cx="117.0" cy="221.1" r="1.09"/><circle cx="119.9" cy="227.9" r="0.40"/><circle cx="118.0" cy="229.6" r="1.09"/><circle cx="114.1" cy="215.9" r="1.06"/><circle cx="116.4" cy="217.3" r="0.88"/><circle cx="111.1" cy="215.8" r="0.58"/><circle cx="116.3" cy="226.4" r="0.49"/><circle cx="113.2" cy="228.4" r="0.92"/><circle cx="122.7" cy="229.1" r="0.51"/><circle cx="118.5" cy="217.5" r="0.49"/><circle cx="118.4" cy="228.4" r="0.64"/><circle cx="126.4" cy="214.0" r="0.66"/><circle cx="118.5" cy="212.2" r="0.91"/><circle cx="118.2" cy="231.7" r="1.26"/><circle cx="124.1" cy="221.5" r="0.69"/><circle cx="120.6" cy="227.3" r="1.21"/><circle cx="128.3" cy="222.5" r="0.68"/><circle cx="128.8" cy="221.9" r="0.65"/><circle cx="119.2" cy="223.9" r="0.73"/><circle cx="121.4" cy="223.7" r="0.63"/><circle cx="112.5" cy="217.8" r="0.67"/><circle cx="109.2" cy="219.5" r="1.05"/><circle cx="112.7" cy="229.7" r="1.11"/><circle cx="112.0" cy="218.3" r="0.70"/><circle cx="125.3" cy="228.6" r="0.95"/><circle cx="127.0" cy="227.1" r="1.20"/><circle cx="127.2" cy="222.9" r="0.61"/><circle cx="108.9" cy="218.8" r="0.72"/><circle cx="109.9" cy="221.1" r="0.57"/><circle cx="113.9" cy="216.3" r="1.28"/><circle cx="121.9" cy="229.3" r="0.44"/><circle cx="118.0" cy="224.0" r="0.53"/><circle cx="114.7" cy="220.3" r="1.12"/><circle cx="125.3" cy="225.7" r="1.17"/><circle cx="121.6" cy="224.1" r="1.09"/><circle cx="108.1" cy="223.0" r="0.70"/><circle cx="109.9" cy="227.4" r="0.71"/><circle cx="128.5" cy="218.8" r="0.58"/><circle cx="108.3" cy="218.0" r="0.51"/><circle cx="124.0" cy="213.3" r="1.07"/><circle cx="116.3" cy="219.4" r="1.26"/><circle cx="126.1" cy="226.7" r="1.05"/><circle cx="114.9" cy="229.0" r="0.77"/><circle cx="118.5" cy="219.3" r="1.24"/><circle cx="111.3" cy="227.4" r="0.82"/><circle cx="120.5" cy="216.1" r="0.89"/><circle cx="125.6" cy="222.1" r="0.47"/><circle cx="124.0" cy="214.3" r="0.78"/><circle cx="129.0" cy="219.3" r="1.26"/><circle cx="126.2" cy="225.4" r="1.05"/><circle cx="117.8" cy="220.4" r="1.23"/><circle cx="111.0" cy="224.0" r="1.13"/><circle cx="118.3" cy="222.3" r="1.23"/><circle cx="118.3" cy="222.6" r="0.52"/><circle cx="127.7" cy="220.7" r="0.59"/><circle cx="124.7" cy="229.2" r="1.00"/><circle cx="115.7" cy="219.4" r="0.77"/><circle cx="118.8" cy="220.9" r="0.78"/><circle cx="128.8" cy="224.9" r="0.49"/><circle cx="128.0" cy="218.2" r="1.06"/><circle cx="127.0" cy="223.3" r="0.84"/><circle cx="115.0" cy="221.2" r="0.86"/><circle cx="119.5" cy="217.9" r="1.19"/><circle cx="114.1" cy="223.4" r="0.62"/><circle cx="110.3" cy="223.1" r="0.91"/><circle cx="124.2" cy="216.3" r="0.86"/><circle cx="122.9" cy="220.7" r="0.41"/><circle cx="115.9" cy="225.8" r="0.51"/><circle cx="117.2" cy="221.7" r="1.23"/><circle cx="108.4" cy="222.0" r="1.03"/><circle cx="117.3" cy="211.8" r="0.67"/><circle cx="117.9" cy="216.8" r="0.90"/><circle cx="110.7" cy="215.7" r="0.55"/><circle cx="113.0" cy="229.1" r="1.12"/><circle cx="121.5" cy="220.6" r="0.59"/><circle cx="125.6" cy="226.6" r="1.07"/><circle cx="112.8" cy="213.4" r="0.86"/><circle cx="108.8" cy="217.0" r="0.98"/><circle cx="114.0" cy="214.4" r="0.84"/><circle cx="118.8" cy="213.1" r="0.52"/><circle cx="112.6" cy="223.9" r="0.79"/><circle cx="113.0" cy="218.8" r="0.75"/><circle cx="113.1" cy="223.7" r="1.27"/><circle cx="119.3" cy="221.5" r="1.05"/></g><g fill="#000" opacity="0.6"><circle cx="146.6" cy="225.5" r="0.71"/><circle cx="149.1" cy="224.8" r="0.31"/><circle cx="160.6" cy="212.8" r="0.50"/><circle cx="146.5" cy="222.3" r="0.34"/><circle cx="160.9" cy="214.3" r="0.47"/><circle cx="152.2" cy="230.7" r="0.86"/><circle cx="145.8" cy="222.3" r="0.46"/><circle cx="155.8" cy="210.5" r="0.90"/><circle cx="159.1" cy="226.8" r="0.99"/><circle cx="150.9" cy="213.7" r="0.40"/><circle cx="161.7" cy="224.7" r="0.35"/><circle cx="155.9" cy="212.2" r="0.63"/><circle cx="161.4" cy="213.8" r="0.73"/><circle cx="159.6" cy="226.1" r="0.59"/><circle cx="152.5" cy="232.5" r="0.81"/><circle cx="156.1" cy="224.4" r="0.54"/><circle cx="147.0" cy="218.3" r="0.61"/><circle cx="154.2" cy="217.0" r="0.80"/><circle cx="146.9" cy="231.1" r="0.97"/><circle cx="148.3" cy="228.9" r="0.38"/><circle cx="144.9" cy="225.8" r="0.75"/><circle cx="151.6" cy="222.3" r="0.39"/><circle cx="148.6" cy="219.5" r="0.51"/><circle cx="144.2" cy="213.4" r="0.66"/><circle cx="152.2" cy="229.7" r="0.49"/><circle cx="153.3" cy="217.1" r="0.48"/><circle cx="142.0" cy="225.3" r="0.42"/><circle cx="153.8" cy="224.3" r="0.45"/><circle cx="149.1" cy="227.0" r="0.83"/><circle cx="146.2" cy="225.4" r="0.58"/><circle cx="154.2" cy="209.8" r="0.60"/><circle cx="157.1" cy="218.5" r="0.98"/><circle cx="143.1" cy="219.5" r="0.57"/><circle cx="152.0" cy="224.6" r="0.92"/><circle cx="146.4" cy="228.5" r="0.62"/><circle cx="147.9" cy="220.2" r="0.42"/><circle cx="147.6" cy="229.2" r="0.68"/><circle cx="162.3" cy="221.1" r="0.60"/><circle cx="157.4" cy="223.2" r="0.45"/><circle cx="156.2" cy="213.5" r="0.53"/><circle cx="152.6" cy="226.7" r="0.50"/><circle cx="146.6" cy="229.6" r="0.85"/><circle cx="148.9" cy="210.4" r="0.76"/><circle cx="153.9" cy="222.2" r="0.42"/><circle cx="152.1" cy="229.2" r="0.88"/><circle cx="146.3" cy="217.3" r="0.47"/><circle cx="162.6" cy="219.8" r="0.54"/><circle cx="163.9" cy="224.4" r="0.48"/><circle cx="154.4" cy="218.3" r="0.76"/><circle cx="145.6" cy="229.8" r="0.51"/><circle cx="156.2" cy="223.7" r="0.86"/><circle cx="161.6" cy="219.8" r="0.78"/><circle cx="151.4" cy="226.4" r="0.36"/><circle cx="154.3" cy="220.8" r="0.73"/><circle cx="149.9" cy="224.5" r="0.61"/><circle cx="157.2" cy="218.8" r="0.42"/><circle cx="146.1" cy="214.2" r="0.66"/><circle cx="157.2" cy="231.0" r="0.38"/><circle cx="154.9" cy="225.5" r="0.66"/><circle cx="144.2" cy="222.2" r="0.81"/><circle cx="158.5" cy="216.3" r="0.33"/><circle cx="153.0" cy="220.0" r="0.52"/><circle cx="158.0" cy="227.9" r="0.85"/><circle cx="156.5" cy="225.2" r="0.90"/><circle cx="151.3" cy="218.1" r="0.78"/><circle cx="154.4" cy="214.3" r="0.41"/><circle cx="149.2" cy="215.9" r="0.39"/><circle cx="156.0" cy="227.0" r="0.39"/><circle cx="146.2" cy="226.5" r="0.69"/><circle cx="143.9" cy="227.0" r="0.36"/><circle cx="147.0" cy="231.1" r="0.91"/><circle cx="161.5" cy="216.1" r="0.68"/><circle cx="154.5" cy="212.7" r="0.38"/><circle cx="152.4" cy="224.0" r="0.91"/><circle cx="149.4" cy="227.3" r="0.68"/><circle cx="160.3" cy="226.8" r="0.86"/><circle cx="155.7" cy="210.3" r="0.52"/><circle cx="158.7" cy="229.1" r="0.79"/><circle cx="148.1" cy="225.6" r="0.41"/><circle cx="156.2" cy="214.4" r="0.87"/><circle cx="149.3" cy="226.1" r="0.66"/><circle cx="152.2" cy="209.9" r="0.55"/><circle cx="150.1" cy="214.5" r="0.90"/><circle cx="153.0" cy="212.6" r="0.55"/><circle cx="150.8" cy="232.0" r="0.86"/><circle cx="151.6" cy="223.6" r="0.44"/><circle cx="154.2" cy="220.6" r="0.87"/><circle cx="144.2" cy="219.5" r="0.68"/><circle cx="145.4" cy="225.5" r="0.36"/><circle cx="155.2" cy="219.5" r="0.40"/><circle cx="148.2" cy="212.9" r="0.86"/><circle cx="148.4" cy="210.2" r="0.34"/><circle cx="157.5" cy="221.3" r="0.85"/><circle cx="157.2" cy="227.7" r="0.84"/><circle cx="157.0" cy="227.8" r="0.93"/><circle cx="152.4" cy="214.1" r="0.64"/><circle cx="150.5" cy="232.5" r="0.85"/><circle cx="150.0" cy="215.7" r="0.81"/><circle cx="142.1" cy="221.9" r="0.55"/><circle cx="159.5" cy="214.5" r="0.62"/><circle cx="142.8" cy="217.0" r="0.67"/><circle cx="153.1" cy="220.8" r="0.93"/><circle cx="150.8" cy="213.4" r="0.89"/><circle cx="156.2" cy="226.0" r="0.80"/><circle cx="155.5" cy="215.1" r="1.00"/><circle cx="151.4" cy="219.5" r="0.39"/><circle cx="160.1" cy="225.0" r="0.53"/><circle cx="152.0" cy="228.4" r="0.35"/><circle cx="161.6" cy="215.2" r="0.69"/><circle cx="146.9" cy="223.0" r="0.72"/><circle cx="145.7" cy="230.7" r="0.97"/><circle cx="150.9" cy="210.4" r="0.35"/><circle cx="157.0" cy="225.4" r="0.39"/><circle cx="142.0" cy="226.6" r="0.88"/><circle cx="157.2" cy="219.8" r="0.46"/><circle cx="158.0" cy="221.8" r="0.34"/><circle cx="146.8" cy="220.0" r="0.77"/><circle cx="144.3" cy="217.7" r="0.51"/><circle cx="151.6" cy="211.4" r="0.80"/><circle cx="145.1" cy="222.4" r="0.50"/><circle cx="159.9" cy="222.9" r="0.73"/><circle cx="156.8" cy="231.1" r="0.92"/><circle cx="158.9" cy="212.5" r="0.64"/><circle cx="155.0" cy="225.9" r="0.82"/><circle cx="155.7" cy="220.7" r="0.30"/><circle cx="148.6" cy="226.1" r="0.72"/><circle cx="160.7" cy="228.0" r="0.54"/><circle cx="157.7" cy="217.7" r="0.51"/><circle cx="157.8" cy="231.5" r="0.71"/><circle cx="153.5" cy="219.0" r="0.68"/><circle cx="151.2" cy="209.2" r="0.96"/><circle cx="157.8" cy="225.0" r="1.00"/><circle cx="141.1" cy="218.5" r="0.48"/><circle cx="164.0" cy="222.9" r="0.48"/><circle cx="146.5" cy="218.6" r="0.70"/><circle cx="163.1" cy="216.3" r="0.91"/><circle cx="152.0" cy="231.7" r="0.31"/><circle cx="142.5" cy="226.8" r="0.48"/><circle cx="146.7" cy="227.4" r="0.47"/><circle cx="150.1" cy="212.0" r="0.37"/></g><g fill="#000" opacity="0.6"><circle cx="18.7" cy="253.8" r="0.58"/><circle cx="14.3" cy="258.1" r="0.33"/><circle cx="27.0" cy="254.8" r="0.48"/><circle cx="19.8" cy="243.7" r="0.67"/><circle cx="11.1" cy="253.9" r="0.51"/><circle cx="26.4" cy="253.8" r="0.57"/><circle cx="20.4" cy="249.1" r="0.52"/><circle cx="19.1" cy="251.3" r="0.64"/><circle cx="24.7" cy="256.3" r="0.53"/><circle cx="23.4" cy="264.1" r="0.48"/><circle cx="19.3" cy="261.5" r="0.54"/><circle cx="16.2" cy="255.2" r="0.34"/><circle cx="15.7" cy="251.5" r="0.40"/><circle cx="20.4" cy="244.7" r="0.65"/><circle cx="16.7" cy="255.5" r="0.60"/><circle cx="11.2" cy="251.2" r="0.31"/><circle cx="11.9" cy="257.1" r="0.54"/><circle cx="21.2" cy="254.4" r="0.33"/><circle cx="15.4" cy="252.0" r="0.39"/><circle cx="5.5" cy="259.4" r="0.43"/><circle cx="13.4" cy="262.0" r="0.36"/><circle cx="8.6" cy="260.6" r="0.43"/><circle cx="17.7" cy="250.8" r="0.34"/><circle cx="11.3" cy="249.7" r="0.67"/><circle cx="24.4" cy="261.2" r="0.57"/><circle cx="14.1" cy="257.5" r="0.54"/><circle cx="16.9" cy="247.4" r="0.49"/><circle cx="13.0" cy="246.8" r="0.47"/><circle cx="19.5" cy="262.0" r="0.52"/><circle cx="26.0" cy="247.8" r="0.52"/><circle cx="14.2" cy="259.3" r="0.55"/><circle cx="16.1" cy="249.8" r="0.58"/><circle cx="23.3" cy="255.0" r="0.68"/><circle cx="7.9" cy="258.6" r="0.65"/><circle cx="18.3" cy="261.1" r="0.69"/><circle cx="21.9" cy="257.4" r="0.49"/><circle cx="16.2" cy="245.9" r="0.67"/><circle cx="16.4" cy="254.8" r="0.33"/><circle cx="23.6" cy="256.7" r="0.31"/><circle cx="7.5" cy="253.5" r="0.38"/><circle cx="20.9" cy="249.4" r="0.68"/><circle cx="10.9" cy="262.0" r="0.52"/><circle cx="15.7" cy="265.3" r="0.30"/><circle cx="16.5" cy="261.1" r="0.65"/><circle cx="14.9" cy="255.0" r="0.42"/><circle cx="8.3" cy="248.3" r="0.34"/><circle cx="17.7" cy="248.3" r="0.51"/><circle cx="10.1" cy="258.5" r="0.70"/><circle cx="26.5" cy="249.4" r="0.59"/><circle cx="15.4" cy="251.5" r="0.31"/><circle cx="21.1" cy="246.7" r="0.55"/><circle cx="14.4" cy="260.0" r="0.67"/><circle cx="15.4" cy="254.8" r="0.44"/><circle cx="15.1" cy="256.9" r="0.69"/><circle cx="25.2" cy="248.9" r="0.30"/><circle cx="13.7" cy="256.6" r="0.59"/><circle cx="20.3" cy="245.3" r="0.62"/><circle cx="17.2" cy="255.6" r="0.34"/><circle cx="22.4" cy="246.0" r="0.51"/><circle cx="17.6" cy="265.9" r="0.35"/><circle cx="16.4" cy="255.2" r="0.69"/><circle cx="7.7" cy="260.2" r="0.62"/><circle cx="6.1" cy="249.2" r="0.61"/><circle cx="27.0" cy="249.8" r="0.33"/><circle cx="16.5" cy="250.1" r="0.43"/><circle cx="10.0" cy="265.0" r="0.32"/><circle cx="13.3" cy="256.4" r="0.70"/><circle cx="6.8" cy="255.2" r="0.51"/><circle cx="17.2" cy="248.8" r="0.47"/><circle cx="16.2" cy="245.3" r="0.66"/><circle cx="12.5" cy="265.1" r="0.59"/><circle cx="10.2" cy="251.9" r="0.53"/><circle cx="19.1" cy="256.4" r="0.42"/><circle cx="17.9" cy="256.4" r="0.59"/><circle cx="15.5" cy="246.1" r="0.38"/><circle cx="14.6" cy="244.5" r="0.55"/><circle cx="17.7" cy="263.4" r="0.46"/><circle cx="16.0" cy="258.8" r="0.65"/><circle cx="8.7" cy="246.5" r="0.37"/><circle cx="15.8" cy="263.0" r="0.32"/></g><g fill="#000" opacity="0.7"><circle cx="49.9" cy="260.2" r="0.64"/><circle cx="52.0" cy="251.9" r="0.75"/><circle cx="48.6" cy="251.5" r="0.56"/><circle cx="53.0" cy="255.0" r="0.85"/><circle cx="51.0" cy="256.5" r="0.46"/><circle cx="50.1" cy="253.0" r="0.31"/><circle cx="50.4" cy="255.0" r="0.48"/><circle cx="49.8" cy="257.1" r="0.30"/><circle cx="50.4" cy="258.4" r="0.53"/><circle cx="49.3" cy="257.2" r="0.53"/><circle cx="52.7" cy="255.9" r="0.82"/><circle cx="50.4" cy="255.0" r="0.46"/><circle cx="51.8" cy="252.1" r="0.44"/><circle cx="51.5" cy="248.2" r="0.39"/><circle cx="48.7" cy="255.0" r="0.38"/><circle cx="49.7" cy="260.4" r="0.77"/><circle cx="49.2" cy="250.7" r="0.56"/><circle cx="50.7" cy="255.3" r="0.89"/><circle cx="52.1" cy="249.3" r="0.35"/><circle cx="50.6" cy="252.2" r="0.54"/><circle cx="51.2" cy="262.0" r="0.87"/><circle cx="51.2" cy="251.1" r="0.96"/><circle cx="50.4" cy="260.7" r="0.77"/><circle cx="50.6" cy="259.5" r="0.37"/><circle cx="50.8" cy="252.2" r="0.40"/><circle cx="50.2" cy="261.0" r="0.75"/><circle cx="48.3" cy="253.9" r="0.83"/><circle cx="50.9" cy="260.3" r="0.42"/><circle cx="50.5" cy="257.5" r="0.35"/><circle cx="49.1" cy="261.0" r="0.76"/><circle cx="51.4" cy="256.7" r="0.71"/><circle cx="50.2" cy="254.8" r="0.37"/><circle cx="48.8" cy="252.6" r="0.36"/><circle cx="50.7" cy="251.6" r="0.71"/><circle cx="49.2" cy="254.2" r="0.96"/><circle cx="49.3" cy="257.9" r="0.68"/><circle cx="51.8" cy="248.3" r="0.84"/><circle cx="48.5" cy="253.4" r="0.75"/><circle cx="52.9" cy="253.0" r="0.83"/><circle cx="50.9" cy="260.6" r="0.61"/></g><g fill="#000" opacity="1.0"><circle cx="84.7" cy="262.7" r="0.68"/><circle cx="84.2" cy="249.3" r="0.84"/><circle cx="84.1" cy="247.9" r="1.29"/><circle cx="86.2" cy="254.9" r="0.71"/><circle cx="83.9" cy="249.8" r="1.25"/><circle cx="83.5" cy="256.6" r="0.52"/><circle cx="83.2" cy="256.2" r="0.75"/><circle cx="85.5" cy="258.6" r="0.56"/><circle cx="85.1" cy="259.9" r="0.78"/><circle cx="83.1" cy="255.0" r="0.81"/><circle cx="84.6" cy="255.6" r="0.95"/><circle cx="85.4" cy="254.2" r="0.78"/><circle cx="83.8" cy="261.8" r="0.89"/><circle cx="84.5" cy="254.6" r="0.61"/><circle cx="84.8" cy="259.8" r="0.82"/><circle cx="83.0" cy="260.8" r="0.85"/><circle cx="82.8" cy="251.0" r="1.01"/><circle cx="83.0" cy="250.5" r="0.77"/><circle cx="86.4" cy="257.0" r="0.93"/><circle cx="84.2" cy="254.1" r="1.10"/><circle cx="83.4" cy="259.9" r="0.73"/><circle cx="85.5" cy="252.6" r="0.72"/><circle cx="85.1" cy="252.7" r="0.72"/><circle cx="82.5" cy="255.7" r="0.59"/><circle cx="84.9" cy="262.6" r="0.56"/></g><ellipse cx="118.5" cy="255.0" rx="3.2" ry="11" fill="#000" filter="url(#bl05)"/><path d="M131.5 254.0 L147.5 270.0" stroke="#222" stroke-width="1.2" transform="translate(4,2)"/><path d="M135.5 250.0 L151.5 266.0" stroke="#222" stroke-width="1.2" transform="translate(4,2)"/><path d="M139.5 246.0 L155.5 262.0" stroke="#222" stroke-width="1.2" transform="translate(4,2)"/><path d="M143.5 242.0 L159.5 258.0" stroke="#222" stroke-width="1.2" transform="translate(4,2)"/><path d="M147.5 238.0 L163.5 254.0" stroke="#222" stroke-width="1.2" transform="translate(4,2)"/><circle cx="14.5" cy="289.0" r="0.8" fill="#000"/><g filter="url(#bl2)"><g fill="#555" opacity="0.45"><circle cx="41.6" cy="294.3" r="1.66"/><circle cx="51.4" cy="285.8" r="1.87"/><circle cx="43.9" cy="297.3" r="1.37"/><circle cx="56.5" cy="284.1" r="1.11"/><circle cx="55.1" cy="295.4" r="0.86"/><circle cx="56.2" cy="298.5" r="1.49"/><circle cx="53.0" cy="286.1" r="1.38"/><circle cx="47.4" cy="289.6" r="1.12"/><circle cx="59.2" cy="284.3" r="1.41"/><circle cx="42.0" cy="282.0" r="1.94"/><circle cx="48.8" cy="287.9" r="1.85"/><circle cx="53.1" cy="293.4" r="0.96"/><circle cx="41.8" cy="288.3" r="1.35"/><circle cx="46.9" cy="289.7" r="1.66"/><circle cx="44.7" cy="287.6" r="1.80"/><circle cx="61.1" cy="284.7" r="1.98"/><circle cx="56.7" cy="291.9" r="1.34"/><circle cx="50.1" cy="299.0" r="1.89"/><circle cx="55.6" cy="295.1" r="1.96"/><circle cx="56.2" cy="284.2" r="0.93"/><circle cx="42.7" cy="291.2" r="1.74"/><circle cx="52.7" cy="294.1" r="1.98"/><circle cx="59.4" cy="289.7" r="0.91"/><circle cx="50.5" cy="281.8" r="1.91"/><circle cx="52.3" cy="299.9" r="1.07"/><circle cx="53.1" cy="289.8" r="0.89"/><circle cx="41.5" cy="296.6" r="1.23"/><circle cx="50.2" cy="287.4" r="1.42"/><circle cx="47.6" cy="288.3" r="1.50"/><circle cx="44.7" cy="291.0" r="1.80"/><circle cx="49.3" cy="285.9" r="0.93"/><circle cx="55.6" cy="290.7" r="1.56"/><circle cx="62.0" cy="286.7" r="1.84"/><circle cx="57.9" cy="296.3" r="1.71"/><circle cx="38.7" cy="291.0" r="1.52"/><circle cx="54.0" cy="292.2" r="0.96"/><circle cx="43.5" cy="283.2" r="1.83"/><circle cx="51.2" cy="289.0" r="1.97"/><circle cx="50.1" cy="294.4" r="1.84"/><circle cx="58.5" cy="295.7" r="1.88"/><circle cx="42.3" cy="285.6" r="0.81"/><circle cx="43.5" cy="283.4" r="1.73"/><circle cx="47.3" cy="288.6" r="1.07"/><circle cx="49.0" cy="286.8" r="0.93"/><circle cx="50.4" cy="299.5" r="1.46"/><circle cx="43.2" cy="298.2" r="1.50"/><circle cx="51.1" cy="297.5" r="1.83"/><circle cx="45.6" cy="294.4" r="1.49"/><circle cx="59.6" cy="288.3" r="1.02"/><circle cx="45.2" cy="286.0" r="1.37"/><circle cx="50.2" cy="287.9" r="1.41"/><circle cx="47.0" cy="297.1" r="1.78"/><circle cx="41.6" cy="290.9" r="1.15"/><circle cx="50.2" cy="297.0" r="1.44"/><circle cx="52.2" cy="299.1" r="1.40"/><circle cx="47.3" cy="293.2" r="1.80"/><circle cx="59.9" cy="282.3" r="1.10"/><circle cx="58.7" cy="292.9" r="0.83"/><circle cx="56.4" cy="281.5" r="1.20"/><circle cx="41.6" cy="292.4" r="0.99"/><circle cx="43.6" cy="296.8" r="1.62"/><circle cx="47.9" cy="287.4" r="1.06"/><circle cx="50.4" cy="290.5" r="1.57"/><circle cx="40.2" cy="283.9" r="1.47"/><circle cx="57.1" cy="285.3" r="1.42"/><circle cx="49.0" cy="296.4" r="1.92"/><circle cx="50.2" cy="289.0" r="1.22"/><circle cx="53.4" cy="297.6" r="1.41"/><circle cx="39.2" cy="290.7" r="1.71"/><circle cx="51.8" cy="289.8" r="1.64"/><circle cx="42.9" cy="283.7" r="1.40"/><circle cx="57.8" cy="290.7" r="1.80"/><circle cx="49.0" cy="287.9" r="0.95"/><circle cx="57.4" cy="284.3" r="1.00"/><circle cx="47.4" cy="278.0" r="1.84"/><circle cx="44.0" cy="280.6" r="0.91"/><circle cx="40.2" cy="291.4" r="1.21"/><circle cx="57.3" cy="297.6" r="1.65"/><circle cx="52.8" cy="289.1" r="1.47"/><circle cx="59.1" cy="286.4" r="1.85"/><circle cx="57.3" cy="294.3" r="1.02"/><circle cx="48.6" cy="292.3" r="1.36"/><circle cx="59.4" cy="291.7" r="1.58"/><circle cx="59.0" cy="283.2" r="0.89"/><circle cx="56.2" cy="282.9" r="1.92"/><circle cx="47.8" cy="289.1" r="1.64"/><circle cx="56.0" cy="299.5" r="1.45"/><circle cx="56.9" cy="284.5" r="1.19"/><circle cx="45.4" cy="280.7" r="1.35"/><circle cx="49.4" cy="296.0" r="1.66"/><circle cx="51.0" cy="292.9" r="1.38"/><circle cx="49.2" cy="287.0" r="1.13"/><circle cx="55.8" cy="288.0" r="1.73"/><circle cx="49.6" cy="291.6" r="1.38"/><circle cx="57.5" cy="281.5" r="0.86"/><circle cx="47.9" cy="280.4" r="1.38"/><circle cx="46.4" cy="282.0" r="1.02"/><circle cx="49.3" cy="285.7" r="1.17"/><circle cx="55.6" cy="282.1" r="1.41"/><circle cx="48.5" cy="281.4" r="1.26"/><circle cx="49.3" cy="288.6" r="1.22"/><circle cx="62.1" cy="291.9" r="1.89"/><circle cx="48.2" cy="285.7" r="1.83"/><circle cx="48.3" cy="299.3" r="1.58"/><circle cx="42.6" cy="282.9" r="1.12"/><circle cx="54.7" cy="281.8" r="1.71"/><circle cx="53.3" cy="284.5" r="1.29"/><circle cx="48.8" cy="291.0" r="1.85"/><circle cx="47.4" cy="281.8" r="1.45"/><circle cx="52.3" cy="287.3" r="1.23"/><circle cx="47.3" cy="281.4" r="1.40"/><circle cx="50.2" cy="293.9" r="1.60"/><circle cx="44.3" cy="298.7" r="1.88"/><circle cx="56.0" cy="288.0" r="1.42"/><circle cx="55.6" cy="293.0" r="0.89"/><circle cx="38.8" cy="288.9" r="1.71"/><circle cx="46.9" cy="293.2" r="1.92"/><circle cx="60.8" cy="292.5" r="1.83"/><circle cx="61.1" cy="293.9" r="1.58"/><circle cx="45.0" cy="293.6" r="1.53"/></g></g><circle cx="84.5" cy="289.0" r="14" fill="url(#glow)"/><g fill="#000" opacity="1.0"><circle cx="106.7" cy="287.1" r="0.93"/><circle cx="118.2" cy="289.6" r="0.85"/><circle cx="112.5" cy="281.6" r="0.35"/><circle cx="129.3" cy="294.2" r="0.55"/><circle cx="105.9" cy="291.0" r="0.44"/><circle cx="116.9" cy="287.3" r="0.69"/><circle cx="118.2" cy="285.1" r="0.83"/><circle cx="129.9" cy="286.9" r="0.85"/><circle cx="128.6" cy="285.8" r="0.68"/><circle cx="123.6" cy="279.6" r="0.74"/><circle cx="116.2" cy="285.3" r="0.54"/><circle cx="113.1" cy="298.7" r="0.85"/><circle cx="115.2" cy="300.6" r="0.34"/><circle cx="124.7" cy="291.3" r="0.35"/><circle cx="125.2" cy="287.0" r="0.57"/><circle cx="124.0" cy="282.5" r="0.74"/><circle cx="110.9" cy="291.8" r="0.97"/><circle cx="117.0" cy="297.0" r="0.63"/><circle cx="121.1" cy="291.9" r="0.65"/><circle cx="120.9" cy="282.1" r="0.34"/><circle cx="122.1" cy="287.6" r="0.92"/><circle cx="128.1" cy="291.6" r="0.40"/><circle cx="118.0" cy="296.1" r="0.83"/><circle cx="111.4" cy="291.8" r="0.58"/><circle cx="112.5" cy="288.3" r="0.97"/><circle cx="119.9" cy="292.3" r="0.68"/><circle cx="112.1" cy="296.9" r="0.33"/><circle cx="115.3" cy="283.1" r="0.95"/><circle cx="116.1" cy="295.9" r="0.52"/><circle cx="112.6" cy="287.8" r="0.77"/><circle cx="109.5" cy="294.1" r="0.50"/><circle cx="109.7" cy="291.3" r="0.80"/><circle cx="114.0" cy="283.1" r="0.36"/><circle cx="121.6" cy="291.5" r="0.43"/><circle cx="122.6" cy="297.6" r="0.54"/><circle cx="123.1" cy="286.3" r="0.47"/><circle cx="120.2" cy="292.4" r="0.78"/><circle cx="113.5" cy="286.5" r="0.87"/><circle cx="115.0" cy="282.6" r="0.73"/><circle cx="114.1" cy="282.9" r="0.36"/><circle cx="110.2" cy="297.7" r="0.56"/><circle cx="116.6" cy="286.9" r="0.84"/><circle cx="123.2" cy="284.0" r="0.56"/><circle cx="112.8" cy="288.6" r="0.45"/><circle cx="125.7" cy="295.9" r="0.66"/><circle cx="130.7" cy="285.8" r="0.91"/><circle cx="129.5" cy="285.3" r="0.32"/><circle cx="127.3" cy="297.6" r="0.91"/><circle cx="111.2" cy="283.0" r="0.61"/><circle cx="114.9" cy="290.7" r="0.68"/></g><g fill="#000" opacity="1.0"><circle cx="151.9" cy="292.1" r="1.08"/><circle cx="141.8" cy="284.4" r="0.56"/><circle cx="147.2" cy="286.6" r="1.05"/><circle cx="155.1" cy="297.2" r="0.80"/><circle cx="151.2" cy="291.1" r="0.74"/><circle cx="141.1" cy="287.6" r="0.48"/><circle cx="155.0" cy="294.0" r="1.02"/><circle cx="153.6" cy="297.3" r="0.33"/><circle cx="161.7" cy="293.4" r="0.75"/><circle cx="158.8" cy="293.6" r="1.15"/><circle cx="145.4" cy="293.9" r="0.68"/><circle cx="150.5" cy="288.9" r="1.09"/><circle cx="146.5" cy="286.2" r="0.56"/><circle cx="157.3" cy="298.7" r="1.06"/><circle cx="145.6" cy="294.6" r="0.80"/><circle cx="153.0" cy="290.4" r="0.96"/><circle cx="157.3" cy="295.7" r="0.32"/><circle cx="156.9" cy="289.5" r="0.89"/><circle cx="142.7" cy="281.9" r="0.89"/><circle cx="151.5" cy="288.9" r="1.16"/><circle cx="140.7" cy="289.7" r="0.34"/><circle cx="156.7" cy="282.9" r="0.50"/><circle cx="150.2" cy="290.3" r="0.82"/><circle cx="154.5" cy="297.7" r="0.46"/><circle cx="148.9" cy="281.3" r="0.94"/><circle cx="158.5" cy="287.4" r="0.91"/><circle cx="142.8" cy="295.2" r="1.04"/><circle cx="153.3" cy="280.9" r="0.54"/><circle cx="163.2" cy="283.1" r="1.15"/><circle cx="146.4" cy="297.3" r="0.91"/><circle cx="158.6" cy="280.9" r="0.71"/><circle cx="143.5" cy="294.9" r="0.89"/><circle cx="140.9" cy="286.5" r="0.33"/><circle cx="160.7" cy="289.6" r="0.39"/><circle cx="154.2" cy="286.9" r="1.09"/><circle cx="153.1" cy="292.3" r="0.98"/><circle cx="149.2" cy="283.2" r="0.84"/><circle cx="140.6" cy="285.5" r="0.76"/><circle cx="144.6" cy="287.3" r="0.67"/><circle cx="151.2" cy="286.3" r="0.92"/><circle cx="162.4" cy="284.9" r="0.79"/><circle cx="150.6" cy="291.2" r="0.38"/><circle cx="140.8" cy="286.5" r="1.08"/><circle cx="156.9" cy="297.5" r="1.03"/><circle cx="140.7" cy="290.3" r="0.47"/><circle cx="148.0" cy="295.3" r="0.95"/><circle cx="146.5" cy="290.7" r="1.08"/><circle cx="146.5" cy="293.1" r="0.50"/><circle cx="142.0" cy="290.0" r="0.63"/><circle cx="148.0" cy="282.9" r="0.31"/><circle cx="158.5" cy="287.8" r="0.79"/><circle cx="157.4" cy="287.9" r="0.36"/><circle cx="153.7" cy="292.4" r="1.07"/><circle cx="150.6" cy="288.8" r="0.54"/><circle cx="148.0" cy="288.7" r="0.58"/><circle cx="159.1" cy="285.2" r="0.51"/><circle cx="149.6" cy="287.3" r="0.77"/><circle cx="150.7" cy="286.9" r="0.79"/><circle cx="148.5" cy="297.6" r="0.85"/><circle cx="160.6" cy="284.6" r="0.46"/><circle cx="156.7" cy="297.2" r="1.03"/><circle cx="159.6" cy="291.5" r="0.55"/><circle cx="140.8" cy="291.1" r="0.80"/><circle cx="152.1" cy="279.6" r="0.55"/><circle cx="147.2" cy="284.9" r="0.73"/><circle cx="142.5" cy="287.4" r="0.45"/><circle cx="154.8" cy="285.9" r="0.58"/><circle cx="160.0" cy="280.1" r="0.63"/><circle cx="154.2" cy="288.5" r="1.16"/><circle cx="153.0" cy="290.4" r="0.99"/><circle cx="158.3" cy="296.9" r="0.31"/><circle cx="157.5" cy="293.2" r="0.38"/><circle cx="145.7" cy="290.1" r="0.96"/><circle cx="139.8" cy="289.5" r="1.06"/><circle cx="158.4" cy="298.2" r="1.11"/><circle cx="144.4" cy="286.0" r="0.45"/><circle cx="150.2" cy="293.0" r="0.48"/><circle cx="147.5" cy="285.3" r="0.99"/><circle cx="142.1" cy="284.6" r="0.38"/><circle cx="157.5" cy="283.0" r="0.87"/><circle cx="153.3" cy="297.8" r="0.67"/><circle cx="150.8" cy="281.2" r="0.43"/><circle cx="149.1" cy="297.8" r="0.31"/><circle cx="146.4" cy="283.4" r="0.94"/><circle cx="148.5" cy="295.2" r="0.73"/><circle cx="152.5" cy="286.7" r="0.76"/><circle cx="151.9" cy="297.0" r="0.53"/><circle cx="154.0" cy="293.4" r="1.11"/><circle cx="144.6" cy="296.7" r="0.96"/><circle cx="151.4" cy="296.7" r="0.31"/></g><path d="M129.5 30.5 L135.5 30.5 M132.5 27.5 L132.5 33.5" stroke="#111" stroke-width="1.3"/><path d="M163.5 30.5 L169.5 30.5 M166.5 27.5 L166.5 33.5" stroke="#111" stroke-width="1.3"/><path d="M27.5 64.5 L33.5 64.5 M30.5 61.5 L30.5 67.5" stroke="#111" stroke-width="1.3"/><path d="M61.5 64.5 L67.5 64.5 M64.5 61.5 L64.5 67.5" stroke="#111" stroke-width="1.3"/><path d="M95.5 64.5 L101.5 64.5 M98.5 61.5 L98.5 67.5" stroke="#111" stroke-width="1.3"/><path d="M129.5 64.5 L135.5 64.5 M132.5 61.5 L132.5 67.5" stroke="#111" stroke-width="1.3"/><path d="M163.5 64.5 L169.5 64.5 M166.5 61.5 L166.5 67.5" stroke="#111" stroke-width="1.3"/><path d="M27.5 98.5 L33.5 98.5 M30.5 95.5 L30.5 101.5" stroke="#111" stroke-width="1.3"/><path d="M61.5 98.5 L67.5 98.5 M64.5 95.5 L64.5 101.5" stroke="#111" stroke-width="1.3"/><path d="M95.5 98.5 L101.5 98.5 M98.5 95.5 L98.5 101.5" stroke="#111" stroke-width="1.3"/><path d="M129.5 98.5 L135.5 98.5 M132.5 95.5 L132.5 101.5" stroke="#111" stroke-width="1.3"/><path d="M163.5 98.5 L169.5 98.5 M166.5 95.5 L166.5 101.5" stroke="#111" stroke-width="1.3"/><path d="M27.5 132.5 L33.5 132.5 M30.5 129.5 L30.5 135.5" stroke="#111" stroke-width="1.3"/><path d="M95.5 132.5 L101.5 132.5 M98.5 129.5 L98.5 135.5" stroke="#111" stroke-width="1.3"/><path d="M129.5 132.5 L135.5 132.5 M132.5 129.5 L132.5 135.5" stroke="#111" stroke-width="1.3"/><path d="M163.5 132.5 L169.5 132.5 M166.5 129.5 L166.5 135.5" stroke="#111" stroke-width="1.3"/><path d="M27.5 166.5 L33.5 166.5 M30.5 163.5 L30.5 169.5" stroke="#111" stroke-width="1.3"/><path d="M61.5 166.5 L67.5 166.5 M64.5 163.5 L64.5 169.5" stroke="#111" stroke-width="1.3"/><path d="M95.5 166.5 L101.5 166.5 M98.5 163.5 L98.5 169.5" stroke="#111" stroke-width="1.3"/><path d="M129.5 166.5 L135.5 166.5 M132.5 163.5 L132.5 169.5" stroke="#111" stroke-width="1.3"/><path d="M163.5 166.5 L169.5 166.5 M166.5 163.5 L166.5 169.5" stroke="#111" stroke-width="1.3"/><path d="M27.5 200.5 L33.5 200.5 M30.5 197.5 L30.5 203.5" stroke="#111" stroke-width="1.3"/><path d="M61.5 200.5 L67.5 200.5 M64.5 197.5 L64.5 203.5" stroke="#111" stroke-width="1.3"/><path d="M95.5 200.5 L101.5 200.5 M98.5 197.5 L98.5 203.5" stroke="#111" stroke-width="1.3"/><path d="M129.5 200.5 L135.5 200.5 M132.5 197.5 L132.5 203.5" stroke="#111" stroke-width="1.3"/><path d="M163.5 200.5 L169.5 200.5 M166.5 197.5 L166.5 203.5" stroke="#111" stroke-width="1.3"/><path d="M27.5 234.5 L33.5 234.5 M30.5 231.5 L30.5 237.5" stroke="#111" stroke-width="1.3"/><path d="M61.5 234.5 L67.5 234.5 M64.5 231.5 L64.5 237.5" stroke="#111" stroke-width="1.3"/><path d="M95.5 234.5 L101.5 234.5 M98.5 231.5 L98.5 237.5" stroke="#111" stroke-width="1.3"/><path d="M129.5 234.5 L135.5 234.5 M132.5 231.5 L132.5 237.5" stroke="#111" stroke-width="1.3"/><path d="M163.5 234.5 L169.5 234.5 M166.5 231.5 L166.5 237.5" stroke="#111" stroke-width="1.3"/><path d="M27.5 268.5 L33.5 268.5 M30.5 265.5 L30.5 271.5" stroke="#111" stroke-width="1.3"/><path d="M61.5 268.5 L67.5 268.5 M64.5 265.5 L64.5 271.5" stroke="#111" stroke-width="1.3"/><path d="M95.5 268.5 L101.5 268.5 M98.5 265.5 L98.5 271.5" stroke="#111" stroke-width="1.3"/><path d="M163.5 268.5 L169.5 268.5 M166.5 265.5 L166.5 271.5" stroke="#111" stroke-width="1.3"/><path d="M61.5 302.5 L67.5 302.5 M64.5 299.5 L64.5 305.5" stroke="#111" stroke-width="1.3"/><path d="M95.5 302.5 L101.5 302.5 M98.5 299.5 L98.5 305.5" stroke="#111" stroke-width="1.3"/><path d="M129.5 302.5 L135.5 302.5 M132.5 299.5 L132.5 305.5" stroke="#111" stroke-width="1.3"/><path d="M163.5 302.5 L169.5 302.5 M166.5 299.5 L166.5 305.5" stroke="#111" stroke-width="1.3"/><path d="M100.0 27.0 L100.0 32.0 L95.0 32.0 Z" fill="#8a9ad0"/><path d="M66.0 129.0 L66.0 134.0 L61.0 134.0 Z" fill="#e0a0a0"/><path d="M134.0 265.0 L134.0 270.0 L129.0 270.0 Z" fill="#e0a0a0"/><rect x="68.5" y="34.5" width="33.0" height="33.0" fill="none" stroke="#000" stroke-width="1.3"/></svg><div class="r" style="left:1359.5px;top:430px;width:193px;height:17px;background:#1e1e1e;"></div><div class="t" style="left:1361.3px;top:433.69px;font-size:11px;color:#dcdcdc;letter-spacing:0.3px;">Basic,</div><svg class="r" style="left:1537px;top:434px;" width="14" height="8" viewBox="0 0 14 8"><path d="M1.5 1.5 L7 6.5 L12.5 1.5" fill="none" stroke="#f0f0f0" stroke-width="1.8"/></svg><div class="r" style="left:1358px;top:449px;width:197px;height:17px;background:#2a2a2a;box-sizing:border-box;border:1px solid #6a6a6a;"></div><div class="r" style="left:1359px;top:450px;width:6px;height:15px;background:#5a5a5a;"></div><div class="r" style="left:1365px;top:450px;width:1px;height:15px;background:#111;"></div><div class="t" style="left:1359.5px;top:452.29px;font-size:11px;color:#dcdcdc;">Интервал</div><div class="t" style="left:1140px;width:400px;text-align:right;top:452.29px;font-size:11px;color:#dcdcdc;">10.0</div><svg class="r" style="left:1544px;top:450px;" width="11" height="16" viewBox="0 0 11 16"><path d="M2 6.5 L5.5 2.5 L9 6.5 M2 9.5 L5.5 13.5 L9 9.5" fill="none" stroke="#ddd" stroke-width="1.5"/></svg><svg class="r" style="left:1366px;top:471px;" width="14" height="13" viewBox="0 0 14 13"><path d="M1 2 L6 2 M1 6 L4 6 M1 10 L3 10 M1 12.5 L10 12.5" stroke="#cfcfcf" stroke-width="1.5"/><path d="M5 10 L11 3 L13 5 L7 11 L4.5 11.5Z" fill="#cfcfcf"/></svg><svg class="r" style="left:1398px;top:470px;" width="14" height="15" viewBox="0 0 14 15"><path d="M3.5 5 L3.5 14 L12.5 14 L12.5 6 L9.5 3 L6 3" stroke="#cfcfcf" stroke-width="1.5" fill="none"/><path d="M3.5 0.5 L3.5 6 M0.5 3 L6 3" stroke="#cfcfcf" stroke-width="1.5"/></svg><svg class="r" style="left:1431px;top:471px;" width="14" height="14" viewBox="0 0 14 14"><rect x="1" y="1" width="8" height="6" fill="none" stroke="#cfcfcf" stroke-width="1.4"/><path d="M11 4.5 L12.5 4.5 L12.5 12.5 L4.5 12.5 L4.5 9" stroke="#cfcfcf" stroke-width="1.4" fill="none"/></svg><svg class="r" style="left:1463px;top:471px;" width="14" height="14" viewBox="0 0 14 14"><rect x="0.5" y="0.5" width="13" height="13" fill="#cfcfcf" opacity="0.85"/><path d="M3 3 L11 11 M11 3 L3 11" stroke="#3c3c3c" stroke-width="2"/></svg><svg class="r" style="left:1494px;top:471px;" width="14" height="14" viewBox="0 0 14 14"><path d="M11.5 5 A5 5 0 1 0 12 8.5" stroke="#cfcfcf" stroke-width="2" fill="none"/><path d="M8.5 1 L13.5 1.5 L12.5 6.5Z" fill="#cfcfcf"/></svg><svg class="r" style="left:1529px;top:470px;" width="15" height="15" viewBox="0 0 15 15"><path d="M1 9 L3 5 L9 5 L9 1 L12 1 L14 4 L14 14 L1 14Z" fill="#cfcfcf" opacity="0.85"/><rect x="3" y="6.5" width="9" height="1" fill="#3c3c3c"/></svg><svg class="r" style="left:1446px;top:491px;" width="20" height="4" viewBox="0 0 20 4"><rect x="0" y="1" width="4" height="2" fill="#bbb"/><rect x="7" y="1" width="4" height="2" fill="#bbb"/><rect x="14" y="1" width="4" height="2" fill="#bbb"/></svg><div class="r" style="left:1402px;top:498px;width:125px;height:20px;background:#2c2c2c;"></div><div class="r" style="left:1462px;top:498px;width:1px;height:20px;background:#3a3a3a;"></div><div class="r" style="left:1356px;top:496px;width:47px;height:1px;background:#5c5c5c;"></div><div class="r" style="left:1356px;top:496px;width:1px;height:23px;background:#5c5c5c;"></div><div class="r" style="left:1402px;top:496px;width:1px;height:23px;background:#5c5c5c;"></div><div class="r" style="left:1357px;top:519px;width:200px;height:519px;background:#3d3d3d;"></div><div class="r" style="left:1356px;top:518px;width:202px;height:1px;background:#5c5c5c;"></div><div class="r" style="left:1356px;top:518px;width:1px;height:521px;background:#5c5c5c;"></div><div class="r" style="left:1557px;top:518px;width:1px;height:521px;background:#5c5c5c;"></div><svg class="r" style="left:1357px;top:499px;" width="14" height="14" viewBox="0 0 14 14"><path d="M3 1 L13 1 L11 4 L1 4Z M3 5.5 L13 5.5 L11 8.5 L1 8.5Z M3 10 L13 10 L11 13 L1 13Z" fill="#cfcfcf"/></svg><div class="t" style="left:1372px;top:502.39px;font-size:11px;color:#e0e0e0;">Слои</div><svg class="r" style="left:1403px;top:500px;" width="14" height="14" viewBox="0 0 14 14"><rect x="0.7" y="0.7" width="12.6" height="12.6" fill="none" stroke="#cfcfcf" stroke-width="1.3"/><path d="M4.5 3 L4.5 11 M7 3 L7 11 M9.5 3 L9.5 11" stroke="#cfcfcf" stroke-width="1.2"/></svg><div class="t" style="left:1418px;top:501.47px;font-size:11.5px;color:#e0e0e0;">Каналы</div><svg class="r" style="left:1463px;top:500px;" width="14" height="14" viewBox="0 0 14 14"><path d="M1 2 L13 2 M1 2 L1 5 M13 2 L13 5 M2 12 Q7 3 12 12" stroke="#cfcfcf" stroke-width="1.8" fill="none"/></svg><div class="t" style="left:1478px;top:501.47px;font-size:11.5px;color:#e0e0e0;">Контуры</div><svg class="r" style="left:1542px;top:502px;" width="11" height="11" viewBox="0 0 11 11"><rect x="0.5" y="0.5" width="10" height="10" fill="none" stroke="#c8c8c8"/><path d="M3 5.5 L8 2.5 L8 8.5Z" fill="#c8c8c8"/></svg><div class="r" style="left:1358px;top:521px;width:153px;height:29px;background:#2d2d2d;border-radius:4px;box-sizing:border-box;border:1px solid #222;"></div><div class="t" style="left:1364.3px;top:531.19px;font-size:11px;color:#7a7a7a;">Режим</div><div class="t" style="left:1419.5px;top:531.19px;font-size:11px;color:#7a7a7a;">Нормальный</div><svg class="r" style="left:1490px;top:531px;" width="14" height="8" viewBox="0 0 14 8"><path d="M1.5 1.5 L7 6.5 L12.5 1.5" fill="none" stroke="#e8e8e8" stroke-width="1.8"/></svg><div class="r" style="left:1512.5px;top:521px;width:42px;height:29px;background:#2d2d2d;border-radius:4px;box-sizing:border-box;border:1px solid #222;"></div><svg class="r" style="left:1517px;top:528px;" width="14" height="14" viewBox="0 0 14 14"><path d="M4 4 A5 5 0 1 1 6 12" stroke="#cfcfcf" stroke-width="1.6" fill="none" stroke-dasharray="2 1"/><path d="M1 3 L6 2 L5 7Z" fill="#cfcfcf"/></svg><svg class="r" style="left:1535px;top:531px;" width="14" height="8" viewBox="0 0 14 8"><path d="M1.5 1.5 L7 6.5 L12.5 1.5" fill="none" stroke="#e8e8e8" stroke-width="1.8"/></svg><div class="r" style="left:1358.5px;top:552px;width:194px;height:14px;background:#2a2a2a;"></div><div class="r" style="left:1358.5px;top:552px;width:183.5px;height:14px;background:#5a5a5a;"></div><div class="r" style="left:1542px;top:552px;width:1px;height:14px;background:#111;"></div><div class="t" style="left:1359.5px;top:554.49px;font-size:11px;color:#e8e8e8;">Непрозрачность</div><div class="t" style="left:1140px;width:400px;text-align:right;top:554.49px;font-size:11px;color:#e8e8e8;">100.0</div><svg class="r" style="left:1544px;top:552px;" width="9" height="14" viewBox="0 0 9 14"><path d="M1.5 5.5 L4.5 2 L7.5 5.5 M1.5 8.5 L4.5 12 L7.5 8.5" fill="none" stroke="#777" stroke-width="1.3"/></svg><svg class="r" style="left:1352px;top:539px;" width="4" height="24" viewBox="0 0 4 24"><rect x="1" y="0" width="2" height="4" fill="#ccc"/><rect x="1" y="9" width="2" height="4" fill="#ccc"/><rect x="1" y="18" width="2" height="4" fill="#ccc"/></svg><div class="t" style="left:1357.5px;top:575.27px;font-size:11.5px;color:#b8b8b8;">Блокировка:</div><svg class="r" style="left:1429px;top:574px;" width="14" height="14" viewBox="0 0 14 14"><path d="M2 13 L12 2" stroke="#cfcfcf" stroke-width="2.2" stroke-dasharray="1.5 0.8"/></svg><svg class="r" style="left:1452px;top:573px;" width="15" height="15" viewBox="0 0 15 15"><path d="M7.5 1 L7.5 14 M1 7.5 L14 7.5 M5 3.5 L7.5 1 L10 3.5 M5 11.5 L7.5 14 L10 11.5 M3.5 5 L1 7.5 L3.5 10 M11.5 5 L14 7.5 L11.5 10" stroke="#cfcfcf" stroke-width="1.3" fill="none"/></svg><svg class="r" style="left:1476px;top:574px;" width="14" height="14" viewBox="0 0 14 14"><rect width="14" height="14" fill="#cfcfcf" opacity="0.8"/><path d="M0 0 L14 14 M14 0 L0 14 M7 0 L14 7 L7 14 L0 7Z" stroke="#555" stroke-width="0.8" fill="none"/></svg><div class="r" style="left:1359.5px;top:593px;width:194.5px;height:419.5px;background:#313131;"></div><div class="r" style="left:1359.5px;top:593px;width:194.5px;height:22px;background:#3c3c3c;"></div><div class="r" style="left:1381px;top:593px;width:1px;height:22px;background:#2e2e2e;"></div><div class="r" style="left:1404.5px;top:593px;width:1px;height:22px;background:#2e2e2e;"></div><svg class="r" style="left:1362px;top:597px;" width="16" height="13" viewBox="0 0 16 13"><path d="M1 6.5 Q8 0 15 6.5 Q8 13 1 6.5Z" fill="none" stroke="#cfcfcf" stroke-width="1.4"/><circle cx="8" cy="6.5" r="2.6" fill="#cfcfcf"/></svg><svg class="r" style="left:1387px;top:596px;" width="12" height="16" viewBox="0 0 12 16"><rect x="2.5" y="1" width="7" height="5" rx="2" fill="none" stroke="#cfcfcf" stroke-width="1.6"/><rect x="5" y="6" width="2" height="4" fill="#cfcfcf"/><path d="M1 15 L3 10 L9 10 L11 15" stroke="#cfcfcf" stroke-width="1.6" fill="none"/></svg><div class="r" style="left:1357px;top:1012px;width:200px;height:26px;background:#3c3c3c;"></div><div class="r" style="left:1356px;top:1038px;width:202px;height:1px;background:#5c5c5c;"></div><svg class="r" style="left:1361px;top:1017px;" width="14" height="15" viewBox="0 0 14 15"><path d="M3.5 4 L3.5 13 L12.5 13 L12.5 5 L9.5 2 L6 2" stroke="#cfcfcf" stroke-width="1.5" fill="none"/><path d="M3.5 0 L3.5 5.5 M0.5 2.5 L6 2.5" stroke="#cfcfcf" stroke-width="1.5"/></svg><svg class="r" style="left:1386px;top:1017px;" width="14" height="15" viewBox="0 0 14 15"><path d="M1 3 L6 3 L7.5 5 L13 5 L13 14 L1 14Z" fill="#cfcfcf" opacity="0.85"/><path d="M7 7.5 L7 12.5 M4.5 10 L9.5 10" stroke="#3c3c3c" stroke-width="1.8"/></svg><svg class="r" style="left:1410px;top:1017px;" width="14" height="15" viewBox="0 0 14 15"><path d="M1.5 11 L7 5 L12.5 11" stroke="#cfcfcf" stroke-width="2" fill="none"/></svg><svg class="r" style="left:1434px;top:1017px;" width="14" height="15" viewBox="0 0 14 15"><path d="M1.5 5 L7 11 L12.5 5" stroke="#cfcfcf" stroke-width="2" fill="none"/></svg><svg class="r" style="left:1458px;top:1017px;" width="14" height="15" viewBox="0 0 14 15"><rect x="1" y="2" width="8" height="6" fill="none" stroke="#cfcfcf" stroke-width="1.4"/><path d="M11 5.5 L12.5 5.5 L12.5 13 L4.5 13 L4.5 10" stroke="#cfcfcf" stroke-width="1.4" fill="none"/></svg><svg class="r" style="left:1482px;top:1017px;" width="14" height="15" viewBox="0 0 14 15"><path d="M1 4 L8 4 M1 7.5 L8 7.5 M1 11 L8 11" stroke="#cfcfcf" stroke-width="1.8"/><path d="M11 1 L11 13 M9 10.5 L11 13 L13 10.5" stroke="#cfcfcf" stroke-width="1.5" fill="none"/></svg><svg class="r" style="left:1506px;top:1017px;" width="14" height="15" viewBox="0 0 14 15"><rect x="4" y="1" width="7" height="5" fill="none" stroke="#cfcfcf" stroke-width="1.3"/><path d="M1 13 L4 8 L13 8 L11 13Z" fill="#cfcfcf" opacity="0.85"/></svg><svg class="r" style="left:1533px;top:1017px;" width="14" height="15" viewBox="0 0 14 15"><rect x="0.5" y="0.5" width="13" height="13" fill="#cfcfcf" opacity="0.85"/><path d="M3 3 L11 11 M11 3 L3 11" stroke="#3c3c3c" stroke-width="2"/></svg>
</body></html>
